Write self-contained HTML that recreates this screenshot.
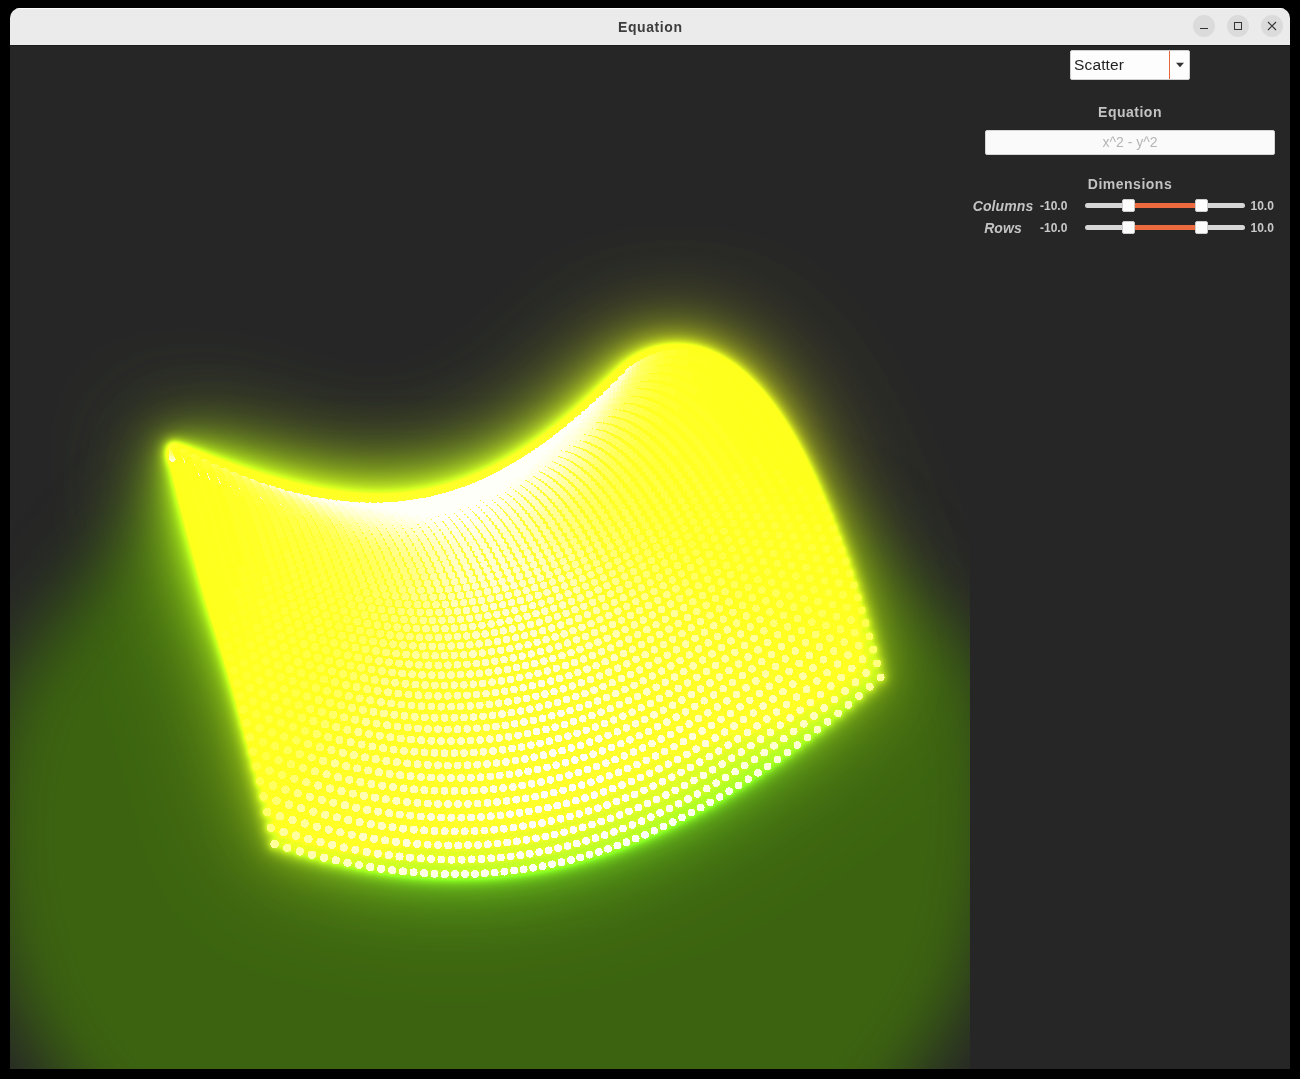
<!DOCTYPE html>
<html>
<head>
<meta charset="utf-8">
<title>Equation</title>
<style>
html,body{margin:0;padding:0;background:#000;}
body{width:1300px;height:1079px;position:relative;overflow:hidden;font-family:"Liberation Sans",sans-serif;}
#win{position:absolute;left:10px;top:8px;width:1280px;height:1061px;background:#262626;border-radius:10px 10px 0 0;overflow:hidden;}
#tb{position:absolute;left:0;top:0;width:1280px;height:37px;background:#ebebeb;box-shadow:inset 0 1px 0 #fbfbfb;border-bottom:1px solid #1b1b1b;box-sizing:content-box;}
#title{position:absolute;left:0;width:1280px;top:11px;text-align:center;font-weight:bold;font-size:14px;line-height:16px;color:#3d3d3d;letter-spacing:0.6px;text-indent:0.6px;}
.wb{position:absolute;top:7px;width:22px;height:22px;border-radius:11px;background:#dbdbdb;}
.wb svg{position:absolute;left:0;top:0;}
#view{position:absolute;left:0;top:37px;width:960px;height:1024px;overflow:hidden;background:#262626;}
#panel{position:absolute;left:960px;top:37px;width:320px;height:1024px;background:#262626;}
.lbl{position:absolute;color:#c3c3c3;font-weight:bold;font-size:14px;line-height:16px;white-space:nowrap;letter-spacing:0.5px;}
.it{font-style:italic;letter-spacing:0.1px;}
.num{position:absolute;color:#c9c9c9;font-weight:bold;font-size:12px;line-height:14px;white-space:nowrap;}
#combo{position:absolute;left:100px;top:5px;width:120px;height:30px;background:#fdfdfd;border:1px solid #cfcfcf;border-radius:2px;box-sizing:border-box;}
#combo .t{position:absolute;left:3px;top:5px;letter-spacing:0.15px;font-size:15.5px;line-height:17px;color:#222;}
#combo .sep{position:absolute;left:98px;top:0;width:1px;height:28px;background:#e4683a;}
#eq{position:absolute;left:15px;top:85px;width:290px;height:25px;background:#fafafa;border:1px solid #d4d4d4;border-radius:2px;box-sizing:border-box;text-align:center;color:#b5b5b5;font-size:14px;line-height:23px;}
.trk{position:absolute;left:115px;width:160px;height:5px;border-radius:2.5px;background:#d6d6d6;}
.fill{position:absolute;left:160px;width:70px;height:5px;background:#ec6b3e;}
.hd{position:absolute;width:13px;height:13px;background:#fdfdfd;border:1px solid #cdcdcd;border-radius:2px;box-sizing:border-box;}
</style>
</head>
<body>
<div id="win">
<div id="view">
<svg width="960" height="1024" viewBox="0 0 960 1024" style="position:absolute;left:0;top:0">
<defs>
<g id="d"><style>.a{fill:rgb(138,255,44)}.b{fill:rgb(138,255,46)}.c{fill:rgb(138,255,48)}.d{fill:rgb(138,255,50)}.e{fill:rgb(148,255,42)}.f{fill:rgb(148,255,44)}.g{fill:rgb(148,255,46)}.h{fill:rgb(148,255,48)}.i{fill:rgb(148,255,50)}.j{fill:rgb(158,255,40)}.k{fill:rgb(158,255,42)}.l{fill:rgb(158,255,44)}.m{fill:rgb(158,255,46)}.n{fill:rgb(158,255,48)}.o{fill:rgb(168,255,39)}.p{fill:rgb(168,255,40)}.q{fill:rgb(168,255,42)}.r{fill:rgb(168,255,44)}.s{fill:rgb(168,255,46)}.t{fill:rgb(168,255,48)}.u{fill:rgb(178,255,37)}.v{fill:rgb(178,255,39)}.w{fill:rgb(178,255,40)}.x{fill:rgb(178,255,42)}.y{fill:rgb(178,255,44)}.z{fill:rgb(178,255,46)}.aa{fill:rgb(189,255,6)}.ab{fill:rgb(189,255,8)}.ac{fill:rgb(189,255,10)}.ad{fill:rgb(189,255,12)}.ae{fill:rgb(189,255,14)}.af{fill:rgb(189,255,35)}.ag{fill:rgb(189,255,37)}.ah{fill:rgb(189,255,39)}.ai{fill:rgb(189,255,40)}.aj{fill:rgb(189,255,42)}.ak{fill:rgb(189,255,44)}.al{fill:rgb(199,255,6)}.am{fill:rgb(199,255,8)}.an{fill:rgb(199,255,10)}.ao{fill:rgb(199,255,12)}.ap{fill:rgb(199,255,14)}.aq{fill:rgb(199,255,16)}.ar{fill:rgb(199,255,18)}.as{fill:rgb(199,255,19)}.at{fill:rgb(199,255,33)}.au{fill:rgb(199,255,35)}.av{fill:rgb(199,255,37)}.aw{fill:rgb(199,255,39)}.ax{fill:rgb(199,255,40)}.ay{fill:rgb(199,255,42)}.az{fill:rgb(199,255,44)}.ba{fill:rgb(149,191,46)}.bb{fill:rgb(149,191,48)}.bc{fill:rgb(149,191,50)}.bd{fill:rgb(209,255,6)}.be{fill:rgb(209,255,8)}.bf{fill:rgb(209,255,10)}.bg{fill:rgb(209,255,12)}.bh{fill:rgb(209,255,14)}.bi{fill:rgb(209,255,16)}.bj{fill:rgb(209,255,18)}.bk{fill:rgb(209,255,19)}.bl{fill:rgb(209,255,21)}.bm{fill:rgb(209,255,23)}.bn{fill:rgb(209,255,25)}.bo{fill:rgb(209,255,27)}.bp{fill:rgb(209,255,31)}.bq{fill:rgb(209,255,33)}.br{fill:rgb(209,255,35)}.bs{fill:rgb(209,255,37)}.bt{fill:rgb(209,255,39)}.bu{fill:rgb(209,255,40)}.bv{fill:rgb(209,255,42)}.bw{fill:rgb(209,255,44)}.bx{fill:rgb(157,191,44)}.by{fill:rgb(209,255,46)}.bz{fill:rgb(157,191,46)}.ca{fill:rgb(209,255,48)}.cb{fill:rgb(157,191,48)}.cc{fill:rgb(209,255,50)}.cd{fill:rgb(157,191,50)}.ce{fill:rgb(219,255,8)}.cf{fill:rgb(219,255,10)}.cg{fill:rgb(219,255,12)}.ch{fill:rgb(219,255,14)}.ci{fill:rgb(219,255,16)}.cj{fill:rgb(219,255,18)}.ck{fill:rgb(219,255,19)}.cl{fill:rgb(219,255,21)}.cm{fill:rgb(219,255,23)}.cn{fill:rgb(219,255,25)}.co{fill:rgb(219,255,27)}.cp{fill:rgb(219,255,29)}.cq{fill:rgb(219,255,31)}.cr{fill:rgb(219,255,33)}.cs{fill:rgb(219,255,35)}.ct{fill:rgb(219,255,37)}.cu{fill:rgb(219,255,39)}.cv{fill:rgb(219,255,40)}.cw{fill:rgb(219,255,42)}.cx{fill:rgb(164,191,42)}.cy{fill:rgb(219,255,44)}.cz{fill:rgb(164,191,44)}.da{fill:rgb(219,255,46)}.db{fill:rgb(230,255,6)}.dc{fill:rgb(230,255,8)}.dd{fill:rgb(230,255,10)}.de{fill:rgb(230,255,12)}.df{fill:rgb(230,255,14)}.dg{fill:rgb(230,255,16)}.dh{fill:rgb(230,255,18)}.di{fill:rgb(230,255,19)}.dj{fill:rgb(230,255,21)}.dk{fill:rgb(240,255,6)}</style>
<circle class=cd cx=490.0 cy=429.5 r=3.10 /><circle class=cd cx=483.1 cy=433.2 r=3.10 /><circle class=cd cx=497.0 cy=425.6 r=3.10 /><circle class=cd cx=476.1 cy=436.7 r=3.10 /><circle class=cd cx=504.0 cy=421.4 r=3.10 /><circle class=cd cx=469.2 cy=440.1 r=3.10 /><circle class=cd cx=510.9 cy=417.1 r=3.10 /><circle class=cd cx=462.2 cy=443.2 r=3.10 /><circle class=cd cx=517.9 cy=412.6 r=3.10 /><circle class=cd cx=455.2 cy=446.1 r=3.10 /><circle class=cd cx=524.9 cy=407.9 r=3.10 /><circle class=cd cx=448.2 cy=448.9 r=3.10 /><circle class=cd cx=531.9 cy=402.9 r=3.10 /><circle class=cd cx=441.2 cy=451.4 r=3.10 /><circle class=cd cx=538.9 cy=397.8 r=3.10 /><circle class=cd cx=434.2 cy=453.8 r=3.11 /><circle class=cd cx=546.0 cy=392.4 r=3.11 /><circle class=cd cx=427.2 cy=456.0 r=3.11 /><circle class=cd cx=553.0 cy=386.8 r=3.11 /><circle class=cd cx=420.1 cy=458.0 r=3.11 /><circle class=cd cx=560.1 cy=381.0 r=3.11 /><circle class=cd cx=413.0 cy=459.8 r=3.11 /><circle class=cd cx=567.2 cy=375.0 r=3.11 /><circle class=cd cx=492.6 cy=427.7 r=3.11 /><circle class=cd cx=485.6 cy=431.5 r=3.11 /><circle class=cd cx=499.6 cy=423.8 r=3.11 /><circle class=cd cx=478.5 cy=435.0 r=3.11 /><circle class=cd cx=506.6 cy=419.6 r=3.11 /><circle class=cd cx=471.5 cy=438.4 r=3.12 /><circle class=cd cx=513.6 cy=415.3 r=3.12 /><circle class=cd cx=405.9 cy=461.4 r=3.12 /><circle class=cd cx=464.5 cy=441.6 r=3.12 /><circle class=cd cx=520.7 cy=410.7 r=3.12 /><circle class=cd cx=574.4 cy=368.8 r=3.12 /><circle class=cd cx=457.5 cy=444.5 r=3.12 /><circle class=cd cx=527.7 cy=405.9 r=3.12 /><circle class=cd cx=450.4 cy=447.3 r=3.12 /><circle class=cd cx=534.8 cy=401.0 r=3.12 /><circle class=cd cx=398.7 cy=462.8 r=3.12 /><circle class=cd cx=581.6 cy=362.3 r=3.12 /><circle class=cd cx=443.4 cy=449.9 r=3.12 /><circle class=cd cx=541.9 cy=395.8 r=3.12 /><circle class=cd cx=436.3 cy=452.3 r=3.12 /><circle class=cd cx=391.6 cy=464.0 r=3.12 /><circle class=cd cx=549.0 cy=390.4 r=3.12 /><circle class=cd cx=588.8 cy=355.6 r=3.12 /><circle class=cd cx=429.2 cy=454.4 r=3.12 /><circle class=cd cx=556.1 cy=384.7 r=3.13 /><circle class=cd cx=384.3 cy=465.0 r=3.13 /><circle class=cd cx=422.1 cy=456.4 r=3.13 /><circle class=cb cx=596.1 cy=348.7 r=3.13 /><circle class=cd cx=563.3 cy=378.9 r=3.13 /><circle class=cd cx=414.9 cy=458.3 r=3.13 /><circle class=cd cx=570.4 cy=372.8 r=3.13 /><circle class=cd cx=495.2 cy=426.2 r=3.13 /><circle class=cd cx=377.1 cy=465.8 r=3.13 /><circle class=cd cx=488.1 cy=430.0 r=3.13 /><circle class=cd cx=502.2 cy=422.2 r=3.13 /><circle class=cd cx=481.0 cy=433.5 r=3.13 /><circle class=cd cx=509.3 cy=418.0 r=3.13 /><circle class=cd cx=473.9 cy=436.9 r=3.13 /><circle class=bz cx=603.4 cy=341.5 r=3.13 /><circle class=cd cx=516.4 cy=413.6 r=3.13 /><circle class=cd cx=466.9 cy=440.1 r=3.13 /><circle class=cd cx=407.8 cy=459.9 r=3.13 /><circle class=cd cx=523.5 cy=409.0 r=3.13 /><circle class=cd cx=577.7 cy=366.5 r=3.13 /><circle class=cd cx=459.8 cy=443.1 r=3.13 /><circle class=cd cx=530.6 cy=404.2 r=3.13 /><circle class=cd cx=369.8 cy=466.5 r=3.14 /><circle class=cd cx=452.7 cy=445.9 r=3.14 /><circle class=cd cx=537.7 cy=399.2 r=3.14 /><circle class=cd cx=400.6 cy=461.3 r=3.14 /><circle class=bx cx=610.7 cy=334.1 r=3.14 /><circle class=cd cx=445.6 cy=448.5 r=3.14 /><circle class=cd cx=584.9 cy=360.0 r=3.14 /><circle class=cd cx=544.9 cy=393.9 r=3.14 /><circle class=cd cx=438.4 cy=450.9 r=3.14 /><circle class=cd cx=552.0 cy=388.5 r=3.14 /><circle class=cd cx=393.3 cy=462.5 r=3.14 /><circle class=cd cx=362.4 cy=466.9 r=3.14 /><circle class=cb cx=592.2 cy=353.3 r=3.14 /><circle class=cx cx=618.1 cy=326.5 r=3.14 /><circle class=cd cx=431.3 cy=453.1 r=3.14 /><circle class=cd cx=559.2 cy=382.8 r=3.14 /><circle class=cd cx=386.1 cy=463.5 r=3.14 /><circle class=cd cx=424.1 cy=455.1 r=3.14 /><circle class=cd cx=566.4 cy=376.9 r=3.14 /><circle class=cd cx=355.0 cy=467.2 r=3.14 /><circle class=bz cx=599.5 cy=346.3 r=3.15 /><circle class=cd cx=416.9 cy=456.9 r=3.15 /><circle class=cd cx=497.8 cy=424.8 r=3.15 /><circle class=cd cx=490.6 cy=428.6 r=3.15 /><circle class=cd cx=504.9 cy=420.8 r=3.15 /><circle class=cd cx=573.7 cy=370.8 r=3.15 /><circle class=cd cx=483.5 cy=432.2 r=3.15 /><circle class=cd cx=378.7 cy=464.4 r=3.15 /><circle class=cd cx=512.0 cy=416.5 r=3.15 /><circle class=cd cx=476.4 cy=435.6 r=3.15 /><circle class=cd cx=519.2 cy=412.1 r=3.15 /><circle class=bx cx=606.9 cy=339.0 r=3.15 /><circle class=cd cx=469.3 cy=438.8 r=3.15 /><circle class=cd cx=526.3 cy=407.5 r=3.15 /><circle class=cd cx=409.7 cy=458.5 r=3.15 /><circle class=cd cx=347.6 cy=467.2 r=3.15 /><circle class=cd cx=462.1 cy=441.8 r=3.15 /><circle class=cd cx=581.0 cy=364.5 r=3.15 /><circle class=cd cx=533.5 cy=402.6 r=3.15 /><circle class=cd cx=455.0 cy=444.7 r=3.15 /><circle class=cd cx=371.4 cy=465.0 r=3.15 /><circle class=cd cx=540.7 cy=397.6 r=3.15 /><circle class=cd cx=402.4 cy=460.0 r=3.15 /><circle class=cx cx=614.3 cy=331.6 r=3.15 /><circle class=cd cx=447.8 cy=447.3 r=3.15 /><circle class=cb cx=588.3 cy=357.9 r=3.15 /><circle class=cd cx=547.9 cy=392.3 r=3.15 /><circle class=cd cx=340.1 cy=467.1 r=3.16 /><circle class=cd cx=440.6 cy=449.7 r=3.16 /><circle class=cd cx=555.1 cy=386.8 r=3.16 /><circle class=cd cx=395.1 cy=461.2 r=3.16 /><circle class=cd cx=364.0 cy=465.5 r=3.16 /><circle class=bz cx=595.6 cy=351.1 r=3.16 /><circle class=cd cx=433.4 cy=451.9 r=3.16 /><circle class=cu cx=621.8 cy=323.8 r=3.16 /><circle class=cd cx=562.4 cy=381.1 r=3.16 /><circle class=cd cx=426.2 cy=453.9 r=3.16 /><circle class=cd cx=387.8 cy=462.2 r=3.16 /><circle class=cd cx=569.6 cy=375.1 r=3.16 /><circle class=cd cx=332.5 cy=466.7 r=3.16 /><circle class=bx cx=603.0 cy=344.0 r=3.16 /><circle class=cd cx=356.5 cy=465.7 r=3.16 /><circle class=cd cx=418.9 cy=455.8 r=3.16 /><circle class=cd cx=500.4 cy=423.6 r=3.16 /><circle class=cd cx=493.3 cy=427.4 r=3.16 /><circle class=cd cx=507.6 cy=419.5 r=3.16 /><circle class=cd cx=486.1 cy=431.1 r=3.16 /><circle class=cd cx=576.9 cy=369.0 r=3.16 /><circle class=cd cx=514.8 cy=415.3 r=3.16 /><circle class=cd cx=478.9 cy=434.5 r=3.17 /><circle class=cd cx=380.4 cy=463.1 r=3.17 /><circle class=cd cx=522.0 cy=410.8 r=3.17 /><circle class=cd cx=471.7 cy=437.7 r=3.17 /><circle class=cd cx=529.2 cy=406.1 r=3.17 /><circle class=cx cx=610.5 cy=336.7 r=3.17 /><circle class=cd cx=411.6 cy=457.4 r=3.17 /><circle class=cd cx=464.5 cy=440.8 r=3.17 /><circle class=cd cx=349.0 cy=465.8 r=3.17 /><circle class=cd cx=536.4 cy=401.3 r=3.17 /><circle class=cb cx=584.3 cy=362.6 r=3.17 /><circle class=cd cx=324.9 cy=466.2 r=3.17 /><circle class=cd cx=457.3 cy=443.6 r=3.17 /><circle class=cd cx=543.7 cy=396.1 r=3.17 /><circle class=cd cx=373.0 cy=463.7 r=3.17 /><circle class=cd cx=404.3 cy=458.8 r=3.17 /><circle class=cd cx=450.1 cy=446.2 r=3.17 /><circle class=cu cx=618.0 cy=329.2 r=3.17 /><circle class=cd cx=550.9 cy=390.8 r=3.17 /><circle class=bz cx=591.7 cy=355.9 r=3.17 /><circle class=cd cx=442.8 cy=448.7 r=3.17 /><circle class=cd cx=558.2 cy=385.3 r=3.17 /><circle class=cd cx=341.4 cy=465.6 r=3.17 /><circle class=cd cx=397.0 cy=460.1 r=3.17 /><circle class=cd cx=317.2 cy=465.4 r=3.17 /><circle class=cd cx=365.5 cy=464.2 r=3.17 /><circle class=cd cx=435.6 cy=450.9 r=3.18 /><circle class=bx cx=599.1 cy=349.1 r=3.18 /><circle class=cd cx=565.5 cy=379.5 r=3.18 /><circle class=cr cx=625.5 cy=321.4 r=3.18 /><circle class=cd cx=428.3 cy=453.0 r=3.18 /><circle class=cd cx=389.6 cy=461.1 r=3.18 /><circle class=cd cx=572.9 cy=373.5 r=3.18 /><circle class=cx cx=606.6 cy=341.9 r=3.18 /><circle class=cd cx=333.8 cy=465.3 r=3.18 /><circle class=cd cx=358.0 cy=464.4 r=3.18 /><circle class=cd cx=421.0 cy=454.8 r=3.18 /><circle class=cd cx=503.1 cy=422.6 r=3.18 /><circle class=cd cx=495.9 cy=426.4 r=3.18 /><circle class=cd cx=510.4 cy=418.5 r=3.18 /><circle class=cd cx=488.7 cy=430.1 r=3.18 /><circle class=cd cx=517.6 cy=414.2 r=3.18 /><circle class=cd cx=309.4 cy=464.5 r=3.18 /><circle class=cb cx=580.3 cy=367.3 r=3.18 /><circle class=cd cx=481.4 cy=433.6 r=3.18 /><circle class=cd cx=524.9 cy=409.7 r=3.18 /><circle class=cd cx=382.2 cy=462.0 r=3.18 /><circle class=cd cx=474.2 cy=436.8 r=3.18 /><circle class=cd cx=532.1 cy=405.0 r=3.18 /><circle class=cu cx=614.1 cy=334.6 r=3.18 /><circle class=cd cx=413.6 cy=456.5 r=3.18 /><circle class=cd cx=466.9 cy=439.9 r=3.18 /><circle class=cd cx=539.4 cy=400.1 r=3.18 /><circle class=bz cx=587.7 cy=360.8 r=3.18 /><circle class=cd cx=350.5 cy=464.5 r=3.19 /><circle class=cd cx=459.7 cy=442.7 r=3.19 /><circle class=cd cx=326.1 cy=464.7 r=3.19 /><circle class=cd cx=546.7 cy=394.9 r=3.19 /><circle class=cd cx=374.7 cy=462.6 r=3.19 /><circle class=cd cx=406.3 cy=457.9 r=3.19 /><circle class=cd cx=452.4 cy=445.4 r=3.19 /><circle class=cd cx=554.1 cy=389.5 r=3.19 /><circle class=bx cx=595.1 cy=354.2 r=3.19 /><circle class=cr cx=621.6 cy=327.0 r=3.19 /><circle class=cd cx=301.6 cy=463.3 r=3.19 /><circle class=cd cx=445.1 cy=447.9 r=3.19 /><circle class=cd cx=561.4 cy=384.0 r=3.19 /><circle class=cd cx=342.8 cy=464.3 r=3.19 /><circle class=cd cx=398.9 cy=459.1 r=3.19 /><circle class=cd cx=437.8 cy=450.1 r=3.19 /><circle class=cd cx=367.2 cy=463.1 r=3.19 /><circle class=cx cx=602.6 cy=347.2 r=3.19 /><circle class=cd cx=318.4 cy=463.9 r=3.19 /><circle class=cd cx=568.8 cy=378.1 r=3.19 /><circle class=co cx=629.2 cy=319.1 r=3.19 /><circle class=cd cx=430.4 cy=452.2 r=3.19 /><circle class=cd cx=391.4 cy=460.2 r=3.20 /><circle class=cb cx=576.2 cy=372.1 r=3.20 /><circle class=cd cx=293.7 cy=461.9 r=3.20 /><circle class=cu cx=610.1 cy=340.0 r=3.20 /><circle class=cd cx=335.2 cy=464.0 r=3.20 /><circle class=cd cx=359.6 cy=463.3 r=3.20 /><circle class=cd cx=505.9 cy=421.7 r=3.20 /><circle class=cd cx=498.6 cy=425.6 r=3.20 /><circle class=cd cx=423.1 cy=454.0 r=3.20 /><circle class=cd cx=513.2 cy=417.6 r=3.20 /><circle class=cd cx=491.3 cy=429.3 r=3.20 /><circle class=cd cx=520.5 cy=413.3 r=3.20 /><circle class=bz cx=583.6 cy=365.8 r=3.20 /><circle class=cd cx=484.0 cy=432.8 r=3.20 /><circle class=cd cx=527.8 cy=408.8 r=3.20 /><circle class=cd cx=310.5 cy=463.0 r=3.20 /><circle class=cd cx=476.7 cy=436.1 r=3.20 /><circle class=cd cx=383.9 cy=461.1 r=3.20 /><circle class=cd cx=535.1 cy=404.0 r=3.20 /><circle class=cd cx=469.4 cy=439.2 r=3.20 /><circle class=cd cx=415.7 cy=455.7 r=3.20 /><circle class=cr cx=617.7 cy=332.6 r=3.20 /><circle class=cd cx=542.5 cy=399.1 r=3.20 /><circle class=bx cx=591.1 cy=359.3 r=3.20 /><circle class=cd cx=462.1 cy=442.1 r=3.20 /><circle class=cd cx=549.8 cy=393.9 r=3.20 /><circle class=cd cx=352.0 cy=463.4 r=3.20 /><circle class=cd cx=327.4 cy=463.4 r=3.20 /><circle class=cd cx=285.7 cy=460.3 r=3.20 /><circle class=cd cx=454.7 cy=444.8 r=3.20 /><circle class=cd cx=408.2 cy=457.1 r=3.20 /><circle class=cd cx=376.4 cy=461.7 r=3.20 /><circle class=cd cx=557.2 cy=388.5 r=3.20 /><circle class=cx cx=598.6 cy=352.6 r=3.21 /><circle class=cp cx=625.3 cy=324.9 r=3.21 /><circle class=cd cx=447.4 cy=447.2 r=3.21 /><circle class=cd cx=302.6 cy=461.8 r=3.21 /><circle class=cb cx=564.6 cy=382.8 r=3.21 /><circle class=cd cx=400.8 cy=458.4 r=3.21 /><circle class=cd cx=440.0 cy=449.5 r=3.21 /><circle class=cd cx=344.3 cy=463.2 r=3.21 /><circle class=cu cx=606.1 cy=345.6 r=3.21 /><circle class=cd cx=368.8 cy=462.2 r=3.21 /><circle class=cb cx=572.0 cy=377.0 r=3.21 /><circle class=cd cx=319.6 cy=462.6 r=3.21 /><circle class=cm cx=633.0 cy=317.0 r=3.21 /><circle class=cd cx=432.6 cy=451.6 r=3.21 /><circle class=bz cx=579.5 cy=370.9 r=3.21 /><circle class=cd cx=277.6 cy=458.5 r=3.21 /><circle class=cd cx=393.3 cy=459.5 r=3.21 /><circle class=cr cx=613.7 cy=338.3 r=3.21 /><circle class=cd cx=508.6 cy=421.1 r=3.21 /><circle class=cd cx=501.3 cy=425.0 r=3.21 /><circle class=cd cx=516.0 cy=417.0 r=3.21 /><circle class=cd cx=425.2 cy=453.4 r=3.21 /><circle class=cd cx=493.9 cy=428.8 r=3.21 /><circle class=cd cx=294.7 cy=460.4 r=3.21 /><circle class=cd cx=523.4 cy=412.6 r=3.21 /><circle class=cd cx=361.2 cy=462.4 r=3.21 /><circle class=cd cx=336.5 cy=462.8 r=3.21 /><circle class=cd cx=486.6 cy=432.3 r=3.22 /><circle class=bx cx=587.0 cy=364.6 r=3.22 /><circle class=cd cx=530.7 cy=408.0 r=3.22 /><circle class=cd cx=479.2 cy=435.6 r=3.22 /><circle class=cd cx=538.1 cy=403.3 r=3.22 /><circle class=cd cx=385.7 cy=460.3 r=3.22 /><circle class=cd cx=471.9 cy=438.7 r=3.22 /><circle class=cd cx=311.7 cy=461.6 r=3.22 /><circle class=cd cx=417.7 cy=455.1 r=3.22 /><circle class=cd cx=545.5 cy=398.3 r=3.22 /><circle class=cp cx=621.4 cy=330.9 r=3.22 /><circle class=cx cx=594.5 cy=358.0 r=3.22 /><circle class=cd cx=464.5 cy=441.6 r=3.22 /><circle class=cd cx=552.9 cy=393.0 r=3.22 /><circle class=cd cx=353.5 cy=462.4 r=3.22 /><circle class=cd cx=269.4 cy=456.5 r=3.22 /><circle class=cd cx=457.1 cy=444.3 r=3.22 /><circle class=cd cx=410.3 cy=456.6 r=3.22 /><circle class=cb cx=560.4 cy=387.6 r=3.22 /><circle class=cd cx=328.7 cy=462.3 r=3.22 /><circle class=cd cx=378.2 cy=461.0 r=3.22 /><circle class=cu cx=602.1 cy=351.2 r=3.22 /><circle class=cd cx=286.6 cy=458.8 r=3.22 /><circle class=cd cx=449.7 cy=446.8 r=3.22 /><circle class=cm cx=629.1 cy=323.1 r=3.22 /><circle class=cb cx=567.9 cy=381.9 r=3.22 /><circle class=cd cx=303.7 cy=460.4 r=3.22 /><circle class=cd cx=402.7 cy=457.9 r=3.23 /><circle class=cd cx=442.3 cy=449.1 r=3.23 /><circle class=bz cx=575.3 cy=376.0 r=3.23 /><circle class=cd cx=345.8 cy=462.3 r=3.23 /><circle class=cs cx=609.7 cy=344.1 r=3.23 /><circle class=cd cx=370.5 cy=461.4 r=3.23 /><circle class=cd cx=434.8 cy=451.2 r=3.23 /><circle class=di cx=636.9 cy=315.1 r=3.23 /><circle class=cd cx=320.8 cy=461.5 r=3.23 /><circle class=bx cx=582.9 cy=369.9 r=3.23 /><circle class=cd cx=395.2 cy=458.9 r=3.23 /><circle class=cd cx=261.1 cy=454.3 r=3.23 /><circle class=cd cx=511.5 cy=420.7 r=3.23 /><circle class=cd cx=504.1 cy=424.7 r=3.23 /><circle class=cd cx=518.9 cy=416.5 r=3.23 /><circle class=cp cx=617.4 cy=336.8 r=3.23 /><circle class=cd cx=278.4 cy=457.0 r=3.23 /><circle class=cd cx=496.7 cy=428.4 r=3.23 /><circle class=cd cx=526.3 cy=412.1 r=3.23 /><circle class=cd cx=427.4 cy=453.1 r=3.23 /><circle class=cd cx=489.2 cy=432.0 r=3.23 /><circle class=cd cx=533.7 cy=407.5 r=3.23 /><circle class=cx cx=590.4 cy=363.5 r=3.23 /><circle class=cd cx=362.8 cy=461.7 r=3.23 /><circle class=cd cx=481.8 cy=435.3 r=3.23 /><circle class=cd cx=338.0 cy=461.9 r=3.23 /><circle class=cd cx=295.7 cy=459.0 r=3.23 /><circle class=cd cx=541.2 cy=402.7 r=3.23 /><circle class=cd cx=474.4 cy=438.4 r=3.23 /><circle class=cd cx=387.6 cy=459.8 r=3.23 /><circle class=cd cx=548.6 cy=397.7 r=3.23 /><circle class=cd cx=419.9 cy=454.7 r=3.23 /><circle class=cn cx=625.1 cy=329.3 r=3.24 /><circle class=cd cx=467.0 cy=441.3 r=3.24 /><circle class=cd cx=312.9 cy=460.5 r=3.24 /><circle class=cu cx=598.0 cy=356.9 r=3.24 /><circle class=cb cx=556.1 cy=392.4 r=3.24 /><circle class=cd cx=459.5 cy=444.1 r=3.24 /><circle class=cd cx=355.1 cy=461.7 r=3.24 /><circle class=cb cx=563.6 cy=386.9 r=3.24 /><circle class=cd cx=412.3 cy=456.2 r=3.24 /><circle class=cd cx=380.0 cy=460.4 r=3.24 /><circle class=cd cx=252.8 cy=451.8 r=3.24 /><circle class=cd cx=330.1 cy=461.3 r=3.24 /><circle class=cs cx=605.7 cy=350.0 r=3.24 /><circle class=cd cx=270.2 cy=454.9 r=3.24 /><circle class=cd cx=452.1 cy=446.6 r=3.24 /><circle class=bz cx=571.1 cy=381.2 r=3.24 /><circle class=di cx=632.9 cy=321.5 r=3.24 /><circle class=cd cx=287.6 cy=457.4 r=3.24 /><circle class=cd cx=444.6 cy=448.9 r=3.24 /><circle class=cd cx=404.8 cy=457.5 r=3.24 /><circle class=bx cx=578.7 cy=375.2 r=3.24 /><circle class=cd cx=304.9 cy=459.3 r=3.24 /><circle class=cp cx=613.4 cy=342.9 r=3.24 /><circle class=cd cx=347.3 cy=461.5 r=3.24 /><circle class=cd cx=372.3 cy=460.9 r=3.24 /><circle class=cd cx=437.1 cy=451.0 r=3.24 /><circle class=dh cx=640.7 cy=313.4 r=3.25 /><circle class=cx cx=586.3 cy=369.0 r=3.25 /><circle class=cd cx=322.2 cy=460.5 r=3.25 /><circle class=cd cx=397.1 cy=458.6 r=3.25 /><circle class=cd cx=514.3 cy=420.5 r=3.25 /><circle class=cd cx=506.9 cy=424.5 r=3.25 /><circle class=cd cx=521.8 cy=416.3 r=3.25 /><circle class=cd cx=499.4 cy=428.2 r=3.25 /><circle class=cd cx=529.3 cy=411.8 r=3.25 /><circle class=cn cx=621.1 cy=335.5 r=3.25 /><circle class=cd cx=429.6 cy=452.9 r=3.25 /><circle class=cd cx=491.9 cy=431.8 r=3.25 /><circle class=cd cx=536.7 cy=407.2 r=3.25 /><circle class=cd cx=261.9 cy=452.6 r=3.25 /><circle class=cd cx=244.3 cy=449.1 r=3.25 /><circle class=cu cx=593.9 cy=362.6 r=3.25 /><circle class=cd cx=484.5 cy=435.2 r=3.25 /><circle class=cd cx=279.3 cy=455.5 r=3.25 /><circle class=cd cx=544.2 cy=402.3 r=3.25 /><circle class=cd cx=364.5 cy=461.1 r=3.25 /><circle class=cd cx=339.4 cy=461.2 r=3.25 /><circle class=cd cx=477.0 cy=438.3 r=3.25 /><circle class=cb cx=551.8 cy=397.3 r=3.25 /><circle class=cd cx=296.8 cy=457.8 r=3.25 /><circle class=cd cx=389.5 cy=459.4 r=3.25 /><circle class=cd cx=422.0 cy=454.6 r=3.25 /><circle class=cd cx=469.5 cy=441.3 r=3.25 /><circle class=cs cx=601.6 cy=355.9 r=3.25 /><circle class=cl cx=628.9 cy=327.9 r=3.25 /><circle class=bz cx=559.3 cy=392.0 r=3.25 /><circle class=cd cx=314.1 cy=459.5 r=3.25 /><circle class=cd cx=462.0 cy=444.0 r=3.25 /><circle class=bz cx=566.9 cy=386.4 r=3.25 /><circle class=cd cx=414.4 cy=456.1 r=3.26 /><circle class=cd cx=356.7 cy=461.2 r=3.26 /><circle class=cd cx=381.8 cy=460.1 r=3.26 /><circle class=cd cx=454.5 cy=446.5 r=3.26 /><circle class=cq cx=609.3 cy=349.0 r=3.26 /><circle class=bx cx=574.5 cy=380.7 r=3.26 /><circle class=cd cx=331.5 cy=460.6 r=3.26 /><circle class=dh cx=636.7 cy=320.1 r=3.26 /><circle class=cd cx=253.4 cy=450.1 r=3.26 /><circle class=cd cx=271.0 cy=453.5 r=3.26 /><circle class=cd cx=447.0 cy=448.9 r=3.26 /><circle class=cd cx=235.7 cy=446.1 r=3.26 /><circle class=cd cx=406.8 cy=457.3 r=3.26 /><circle class=cd cx=288.6 cy=456.2 r=3.26 /><circle class=cx cx=582.1 cy=374.7 r=3.26 /><circle class=cn cx=617.0 cy=341.9 r=3.26 /><circle class=cd cx=306.1 cy=458.3 r=3.26 /><circle class=cd cx=374.1 cy=460.6 r=3.26 /><circle class=cd cx=348.9 cy=461.0 r=3.26 /><circle class=cd cx=439.4 cy=451.0 r=3.26 /><circle class=cu cx=589.7 cy=368.4 r=3.26 /><circle class=dg cx=644.6 cy=311.9 r=3.26 /><circle class=cd cx=517.2 cy=420.5 r=3.26 /><circle class=cd cx=509.7 cy=424.5 r=3.26 /><circle class=cd cx=524.7 cy=416.2 r=3.26 /><circle class=cd cx=399.1 cy=458.4 r=3.26 /><circle class=cd cx=502.2 cy=428.3 r=3.26 /><circle class=cd cx=532.3 cy=411.8 r=3.26 /><circle class=cd cx=323.5 cy=459.8 r=3.26 /><circle class=cd cx=494.7 cy=431.9 r=3.26 /><circle class=cd cx=431.8 cy=452.9 r=3.26 /><circle class=cb cx=539.8 cy=407.1 r=3.26 /><circle class=cl cx=624.8 cy=334.5 r=3.26 /><circle class=cd cx=487.1 cy=435.3 r=3.27 /><circle class=cs cx=597.4 cy=361.9 r=3.27 /><circle class=cb cx=547.4 cy=402.2 r=3.27 /><circle class=cd cx=479.6 cy=438.5 r=3.27 /><circle class=cd cx=366.3 cy=460.8 r=3.27 /><circle class=bz cx=554.9 cy=397.1 r=3.27 /><circle class=cd cx=262.6 cy=451.2 r=3.27 /><circle class=cd cx=244.9 cy=447.4 r=3.27 /><circle class=cd cx=280.3 cy=454.3 r=3.27 /><circle class=cd cx=340.9 cy=460.6 r=3.27 /><circle class=cd cx=424.2 cy=454.6 r=3.27 /><circle class=cd cx=391.4 cy=459.3 r=3.27 /><circle class=cd cx=472.1 cy=441.4 r=3.27 /><circle class=bz cx=562.5 cy=391.7 r=3.27 /><circle class=cd cx=227.0 cy=442.9 r=3.27 /><circle class=cq cx=605.1 cy=355.2 r=3.27 /><circle class=cd cx=297.9 cy=456.9 r=3.27 /><circle class=di cx=632.7 cy=326.8 r=3.27 /><circle class=cd cx=464.5 cy=444.2 r=3.27 /><circle class=bx cx=570.2 cy=386.2 r=3.27 /><circle class=cd cx=315.4 cy=458.8 r=3.27 /><circle class=cd cx=416.6 cy=456.1 r=3.27 /><circle class=cd cx=457.0 cy=446.7 r=3.27 /><circle class=cd cx=358.4 cy=460.8 r=3.27 /><circle class=co cx=612.9 cy=348.3 r=3.27 /><circle class=cd cx=383.7 cy=460.0 r=3.27 /><circle class=cx cx=577.8 cy=380.4 r=3.27 /><circle class=dg cx=640.6 cy=318.8 r=3.27 /><circle class=cd cx=333.0 cy=460.0 r=3.27 /><circle class=cd cx=449.4 cy=449.1 r=3.28 /><circle class=cd cx=408.9 cy=457.4 r=3.28 /><circle class=cu cx=585.5 cy=374.3 r=3.28 /><circle class=cd cx=271.9 cy=452.2 r=3.28 /><circle class=cd cx=254.1 cy=448.6 r=3.28 /><circle class=cm cx=620.7 cy=341.0 r=3.28 /><circle class=cd cx=289.6 cy=455.2 r=3.28 /><circle class=cd cx=236.2 cy=444.4 r=3.28 /><circle class=cd cx=441.8 cy=451.2 r=3.28 /><circle class=cd cx=375.9 cy=460.4 r=3.28 /><circle class=cs cx=593.2 cy=368.0 r=3.28 /><circle class=cd cx=350.5 cy=460.7 r=3.28 /><circle class=cd cx=307.3 cy=457.5 r=3.28 /><circle class=cd cx=520.1 cy=420.7 r=3.28 /><circle class=cd cx=512.6 cy=424.7 r=3.28 /><circle class=cd cx=527.7 cy=416.4 r=3.28 /><circle class=cd cx=218.2 cy=439.5 r=3.28 /><circle class=df cx=648.6 cy=310.6 r=3.28 /><circle class=cd cx=505.0 cy=428.6 r=3.28 /><circle class=cb cx=535.3 cy=411.9 r=3.28 /><circle class=cd cx=401.2 cy=458.5 r=3.28 /><circle class=cd cx=497.4 cy=432.2 r=3.28 /><circle class=cb cx=542.9 cy=407.2 r=3.28 /><circle class=cd cx=434.1 cy=453.1 r=3.28 /><circle class=di cx=628.6 cy=333.6 r=3.28 /><circle class=cd cx=489.9 cy=435.6 r=3.28 /><circle class=cd cx=324.9 cy=459.2 r=3.28 /><circle class=bz cx=550.5 cy=402.3 r=3.28 /><circle class=cq cx=601.0 cy=361.5 r=3.28 /><circle class=cd cx=482.3 cy=438.8 r=3.28 /><circle class=bz cx=558.2 cy=397.1 r=3.28 /><circle class=cd cx=368.0 cy=460.7 r=3.28 /><circle class=cd cx=426.5 cy=454.9 r=3.28 /><circle class=cd cx=474.7 cy=441.8 r=3.28 /><circle class=cd cx=393.4 cy=459.4 r=3.29 /><circle class=bx cx=565.8 cy=391.7 r=3.29 /><circle class=cd cx=342.5 cy=460.3 r=3.29 /><circle class=co cx=608.7 cy=354.7 r=3.29 /><circle class=cd cx=263.4 cy=449.9 r=3.29 /><circle class=cd cx=281.3 cy=453.3 r=3.29 /><circle class=dh cx=636.5 cy=325.8 r=3.29 /><circle class=cd cx=467.1 cy=444.6 r=3.29 /><circle class=cd cx=245.5 cy=445.9 r=3.29 /><circle class=cx cx=573.5 cy=386.1 r=3.29 /><circle class=cd cx=299.0 cy=456.1 r=3.29 /><circle class=cd cx=418.8 cy=456.4 r=3.29 /><circle class=cd cx=227.4 cy=441.2 r=3.29 /><circle class=cd cx=459.5 cy=447.1 r=3.29 /><circle class=cd cx=316.8 cy=458.2 r=3.29 /><circle class=cm cx=616.6 cy=347.7 r=3.29 /><circle class=cv cx=581.2 cy=380.3 r=3.29 /><circle class=cd cx=360.1 cy=460.7 r=3.29 /><circle class=cd cx=385.6 cy=460.1 r=3.29 /><circle class=cd cx=209.2 cy=435.8 r=3.29 /><circle class=cd cx=451.8 cy=449.5 r=3.29 /><circle class=df cx=644.5 cy=317.8 r=3.29 /><circle class=ct cx=588.9 cy=374.2 r=3.29 /><circle class=cd cx=334.5 cy=459.7 r=3.29 /><circle class=cd cx=411.0 cy=457.7 r=3.29 /><circle class=di cx=624.5 cy=340.4 r=3.29 /><circle class=cd cx=444.2 cy=451.7 r=3.29 /><circle class=cq cx=596.7 cy=367.9 r=3.30 /><circle class=cd cx=272.8 cy=451.2 r=3.30 /><circle class=cd cx=377.8 cy=460.5 r=3.30 /><circle class=cd cx=523.1 cy=421.1 r=3.30 /><circle class=cd cx=515.5 cy=425.2 r=3.30 /><circle class=cd cx=254.9 cy=447.3 r=3.30 /><circle class=cb cx=530.7 cy=416.8 r=3.30 /><circle class=cd cx=290.7 cy=454.4 r=3.30 /><circle class=cd cx=507.9 cy=429.1 r=3.30 /><circle class=cd cx=352.1 cy=460.5 r=3.30 /><circle class=cb cx=538.4 cy=412.3 r=3.30 /><circle class=cd cx=500.2 cy=432.7 r=3.30 /><circle class=de cx=652.5 cy=309.6 r=3.30 /><circle class=cd cx=403.3 cy=458.8 r=3.30 /><circle class=bz cx=546.0 cy=407.6 r=3.30 /><circle class=cd cx=236.8 cy=442.8 r=3.30 /><circle class=cd cx=308.5 cy=456.9 r=3.30 /><circle class=cd cx=436.5 cy=453.6 r=3.30 /><circle class=cd cx=492.6 cy=436.2 r=3.30 /><circle class=bz cx=553.7 cy=402.6 r=3.30 /><circle class=dh cx=632.4 cy=332.9 r=3.30 /><circle class=co cx=604.5 cy=361.3 r=3.30 /><circle class=cd cx=485.0 cy=439.4 r=3.30 /><circle class=cd cx=218.5 cy=437.7 r=3.30 /><circle class=cd cx=326.3 cy=458.9 r=3.30 /><circle class=bx cx=561.4 cy=397.4 r=3.30 /><circle class=cd cx=477.3 cy=442.4 r=3.30 /><circle class=cd cx=369.8 cy=460.8 r=3.30 /><circle class=cd cx=428.7 cy=455.3 r=3.30 /><circle class=cx cx=569.1 cy=392.0 r=3.30 /><circle class=cd cx=395.4 cy=459.7 r=3.30 /><circle class=cm cx=612.4 cy=354.5 r=3.30 /><circle class=cd cx=200.2 cy=431.9 r=3.30 /><circle class=cd cx=469.7 cy=445.2 r=3.30 /><circle class=cd cx=344.1 cy=460.2 r=3.30 /><circle class=dg cx=640.4 cy=325.1 r=3.30 /><circle class=cv cx=576.9 cy=386.3 r=3.30 /><circle class=cd cx=282.3 cy=452.5 r=3.31 /><circle class=cd cx=264.3 cy=448.8 r=3.31 /><circle class=cd cx=421.0 cy=456.9 r=3.31 /><circle class=cd cx=462.0 cy=447.8 r=3.31 /><circle class=cd cx=300.3 cy=455.5 r=3.31 /><circle class=cd cx=246.2 cy=444.5 r=3.31 /><circle class=ct cx=584.6 cy=380.4 r=3.31 /><circle class=di cx=620.3 cy=347.4 r=3.31 /><circle class=cd cx=387.6 cy=460.4 r=3.31 /><circle class=cd cx=361.9 cy=460.8 r=3.31 /><circle class=cd cx=318.1 cy=457.8 r=3.31 /><circle class=cd cx=454.3 cy=450.2 r=3.31 /><circle class=cd cx=227.9 cy=439.6 r=3.31 /><circle class=de cx=648.4 cy=317.0 r=3.31 /><circle class=cr cx=592.4 cy=374.3 r=3.31 /><circle class=cd cx=413.2 cy=458.2 r=3.31 /><circle class=cd cx=336.0 cy=459.6 r=3.31 /><circle class=dh cx=628.2 cy=340.1 r=3.31 /><circle class=cd cx=446.6 cy=452.3 r=3.31 /><circle class=cd cx=209.5 cy=434.0 r=3.31 /><circle class=bb cx=526.1 cy=421.8 r=3.31 /><circle class=cp cx=600.3 cy=367.9 r=3.31 /><circle class=bc cx=518.4 cy=425.9 r=3.31 /><circle class=bb cx=533.8 cy=417.4 r=3.31 /><circle class=bc cx=510.8 cy=429.8 r=3.31 /><circle class=bz cx=541.5 cy=412.9 r=3.31 /><circle class=cd cx=379.7 cy=460.8 r=3.31 /><circle class=bc cx=503.1 cy=433.5 r=3.31 /><circle class=bz cx=549.2 cy=408.1 r=3.31 /><circle class=cd cx=353.8 cy=460.6 r=3.31 /><circle class=cd cx=405.4 cy=459.3 r=3.31 /><circle class=cd cx=273.8 cy=450.3 r=3.31 /><circle class=bc cx=495.4 cy=436.9 r=3.31 /><circle class=cd cx=438.8 cy=454.3 r=3.31 /><circle class=dd cx=656.6 cy=308.7 r=3.31 /><circle class=cd cx=291.9 cy=453.8 r=3.31 /><circle class=cz cx=557.0 cy=403.1 r=3.31 /><circle class=cd cx=255.6 cy=446.2 r=3.32 /><circle class=cb cx=191.0 cy=427.7 r=3.32 /><circle class=cn cx=608.2 cy=361.3 r=3.32 /><circle class=dg cx=636.2 cy=332.5 r=3.32 /><circle class=cd cx=309.9 cy=456.6 r=3.32 /><circle class=bc cx=487.7 cy=440.2 r=3.32 /><circle class=cx cx=564.7 cy=397.9 r=3.32 /><circle class=cd cx=237.4 cy=441.5 r=3.32 /><circle class=bc cx=480.0 cy=443.2 r=3.32 /><circle class=cd cx=327.8 cy=458.7 r=3.32 /><circle class=cv cx=572.5 cy=392.4 r=3.32 /><circle class=cd cx=431.1 cy=456.0 r=3.32 /><circle class=cd cx=371.7 cy=461.1 r=3.32 /><circle class=cd cx=397.5 cy=460.2 r=3.32 /><circle class=cl cx=616.1 cy=354.4 r=3.32 /><circle class=cd cx=219.0 cy=436.1 r=3.32 /><circle class=bc cx=472.3 cy=446.0 r=3.32 /><circle class=ct cx=580.3 cy=386.7 r=3.32 /><circle class=df cx=644.3 cy=324.6 r=3.32 /><circle class=cd cx=345.7 cy=460.2 r=3.32 /><circle class=bc cx=464.6 cy=448.6 r=3.32 /><circle class=cd cx=423.3 cy=457.6 r=3.32 /><circle class=cr cx=588.1 cy=380.8 r=3.32 /><circle class=cb cx=200.4 cy=430.0 r=3.32 /><circle class=di cx=624.0 cy=347.3 r=3.32 /><circle class=cd cx=283.4 cy=451.8 r=3.32 /><circle class=cd cx=265.2 cy=448.0 r=3.32 /><circle class=cd cx=301.5 cy=455.1 r=3.32 /><circle class=cd cx=389.6 cy=460.9 r=3.32 /><circle class=bc cx=456.8 cy=451.0 r=3.32 /><circle class=cd cx=363.7 cy=461.1 r=3.32 /><circle class=cp cx=596.0 cy=374.6 r=3.33 /><circle class=cd cx=246.9 cy=443.4 r=3.33 /><circle class=cd cx=319.6 cy=457.7 r=3.33 /><circle class=de cx=652.4 cy=316.5 r=3.33 /><circle class=cd cx=415.4 cy=458.9 r=3.33 /><circle class=bc cx=449.1 cy=453.2 r=3.33 /><circle class=dg cx=632.1 cy=339.9 r=3.33 /><circle class=bz cx=181.6 cy=423.2 r=3.33 /><circle class=cd cx=228.4 cy=438.2 r=3.33 /><circle class=cd cx=337.6 cy=459.6 r=3.33 /><circle class=ba cx=529.2 cy=422.7 r=3.33 /><circle class=bb cx=521.4 cy=426.8 r=3.33 /><circle class=bz cx=536.9 cy=418.3 r=3.33 /><circle class=cn cx=603.9 cy=368.2 r=3.33 /><circle class=bc cx=513.7 cy=430.7 r=3.33 /><circle class=bx cx=544.7 cy=413.7 r=3.33 /><circle class=bc cx=506.0 cy=434.4 r=3.33 /><circle class=cz cx=552.4 cy=408.9 r=3.33 /><circle class=cd cx=381.6 cy=461.3 r=3.33 /><circle class=bc cx=498.2 cy=437.9 r=3.33 /><circle class=cx cx=560.2 cy=403.9 r=3.33 /><circle class=bc cx=441.3 cy=455.2 r=3.33 /><circle class=cd cx=407.5 cy=460.0 r=3.33 /><circle class=cb cx=209.9 cy=432.3 r=3.33 /><circle class=cd cx=355.6 cy=460.9 r=3.33 /><circle class=dd cx=660.6 cy=308.1 r=3.33 /><circle class=cl cx=611.8 cy=361.5 r=3.33 /><circle class=bc cx=490.5 cy=441.2 r=3.33 /><circle class=df cx=640.1 cy=332.2 r=3.33 /><circle class=cv cx=568.0 cy=398.6 r=3.33 /><circle class=cd cx=293.1 cy=453.4 r=3.33 /><circle class=cd cx=274.8 cy=449.7 r=3.33 /><circle class=bc cx=482.7 cy=444.2 r=3.33 /><circle class=cd cx=311.2 cy=456.4 r=3.33 /><circle class=cd cx=256.5 cy=445.3 r=3.33 /><circle class=ct cx=575.9 cy=393.1 r=3.33 /><circle class=bc cx=433.4 cy=456.9 r=3.33 /><circle class=bz cx=191.1 cy=425.7 r=3.34 /><circle class=cd cx=329.3 cy=458.8 r=3.34 /><circle class=di cx=619.8 cy=354.6 r=3.34 /><circle class=bc cx=475.0 cy=447.1 r=3.34 /><circle class=cd cx=373.6 cy=461.6 r=3.34 /><circle class=cd cx=399.6 cy=460.9 r=3.34 /><circle class=cd cx=238.0 cy=440.3 r=3.34 /><circle class=cr cx=583.7 cy=387.4 r=3.34 /><circle class=de cx=648.3 cy=324.3 r=3.34 /><circle class=bc cx=467.2 cy=449.7 r=3.34 /><circle class=cd cx=347.4 cy=460.5 r=3.34 /><circle class=bc cx=425.6 cy=458.5 r=3.34 /><circle class=cp cx=591.6 cy=381.4 r=3.34 /><circle class=cb cx=219.4 cy=434.6 r=3.34 /><circle class=dh cx=627.8 cy=347.4 r=3.34 /><circle class=bc cx=459.4 cy=452.1 r=3.34 /><circle class=bx cx=172.1 cy=418.5 r=3.34 /><circle class=cd cx=391.6 cy=461.6 r=3.34 /><circle class=co cx=599.5 cy=375.2 r=3.34 /><circle class=cd cx=284.5 cy=451.4 r=3.34 /><circle class=cd cx=365.5 cy=461.6 r=3.34 /><circle class=cd cx=302.8 cy=454.9 r=3.34 /><circle class=dd cx=656.4 cy=316.1 r=3.34 /><circle class=cd cx=266.1 cy=447.3 r=3.34 /><circle class=bc cx=417.7 cy=459.8 r=3.34 /><circle class=bz cx=200.6 cy=428.3 r=3.34 /><circle class=cd cx=321.0 cy=457.7 r=3.34 /><circle class=bc cx=451.6 cy=454.3 r=3.34 /><circle class=bz cx=532.2 cy=423.8 r=3.34 /><circle class=ba cx=524.4 cy=428.0 r=3.34 /><circle class=dg cx=635.9 cy=340.0 r=3.34 /><circle class=bx cx=540.0 cy=419.4 r=3.34 /><circle class=cd cx=247.6 cy=442.5 r=3.34 /><circle class=bb cx=516.7 cy=431.9 r=3.34 /><circle class=cm cx=607.5 cy=368.7 r=3.34 /><circle class=cz cx=547.8 cy=414.8 r=3.34 /><circle class=bb cx=508.9 cy=435.6 r=3.35 /><circle class=cd cx=339.2 cy=459.9 r=3.35 /><circle class=cw cx=555.7 cy=409.9 r=3.35 /><circle class=bc cx=501.1 cy=439.2 r=3.35 /><circle class=cd cx=383.6 cy=462.1 r=3.35 /><circle class=cv cx=563.5 cy=404.9 r=3.35 /><circle class=bc cx=443.7 cy=456.3 r=3.35 /><circle class=cb cx=229.0 cy=437.0 r=3.35 /><circle class=bc cx=409.8 cy=461.0 r=3.35 /><circle class=bc cx=493.3 cy=442.4 r=3.35 /><circle class=di cx=615.5 cy=362.0 r=3.35 /><circle class=bx cx=181.7 cy=421.2 r=3.35 /><circle class=ct cx=571.4 cy=399.6 r=3.35 /><circle class=dd cx=664.7 cy=307.7 r=3.35 /><circle class=cd cx=357.4 cy=461.5 r=3.35 /><circle class=de cx=644.0 cy=332.3 r=3.35 /><circle class=bc cx=485.5 cy=445.5 r=3.35 /><circle class=cs cx=579.3 cy=394.0 r=3.35 /><circle class=bc cx=435.8 cy=458.1 r=3.35 /><circle class=bz cx=210.2 cy=430.8 r=3.35 /><circle class=cd cx=294.3 cy=453.2 r=3.35 /><circle class=cd cx=275.9 cy=449.2 r=3.35 /><circle class=cd cx=312.6 cy=456.5 r=3.35 /><circle class=bc cx=477.7 cy=448.4 r=3.35 /><circle class=dh cx=623.5 cy=355.0 r=3.35 /><circle class=cq cx=587.2 cy=388.2 r=3.35 /><circle class=bc cx=401.8 cy=461.9 r=3.35 /><circle class=cd cx=375.5 cy=462.3 r=3.35 /><circle class=cb cx=257.3 cy=444.6 r=3.35 /><circle class=cd cx=330.9 cy=459.1 r=3.35 /><circle class=dd cx=652.2 cy=324.3 r=3.35 /><circle class=bc cx=469.8 cy=451.0 r=3.35 /><circle class=cx cx=162.5 cy=413.5 r=3.35 /><circle class=co cx=595.1 cy=382.2 r=3.36 /><circle class=bc cx=427.9 cy=459.7 r=3.36 /><circle class=cb cx=238.7 cy=439.4 r=3.36 /><circle class=cd cx=349.2 cy=461.1 r=3.36 /><circle class=bx cx=191.3 cy=424.0 r=3.36 /><circle class=dg cx=631.6 cy=347.8 r=3.36 /><circle class=bc cx=462.0 cy=453.5 r=3.36 /><circle class=cm cx=603.1 cy=376.0 r=3.36 /><circle class=bc cx=393.7 cy=462.6 r=3.36 /><circle class=bz cx=219.9 cy=433.4 r=3.36 /><circle class=cd cx=367.4 cy=462.4 r=3.36 /><circle class=bc cx=420.0 cy=461.0 r=3.36 /><circle class=dd cx=660.5 cy=316.0 r=3.36 /><circle class=bx cx=535.4 cy=425.2 r=3.36 /><circle class=bc cx=454.1 cy=455.7 r=3.36 /><circle class=bz cx=527.5 cy=429.4 r=3.36 /><circle class=cx cx=543.2 cy=420.7 r=3.36 /><circle class=cd cx=304.1 cy=455.0 r=3.36 /><circle class=bz cx=519.7 cy=433.3 r=3.36 /><circle class=cd cx=285.7 cy=451.2 r=3.36 /><circle class=cw cx=551.1 cy=416.1 r=3.36 /><circle class=df cx=639.8 cy=340.3 r=3.36 /><circle class=dj cx=611.1 cy=369.4 r=3.36 /><circle class=cd cx=322.5 cy=458.0 r=3.36 /><circle class=bb cx=511.8 cy=437.1 r=3.36 /><circle class=cx cx=172.1 cy=416.4 r=3.36 /><circle class=cv cx=559.0 cy=411.2 r=3.36 /><circle class=cb cx=267.1 cy=446.8 r=3.36 /><circle class=bb cx=504.0 cy=440.6 r=3.36 /><circle class=ct cx=566.9 cy=406.1 r=3.36 /><circle class=cd cx=340.9 cy=460.5 r=3.36 /><circle class=bx cx=200.9 cy=426.8 r=3.36 /><circle class=bc cx=446.2 cy=457.7 r=3.36 /><circle class=bc cx=385.7 cy=463.1 r=3.36 /><circle class=cb cx=248.4 cy=441.8 r=3.36 /><circle class=bc cx=496.1 cy=443.9 r=3.36 /><circle class=bc cx=412.0 cy=462.2 r=3.36 /><circle class=cs cx=574.8 cy=400.8 r=3.36 /><circle class=di cx=619.2 cy=362.7 r=3.36 /><circle class=dc cx=668.8 cy=307.5 r=3.37 /><circle class=de cx=648.0 cy=332.5 r=3.37 /><circle class=bc cx=488.3 cy=447.0 r=3.37 /><circle class=cd cx=359.2 cy=462.2 r=3.37 /><circle class=cq cx=582.7 cy=395.2 r=3.37 /><circle class=bz cx=229.6 cy=436.0 r=3.37 /><circle class=bc cx=438.3 cy=459.5 r=3.37 /><circle class=bc cx=480.4 cy=449.9 r=3.37 /><circle class=dg cx=627.3 cy=355.7 r=3.37 /><circle class=cp cx=590.7 cy=389.4 r=3.37 /><circle class=cx cx=181.7 cy=419.4 r=3.37 /><circle class=bc cx=404.0 cy=463.1 r=3.37 /><circle class=cd cx=295.6 cy=453.2 r=3.37 /><circle class=cd cx=314.1 cy=456.7 r=3.37 /><circle class=bc cx=377.5 cy=463.3 r=3.37 /><circle class=bc cx=472.5 cy=452.6 r=3.37 /><circle class=cb cx=277.0 cy=449.0 r=3.37 /><circle class=dd cx=656.3 cy=324.5 r=3.37 /><circle class=cd cx=332.5 cy=459.6 r=3.37 /><circle class=cn cx=598.7 cy=383.3 r=3.37 /><circle class=bx cx=210.6 cy=429.6 r=3.37 /><circle class=bc cx=430.3 cy=461.1 r=3.37 /><circle class=cb cx=258.3 cy=444.2 r=3.37 /><circle class=df cx=635.5 cy=348.4 r=3.37 /><circle class=bc cx=464.6 cy=455.1 r=3.37 /><circle class=cd cx=350.9 cy=461.8 r=3.37 /><circle class=cl cx=606.7 cy=377.0 r=3.37 /><circle class=bc cx=395.9 cy=463.8 r=3.37 /><circle class=bz cx=239.4 cy=438.6 r=3.38 /><circle class=cu cx=162.3 cy=411.4 r=3.38 /><circle class=cw cx=538.5 cy=426.8 r=3.38 /><circle class=bx cx=530.6 cy=431.0 r=3.38 /><circle class=bc cx=422.3 cy=462.4 r=3.38 /><circle class=cw cx=546.4 cy=422.3 r=3.38 /><circle class=bc cx=456.7 cy=457.3 r=3.38 /><circle class=cx cx=191.5 cy=422.4 r=3.38 /><circle class=bx cx=522.7 cy=435.0 r=3.38 /><circle class=bc cx=369.3 cy=463.4 r=3.38 /><circle class=dc cx=664.6 cy=316.2 r=3.38 /><circle class=cv cx=554.3 cy=417.6 r=3.38 /><circle class=bz cx=514.8 cy=438.8 r=3.38 /><circle class=di cx=614.8 cy=370.4 r=3.38 /><circle class=de cx=643.7 cy=340.8 r=3.38 /><circle class=ct cx=562.3 cy=412.7 r=3.38 /><circle class=bb cx=506.9 cy=442.3 r=3.38 /><circle class=cb cx=305.5 cy=455.2 r=3.38 /><circle class=cs cx=570.2 cy=407.6 r=3.38 /><circle class=bx cx=220.4 cy=432.4 r=3.38 /><circle class=cb cx=286.9 cy=451.2 r=3.38 /><circle class=cd cx=324.1 cy=458.5 r=3.38 /><circle class=bc cx=448.8 cy=459.3 r=3.38 /><circle class=bb cx=499.0 cy=445.7 r=3.38 /><circle class=cr cx=578.2 cy=402.2 r=3.38 /><circle class=cb cx=268.2 cy=446.6 r=3.38 /><circle class=bc cx=387.8 cy=464.3 r=3.38 /><circle class=cd cx=342.6 cy=461.2 r=3.38 /><circle class=bc cx=414.3 cy=463.6 r=3.38 /><circle class=dh cx=623.0 cy=363.6 r=3.38 /><circle class=bc cx=491.1 cy=448.8 r=3.38 /><circle class=cp cx=586.2 cy=396.6 r=3.38 /><circle class=dd cx=652.0 cy=333.0 r=3.38 /><circle class=dc cx=673.0 cy=307.6 r=3.38 /><circle class=cu cx=172.1 cy=414.6 r=3.38 /><circle class=bz cx=249.3 cy=441.2 r=3.38 /><circle class=bc cx=361.1 cy=463.2 r=3.38 /><circle class=bc cx=440.8 cy=461.1 r=3.38 /><circle class=cx cx=201.3 cy=425.5 r=3.38 /><circle class=bc cx=483.2 cy=451.7 r=3.38 /><circle class=cn cx=594.2 cy=390.7 r=3.38 /><circle class=dg cx=631.1 cy=356.6 r=3.38 /><circle class=bc cx=406.2 cy=464.5 r=3.39 /><circle class=bc cx=475.3 cy=454.4 r=3.39 /><circle class=bx cx=230.3 cy=435.2 r=3.39 /><circle class=bc cx=379.6 cy=464.5 r=3.39 /><circle class=cm cx=602.3 cy=384.6 r=3.39 /><circle class=dd cx=660.3 cy=324.9 r=3.39 /><circle class=bc cx=432.8 cy=462.7 r=3.39 /><circle class=cb cx=315.6 cy=457.2 r=3.39 /><circle class=cb cx=296.9 cy=453.5 r=3.39 /><circle class=cd cx=334.2 cy=460.4 r=3.39 /><circle class=df cx=639.4 cy=349.2 r=3.39 /><circle class=bz cx=278.1 cy=449.0 r=3.39 /><circle class=bc cx=467.3 cy=456.9 r=3.39 /><circle class=cu cx=181.9 cy=417.8 r=3.39 /><circle class=di cx=610.4 cy=378.3 r=3.39 /><circle class=bc cx=352.8 cy=462.8 r=3.39 /><circle class=cx cx=211.1 cy=428.5 r=3.39 /><circle class=bz cx=259.2 cy=443.9 r=3.39 /><circle class=cw cx=541.7 cy=428.6 r=3.39 /><circle class=bc cx=398.1 cy=465.2 r=3.39 /><circle class=cw cx=533.7 cy=432.9 r=3.39 /><circle class=cv cx=549.6 cy=424.1 r=3.39 /><circle class=bw cx=525.8 cy=436.9 r=3.39 /><circle class=bc cx=459.3 cy=459.1 r=3.39 /><circle class=cu cx=557.6 cy=419.4 r=3.39 /><circle class=bc cx=424.7 cy=464.1 r=3.39 /><circle class=bx cx=517.8 cy=440.7 r=3.39 /><circle class=cs cx=565.6 cy=414.5 r=3.39 /><circle class=dc cx=668.7 cy=316.6 r=3.39 /><circle class=dh cx=618.6 cy=371.7 r=3.39 /><circle class=bc cx=371.3 cy=464.6 r=3.39 /><circle class=de cx=647.6 cy=341.6 r=3.39 /><circle class=bz cx=509.9 cy=444.3 r=3.39 /><circle class=cr cx=573.6 cy=409.3 r=3.39 /><circle class=bx cx=240.2 cy=438.1 r=3.39 /><circle class=cb cx=501.9 cy=447.7 r=3.40 /><circle class=bc cx=451.3 cy=461.2 r=3.40 /><circle class=cp cx=581.7 cy=403.9 r=3.40 /><circle class=cr cx=162.2 cy=409.5 r=3.40 /><circle class=cb cx=307.0 cy=455.7 r=3.40 /><circle class=cu cx=191.7 cy=421.1 r=3.40 /><circle class=dg cx=626.7 cy=364.8 r=3.40 /><circle class=cb cx=325.7 cy=459.3 r=3.40 /><circle class=bc cx=416.6 cy=465.3 r=3.40 /><circle class=bb cx=494.0 cy=450.8 r=3.40 /><circle class=bc cx=389.9 cy=465.7 r=3.40 /><circle class=bz cx=288.2 cy=451.5 r=3.40 /><circle class=co cx=589.7 cy=398.3 r=3.40 /><circle class=bc cx=344.4 cy=462.2 r=3.40 /><circle class=dd cx=656.0 cy=333.8 r=3.40 /><circle class=cx cx=221.0 cy=431.6 r=3.40 /><circle class=dc cx=677.2 cy=307.9 r=3.40 /><circle class=bz cx=269.3 cy=446.6 r=3.40 /><circle class=bc cx=486.0 cy=453.8 r=3.40 /><circle class=bc cx=443.3 cy=463.0 r=3.40 /><circle class=cm cx=597.8 cy=392.4 r=3.40 /><circle class=bc cx=363.0 cy=464.4 r=3.40 /><circle class=df cx=635.0 cy=357.7 r=3.40 /><circle class=bc cx=478.0 cy=456.5 r=3.40 /><circle class=bx cx=250.2 cy=441.0 r=3.40 /><circle class=bc cx=408.5 cy=466.2 r=3.40 /><circle class=cl cx=605.9 cy=386.2 r=3.40 /><circle class=cr cx=172.1 cy=412.9 r=3.40 /><circle class=bc cx=381.7 cy=466.0 r=3.40 /><circle class=bc cx=435.2 cy=464.6 r=3.40 /><circle class=cu cx=201.6 cy=424.4 r=3.40 /><circle class=dc cx=664.4 cy=325.6 r=3.40 /><circle class=bc cx=470.0 cy=459.0 r=3.41 /><circle class=de cx=643.3 cy=350.3 r=3.41 /><circle class=cb cx=317.1 cy=458.0 r=3.41 /><circle class=di cx=614.1 cy=379.8 r=3.41 /><circle class=ba cx=298.3 cy=454.0 r=3.41 /><circle class=bb cx=335.9 cy=461.3 r=3.41 /><circle class=cx cx=231.0 cy=434.7 r=3.41 /><circle class=cv cx=544.9 cy=430.7 r=3.41 /><circle class=cw cx=536.9 cy=435.0 r=3.41 /><circle class=cu cx=552.9 cy=426.2 r=3.41 /><circle class=cw cx=528.9 cy=439.1 r=3.41 /><circle class=bz cx=279.3 cy=449.2 r=3.41 /><circle class=bc cx=354.6 cy=464.0 r=3.41 /><circle class=cs cx=560.9 cy=421.5 r=3.41 /><circle class=bc cx=400.3 cy=466.9 r=3.41 /><circle class=bc cx=462.0 cy=461.2 r=3.41 /><circle class=bw cx=520.9 cy=442.9 r=3.41 /><circle class=bc cx=427.1 cy=466.0 r=3.41 /><circle class=cr cx=569.0 cy=416.5 r=3.41 /><circle class=dh cx=622.3 cy=373.2 r=3.41 /><circle class=bw cx=512.9 cy=446.5 r=3.41 /><circle class=dc cx=672.8 cy=317.2 r=3.41 /><circle class=dd cx=651.6 cy=342.7 r=3.41 /><circle class=cq cx=577.1 cy=411.3 r=3.41 /><circle class=bx cx=260.3 cy=443.8 r=3.41 /><circle class=cr cx=182.0 cy=416.4 r=3.41 /><circle class=bc cx=373.4 cy=466.1 r=3.41 /><circle class=by cx=504.9 cy=449.9 r=3.41 /><circle class=cu cx=211.6 cy=427.7 r=3.41 /><circle class=co cx=585.1 cy=405.9 r=3.41 /><circle class=bc cx=454.0 cy=463.3 r=3.41 /><circle class=dg cx=630.6 cy=366.3 r=3.41 /><circle class=cb cx=496.9 cy=453.1 r=3.41 /><circle class=bc cx=419.0 cy=467.2 r=3.41 /><circle class=cn cx=593.3 cy=400.2 r=3.41 /><circle class=cx cx=241.0 cy=437.8 r=3.41 /><circle class=bc cx=392.1 cy=467.4 r=3.41 /><circle class=bb cx=327.4 cy=460.3 r=3.41 /><circle class=bz cx=308.5 cy=456.4 r=3.41 /><circle class=dd cx=660.0 cy=334.8 r=3.42 /><circle class=cb cx=488.9 cy=456.0 r=3.42 /><circle class=bb cx=346.2 cy=463.4 r=3.42 /><circle class=bc cx=445.9 cy=465.1 r=3.42 /><circle class=cl cx=601.4 cy=394.2 r=3.42 /><circle class=db cx=681.4 cy=308.5 r=3.42 /><circle class=bz cx=289.5 cy=451.9 r=3.42 /><circle class=df cx=638.9 cy=359.1 r=3.42 /><circle class=cr cx=192.0 cy=419.9 r=3.42 /><circle class=bb cx=365.0 cy=465.9 r=3.42 /><circle class=bc cx=480.8 cy=458.8 r=3.42 /><circle class=co cx=162.2 cy=407.7 r=3.42 /><circle class=bx cx=270.4 cy=446.8 r=3.42 /><circle class=cu cx=221.7 cy=431.0 r=3.42 /><circle class=di cx=609.6 cy=388.1 r=3.42 /><circle class=bc cx=410.8 cy=468.1 r=3.42 /><circle class=bc cx=437.8 cy=466.7 r=3.42 /><circle class=dc cx=668.5 cy=326.6 r=3.42 /><circle class=bc cx=383.8 cy=467.7 r=3.42 /><circle class=bc cx=472.8 cy=461.3 r=3.42 /><circle class=de cx=647.2 cy=351.7 r=3.42 /><circle class=cx cx=251.2 cy=440.9 r=3.42 /><circle class=dh cx=617.8 cy=381.6 r=3.42 /><circle class=ct cx=548.2 cy=433.1 r=3.42 /><circle class=cu cx=540.1 cy=437.4 r=3.42 /><circle class=cs cx=556.2 cy=428.6 r=3.42 /><circle class=cv cx=532.0 cy=441.5 r=3.42 /><circle class=cr cx=564.3 cy=423.8 r=3.42 /><circle class=bz cx=318.7 cy=459.0 r=3.42 /><circle class=ba cx=337.7 cy=462.6 r=3.42 /><circle class=cw cx=524.0 cy=445.4 r=3.42 /><circle class=bc cx=464.7 cy=463.6 r=3.42 /><circle class=cq cx=572.4 cy=418.8 r=3.42 /><circle class=cs cx=202.1 cy=423.5 r=3.42 /><circle class=bz cx=299.7 cy=454.7 r=3.42 /><circle class=cp cx=172.2 cy=411.5 r=3.42 /><circle class=bc cx=402.6 cy=468.9 r=3.42 /><circle class=bc cx=429.6 cy=468.2 r=3.42 /><circle class=dg cx=626.1 cy=374.9 r=3.43 /><circle class=bb cx=356.6 cy=465.5 r=3.43 /><circle class=bw cx=516.0 cy=449.0 r=3.43 /><circle class=cp cx=580.5 cy=413.5 r=3.43 /><circle class=cu cx=231.8 cy=434.3 r=3.43 /><circle class=dd cx=655.6 cy=344.0 r=3.43 /><circle class=bx cx=280.6 cy=449.7 r=3.43 /><circle class=dc cx=677.0 cy=318.1 r=3.43 /><circle class=bw cx=507.9 cy=452.4 r=3.43 /><circle class=cn cx=588.7 cy=408.1 r=3.43 /><circle class=bb cx=375.4 cy=467.8 r=3.43 /><circle class=bc cx=456.6 cy=465.7 r=3.43 /><circle class=by cx=499.8 cy=455.6 r=3.43 /><circle class=df cx=634.4 cy=368.0 r=3.43 /><circle class=cm cx=596.8 cy=402.3 r=3.43 /><circle class=cx cx=261.3 cy=444.0 r=3.43 /><circle class=bc cx=421.4 cy=469.3 r=3.43 /><circle class=bc cx=394.3 cy=469.4 r=3.43 /><circle class=ca cx=491.8 cy=458.6 r=3.43 /><circle class=cp cx=182.3 cy=415.2 r=3.43 /><circle class=dc cx=664.1 cy=336.0 r=3.43 /><circle class=cs cx=212.2 cy=427.0 r=3.43 /><circle class=di cx=605.0 cy=396.4 r=3.43 /><circle class=bc cx=448.5 cy=467.5 r=3.43 /><circle class=bz cx=329.1 cy=461.5 r=3.43 /><circle class=db cx=685.6 cy=309.3 r=3.43 /><circle class=de cx=642.8 cy=360.8 r=3.43 /><circle class=bz cx=310.0 cy=457.4 r=3.43 /><circle class=ba cx=348.1 cy=464.9 r=3.43 /><circle class=cu cx=241.9 cy=437.7 r=3.43 /><circle class=ca cx=483.7 cy=461.3 r=3.43 /><circle class=dh cx=613.3 cy=390.2 r=3.43 /><circle class=bx cx=290.8 cy=452.6 r=3.43 /><circle class=bb cx=367.0 cy=467.6 r=3.43 /><circle class=bc cx=413.2 cy=470.3 r=3.44 /><circle class=bc cx=440.3 cy=469.1 r=3.44 /><circle class=cc cx=475.6 cy=463.9 r=3.44 /><circle class=dc cx=672.6 cy=327.8 r=3.44 /><circle class=cx cx=271.6 cy=447.2 r=3.44 /><circle class=dg cx=621.6 cy=383.7 r=3.44 /><circle class=bb cx=385.9 cy=469.7 r=3.44 /><circle class=dd cx=651.2 cy=353.3 r=3.44 /><circle class=cs cx=551.4 cy=435.7 r=3.44 /><circle class=cp cx=192.4 cy=419.0 r=3.44 /><circle class=ct cx=543.3 cy=440.1 r=3.44 /><circle class=cr cx=559.6 cy=431.2 r=3.44 /><circle class=cu cx=535.2 cy=444.2 r=3.44 /><circle class=cs cx=222.3 cy=430.6 r=3.44 /><circle class=cq cx=567.7 cy=426.4 r=3.44 /><circle class=cm cx=162.2 cy=406.2 r=3.44 /><circle class=cv cx=527.1 cy=448.1 r=3.44 /><circle class=cp cx=575.8 cy=421.3 r=3.44 /><circle class=cc cx=467.5 cy=466.2 r=3.44 /><circle class=cw cx=519.0 cy=451.8 r=3.44 /><circle class=dg cx=629.9 cy=377.0 r=3.44 /><circle class=cu cx=252.2 cy=441.0 r=3.44 /><circle class=bc cx=432.1 cy=470.6 r=3.44 /><circle class=cn cx=584.0 cy=416.1 r=3.44 /><circle class=bc cx=404.9 cy=471.0 r=3.44 /><circle class=bz cx=339.5 cy=464.0 r=3.44 /><circle class=bx cx=320.4 cy=460.2 r=3.44 /><circle class=cy cx=510.9 cy=455.2 r=3.44 /><circle class=bz cx=358.5 cy=467.2 r=3.44 /><circle class=dd cx=659.7 cy=345.6 r=3.44 /><circle class=cm cx=592.2 cy=410.5 r=3.44 /><circle class=cz cx=301.2 cy=455.6 r=3.44 /><circle class=db cx=681.2 cy=319.3 r=3.44 /><circle class=cc cx=459.3 cy=468.3 r=3.44 /><circle class=bw cx=502.8 cy=458.4 r=3.44 /><circle class=bb cx=377.5 cy=469.7 r=3.44 /><circle class=df cx=638.3 cy=370.0 r=3.44 /><circle class=cl cx=600.4 cy=404.8 r=3.44 /><circle class=cp cx=202.6 cy=422.8 r=3.44 /><circle class=cx cx=281.9 cy=450.4 r=3.44 /><circle class=cm cx=172.3 cy=410.2 r=3.45 /><circle class=cs cx=232.6 cy=434.2 r=3.45 /><circle class=bc cx=423.9 cy=471.8 r=3.45 /><circle class=by cx=494.7 cy=461.4 r=3.45 /><circle class=di cx=608.7 cy=398.8 r=3.45 /><circle class=bb cx=396.6 cy=471.6 r=3.45 /><circle class=cc cx=451.1 cy=470.1 r=3.45 /><circle class=dc cx=668.2 cy=337.6 r=3.45 /><circle class=cv cx=262.5 cy=444.4 r=3.45 /><circle class=de cx=646.7 cy=362.7 r=3.45 /><circle class=ca cx=486.6 cy=464.2 r=3.45 /><circle class=db cx=689.9 cy=310.4 r=3.45 /><circle class=dh cx=617.0 cy=392.5 r=3.45 /><circle class=bx cx=330.8 cy=462.9 r=3.45 /><circle class=bz cx=350.0 cy=466.6 r=3.45 /><circle class=cz cx=311.6 cy=458.6 r=3.45 /><circle class=bc cx=415.6 cy=472.7 r=3.45 /><circle class=cq cx=212.8 cy=426.6 r=3.45 /><circle class=bz cx=369.1 cy=469.6 r=3.45 /><circle class=ca cx=478.4 cy=466.7 r=3.45 /><circle class=cc cx=442.9 cy=471.8 r=3.45 /><circle class=cn cx=182.5 cy=414.2 r=3.45 /><circle class=cs cx=242.9 cy=437.8 r=3.45 /><circle class=dg cx=625.3 cy=386.0 r=3.45 /><circle class=cx cx=292.3 cy=453.6 r=3.45 /><circle class=cr cx=554.8 cy=438.6 r=3.45 /><circle class=cs cx=546.6 cy=443.0 r=3.45 /><circle class=dc cx=676.8 cy=329.3 r=3.45 /><circle class=cq cx=562.9 cy=434.0 r=3.45 /><circle class=dd cx=655.2 cy=355.2 r=3.45 /><circle class=ct cx=538.4 cy=447.2 r=3.45 /><circle class=cp cx=571.1 cy=429.2 r=3.45 /><circle class=cb cx=388.2 cy=471.9 r=3.45 /><circle class=cu cx=530.3 cy=451.1 r=3.45 /><circle class=co cx=579.3 cy=424.1 r=3.45 /><circle class=cc cx=470.2 cy=469.0 r=3.46 /><circle class=cv cx=522.1 cy=454.8 r=3.46 /><circle class=cv cx=272.8 cy=447.9 r=3.46 /><circle class=cm cx=587.5 cy=418.8 r=3.46 /><circle class=df cx=633.7 cy=379.3 r=3.46 /><circle class=cc cx=434.7 cy=473.2 r=3.46 /><circle class=cw cx=514.0 cy=458.2 r=3.46 /><circle class=cb cx=407.3 cy=473.5 r=3.46 /><circle class=cl cx=595.8 cy=413.3 r=3.46 /><circle class=dd cx=663.7 cy=347.4 r=3.46 /><circle class=cq cx=223.1 cy=430.4 r=3.46 /><circle class=cn cx=192.8 cy=418.3 r=3.46 /><circle class=bx cx=341.3 cy=465.7 r=3.46 /><circle class=cc cx=462.0 cy=471.2 r=3.46 /><circle class=db cx=685.5 cy=320.7 r=3.46 /><circle class=cz cx=322.1 cy=461.6 r=3.46 /><circle class=cy cx=505.8 cy=461.4 r=3.46 /><circle class=bx cx=360.5 cy=469.2 r=3.46 /><circle class=di cx=604.1 cy=407.5 r=3.46 /><circle class=ct cx=253.2 cy=441.4 r=3.46 /><circle class=de cx=642.2 cy=372.2 r=3.46 /><circle class=di cx=162.2 cy=404.9 r=3.46 /><circle class=cx cx=302.7 cy=456.8 r=3.46 /><circle class=bz cx=379.7 cy=471.9 r=3.46 /><circle class=bw cx=497.7 cy=464.5 r=3.46 /><circle class=cc cx=426.4 cy=474.4 r=3.46 /><circle class=dh cx=612.4 cy=401.5 r=3.46 /><circle class=cc cx=453.8 cy=473.0 r=3.46 /><circle class=cv cx=283.2 cy=451.3 r=3.46 /><circle class=dc cx=672.3 cy=339.4 r=3.46 /><circle class=cb cx=398.9 cy=474.0 r=3.46 /><circle class=by cx=489.5 cy=467.3 r=3.46 /><circle class=dd cx=650.7 cy=364.9 r=3.46 /><circle class=cn cx=203.1 cy=422.3 r=3.46 /><circle class=dg cx=620.8 cy=395.2 r=3.46 /><circle class=cq cx=233.4 cy=434.3 r=3.47 /><circle class=dk cx=694.2 cy=311.8 r=3.47 /><circle class=di cx=172.5 cy=409.2 r=3.47 /><circle class=ca cx=481.3 cy=469.8 r=3.47 /><circle class=ct cx=263.6 cy=445.1 r=3.47 /><circle class=bx cx=351.9 cy=468.6 r=3.47 /><circle class=cx cx=332.6 cy=464.7 r=3.47 /><circle class=ca cx=418.0 cy=475.4 r=3.47 /><circle class=cc cx=445.6 cy=474.7 r=3.47 /><circle class=cq cx=558.1 cy=441.8 r=3.47 /><circle class=cr cx=549.9 cy=446.2 r=3.47 /><circle class=df cx=629.2 cy=388.6 r=3.47 /><circle class=cp cx=566.3 cy=437.2 r=3.47 /><circle class=bx cx=371.2 cy=471.8 r=3.47 /><circle class=cs cx=541.7 cy=450.4 r=3.47 /><circle class=cw cx=313.2 cy=460.1 r=3.47 /><circle class=co cx=574.6 cy=432.3 r=3.47 /><circle class=dd cx=659.2 cy=357.4 r=3.47 /><circle class=dc cx=681.0 cy=331.0 r=3.47 /><circle class=ct cx=533.5 cy=454.3 r=3.47 /><circle class=cm cx=582.8 cy=427.2 r=3.47 /><circle class=by cx=390.4 cy=474.3 r=3.47 /><circle class=ca cx=473.1 cy=472.2 r=3.47 /><circle class=cu cx=525.3 cy=458.0 r=3.47 /><circle class=cv cx=293.7 cy=454.8 r=3.47 /><circle class=cl cx=591.1 cy=421.9 r=3.47 /><circle class=co cx=213.5 cy=426.4 r=3.47 /><circle class=df cx=637.6 cy=381.8 r=3.47 /><circle class=cq cx=243.8 cy=438.2 r=3.47 /><circle class=cv cx=517.1 cy=461.5 r=3.47 /><circle class=cc cx=437.3 cy=476.2 r=3.47 /><circle class=ck cx=599.4 cy=416.3 r=3.47 /><circle class=cl cx=182.8 cy=413.5 r=3.47 /><circle class=ca cx=409.7 cy=476.2 r=3.47 /><circle class=dc cx=667.8 cy=349.5 r=3.47 /><circle class=cw cx=508.9 cy=464.8 r=3.47 /><circle class=ca cx=464.8 cy=474.3 r=3.47 /><circle class=ct cx=274.1 cy=448.8 r=3.47 /><circle class=dh cx=607.7 cy=410.5 r=3.47 /><circle class=db cx=689.7 cy=322.4 r=3.48 /><circle class=de cx=646.1 cy=374.7 r=3.48 /><circle class=cw cx=343.2 cy=467.7 r=3.48 /><circle class=bw cx=362.6 cy=471.4 r=3.48 /><circle class=cy cx=500.7 cy=467.8 r=3.48 /><circle class=cw cx=323.8 cy=463.3 r=3.48 /><circle class=dg cx=616.1 cy=404.4 r=3.48 /><circle class=bw cx=381.9 cy=474.4 r=3.48 /><circle class=ca cx=428.9 cy=477.4 r=3.48 /><circle class=co cx=223.9 cy=430.5 r=3.48 /><circle class=cc cx=456.5 cy=476.2 r=3.48 /><circle class=cv cx=304.3 cy=458.3 r=3.48 /><circle class=cl cx=193.2 cy=417.8 r=3.48 /><circle class=cr cx=254.3 cy=442.1 r=3.48 /><circle class=cy cx=492.4 cy=470.6 r=3.48 /><circle class=dc cx=676.5 cy=341.4 r=3.48 /><circle class=dd cx=654.6 cy=367.4 r=3.48 /><circle class=by cx=401.2 cy=476.7 r=3.48 /><circle class=dg cx=624.5 cy=398.1 r=3.48 /><circle class=dh cx=162.3 cy=403.8 r=3.48 /><circle class=dk cx=698.5 cy=313.4 r=3.48 /><circle class=ct cx=284.6 cy=452.5 r=3.48 /><circle class=by cx=484.2 cy=473.2 r=3.48 /><circle class=cp cx=561.5 cy=445.3 r=3.48 /><circle class=cq cx=553.2 cy=449.7 r=3.48 /><circle class=co cx=569.7 cy=440.6 r=3.48 /><circle class=ca cx=448.2 cy=477.9 r=3.48 /><circle class=df cx=633.0 cy=391.5 r=3.48 /><circle class=cr cx=545.0 cy=453.9 r=3.48 /><circle class=ca cx=420.5 cy=478.4 r=3.48 /><circle class=cn cx=578.0 cy=435.7 r=3.48 /><circle class=cs cx=536.7 cy=457.8 r=3.48 /><circle class=cw cx=353.9 cy=470.8 r=3.48 /><circle class=dd cx=663.2 cy=359.8 r=3.48 /><circle class=cm cx=586.3 cy=430.6 r=3.48 /><circle class=co cx=234.3 cy=434.6 r=3.48 /><circle class=cw cx=334.4 cy=466.6 r=3.48 /><circle class=bw cx=373.3 cy=474.3 r=3.48 /><circle class=db cx=685.2 cy=333.0 r=3.48 /><circle class=cm cx=203.7 cy=422.1 r=3.49 /><circle class=ct cx=528.5 cy=461.6 r=3.49 /><circle class=by cx=475.9 cy=475.6 r=3.49 /><circle class=ck cx=594.7 cy=425.2 r=3.49 /><circle class=cr cx=264.8 cy=446.0 r=3.49 /><circle class=cv cx=314.9 cy=461.8 r=3.49 /><circle class=bw cx=392.7 cy=477.1 r=3.49 /><circle class=de cx=641.5 cy=384.6 r=3.49 /><circle class=cu cx=520.2 cy=465.1 r=3.49 /><circle class=cj cx=603.0 cy=419.6 r=3.49 /><circle class=dh cx=172.8 cy=408.4 r=3.49 /><circle class=ca cx=439.9 cy=479.4 r=3.49 /><circle class=cv cx=512.0 cy=468.4 r=3.49 /><circle class=ct cx=295.2 cy=456.2 r=3.49 /><circle class=by cx=412.1 cy=479.2 r=3.49 /><circle class=dc cx=671.9 cy=351.9 r=3.49 /><circle class=ca cx=467.6 cy=477.7 r=3.49 /><circle class=dh cx=611.4 cy=413.7 r=3.49 /><circle class=de cx=650.0 cy=377.5 r=3.49 /><circle class=db cx=694.0 cy=324.3 r=3.49 /><circle class=cp cx=244.9 cy=438.8 r=3.49 /><circle class=cw cx=503.7 cy=471.4 r=3.49 /><circle class=cm cx=214.2 cy=426.5 r=3.49 /><circle class=dg cx=619.9 cy=407.6 r=3.49 /><circle class=cw cx=364.7 cy=473.9 r=3.49 /><circle class=cw cx=345.2 cy=469.9 r=3.49 /><circle class=cr cx=275.4 cy=449.9 r=3.49 /><circle class=ca cx=431.5 cy=480.6 r=3.49 /><circle class=di cx=183.2 cy=412.9 r=3.49 /><circle class=bw cx=384.2 cy=477.2 r=3.49 /><circle class=ca cx=459.3 cy=479.6 r=3.49 /><circle class=cy cx=495.4 cy=474.2 r=3.49 /><circle class=cv cx=325.6 cy=465.3 r=3.49 /><circle class=dc cx=680.6 cy=343.8 r=3.49 /><circle class=df cx=628.3 cy=401.3 r=3.49 /><circle class=dd cx=658.6 cy=370.2 r=3.49 /><circle class=bw cx=403.6 cy=479.7 r=3.50 /><circle class=ct cx=305.9 cy=460.0 r=3.50 /><circle class=cy cx=487.1 cy=476.9 r=3.50 /><circle class=co cx=564.9 cy=449.0 r=3.50 /><circle class=cp cx=556.6 cy=453.4 r=3.50 /><circle class=cn cx=573.2 cy=444.3 r=3.50 /><circle class=dk cx=702.9 cy=315.3 r=3.50 /><circle class=cm cx=224.7 cy=430.8 r=3.50 /><circle class=cq cx=548.3 cy=457.6 r=3.50 /><circle class=cp cx=255.5 cy=443.0 r=3.50 /><circle class=cm cx=581.5 cy=439.4 r=3.50 /><circle class=df cx=636.8 cy=394.6 r=3.50 /><circle class=ca cx=450.9 cy=481.3 r=3.50 /><circle class=cr cx=540.0 cy=461.6 r=3.50 /><circle class=by cx=423.1 cy=481.6 r=3.50 /><circle class=cl cx=589.9 cy=434.2 r=3.50 /><circle class=di cx=193.7 cy=417.5 r=3.50 /><circle class=dd cx=667.3 cy=362.5 r=3.50 /><circle class=cs cx=531.7 cy=465.4 r=3.50 /><circle class=cs cx=286.1 cy=453.9 r=3.50 /><circle class=ck cx=598.3 cy=428.8 r=3.50 /><circle class=da cx=478.8 cy=479.2 r=3.50 /><circle class=db cx=689.4 cy=335.3 r=3.50 /><circle class=cw cx=356.0 cy=473.3 r=3.50 /><circle class=cw cx=375.5 cy=477.0 r=3.50 /><circle class=ct cx=523.4 cy=468.9 r=3.50 /><circle class=de cx=645.4 cy=387.8 r=3.50 /><circle class=cv cx=336.3 cy=468.9 r=3.50 /><circle class=dh cx=606.7 cy=423.2 r=3.50 /><circle class=cy cx=395.1 cy=480.1 r=3.50 /><circle class=dg cx=162.5 cy=403.0 r=3.50 /><circle class=by cx=442.6 cy=482.8 r=3.50 /><circle class=cu cx=515.1 cy=472.2 r=3.50 /><circle class=ct cx=316.6 cy=463.7 r=3.50 /><circle class=cn cx=235.3 cy=435.2 r=3.50 /><circle class=dg cx=615.1 cy=417.3 r=3.50 /><circle class=by cx=470.5 cy=481.4 r=3.50 /><circle class=cp cx=266.1 cy=447.1 r=3.50 /><circle class=dc cx=676.0 cy=354.6 r=3.50 /><circle class=bw cx=414.6 cy=482.4 r=3.51 /><circle class=di cx=204.3 cy=422.1 r=3.51 /><circle class=dd cx=654.0 cy=380.6 r=3.51 /><circle class=cv cx=506.8 cy=475.3 r=3.51 /><circle class=dg cx=623.6 cy=411.1 r=3.51 /><circle class=dk cx=698.3 cy=326.6 r=3.51 /><circle class=cs cx=296.8 cy=457.9 r=3.51 /><circle class=dg cx=173.0 cy=407.8 r=3.51 /><circle class=by cx=434.1 cy=484.1 r=3.51 /><circle class=cw cx=498.4 cy=478.2 r=3.51 /><circle class=by cx=462.1 cy=483.4 r=3.51 /><circle class=cv cx=366.8 cy=476.6 r=3.51 /><circle class=df cx=632.1 cy=404.7 r=3.51 /><circle class=cv cx=347.2 cy=472.4 r=3.51 /><circle class=cw cx=386.5 cy=480.2 r=3.51 /><circle class=dd cx=662.7 cy=373.2 r=3.51 /><circle class=dc cx=684.8 cy=346.4 r=3.51 /><circle class=cn cx=246.0 cy=439.6 r=3.51 /><circle class=ck cx=214.9 cy=426.7 r=3.51 /><circle class=cq cx=276.8 cy=451.4 r=3.51 /><circle class=cu cx=327.4 cy=467.5 r=3.51 /><circle class=cn cx=568.3 cy=453.0 r=3.51 /><circle class=cy cx=406.0 cy=483.0 r=3.51 /><circle class=co cx=559.9 cy=457.4 r=3.51 /><circle class=cm cx=576.7 cy=448.2 r=3.51 /><circle class=cy cx=490.1 cy=480.8 r=3.51 /><circle class=cp cx=551.6 cy=461.7 r=3.51 /><circle class=cl cx=585.1 cy=443.3 r=3.51 /><circle class=de cx=640.7 cy=398.1 r=3.51 /><circle class=cq cx=543.3 cy=465.7 r=3.51 /><circle class=ck cx=593.5 cy=438.1 r=3.51 /><circle class=by cx=453.7 cy=485.1 r=3.51 /><circle class=dk cx=707.3 cy=317.5 r=3.51 /><circle class=dh cx=183.6 cy=412.6 r=3.51 /><circle class=cs cx=307.6 cy=461.9 r=3.51 /><circle class=cr cx=534.9 cy=469.5 r=3.51 /><circle class=cy cx=425.6 cy=485.1 r=3.51 /><circle class=cj cx=601.9 cy=432.7 r=3.51 /><circle class=dc cx=671.4 cy=365.5 r=3.51 /><circle class=cy cx=481.7 cy=483.2 r=3.52 /><circle class=cs cx=526.6 cy=473.0 r=3.52 /><circle class=db cx=693.7 cy=337.9 r=3.52 /><circle class=de cx=649.3 cy=391.2 r=3.52 /><circle class=dg cx=610.4 cy=427.0 r=3.52 /><circle class=co cx=256.7 cy=444.1 r=3.52 /><circle class=cl cx=225.6 cy=431.4 r=3.52 /><circle class=cv cx=377.8 cy=480.0 r=3.52 /><circle class=cu cx=358.1 cy=476.0 r=3.52 /><circle class=ct cx=518.2 cy=476.4 r=3.52 /><circle class=cq cx=287.6 cy=455.6 r=3.52 /><circle class=da cx=445.3 cy=486.6 r=3.52 /><circle class=cw cx=397.4 cy=483.3 r=3.52 /><circle class=dg cx=618.9 cy=421.1 r=3.52 /><circle class=cu cx=338.3 cy=471.4 r=3.52 /><circle class=cy cx=473.4 cy=485.4 r=3.52 /><circle class=dh cx=194.3 cy=417.5 r=3.52 /><circle class=dc cx=680.2 cy=357.5 r=3.52 /><circle class=cu cx=509.9 cy=479.5 r=3.52 /><circle class=dd cx=658.0 cy=384.0 r=3.52 /><circle class=cy cx=417.1 cy=485.9 r=3.52 /><circle class=df cx=627.4 cy=414.9 r=3.52 /><circle class=cs cx=318.4 cy=466.0 r=3.52 /><circle class=dk cx=702.7 cy=329.1 r=3.52 /><circle class=cv cx=501.5 cy=482.3 r=3.52 /><circle class=co cx=267.4 cy=448.5 r=3.52 /><circle class=cl cx=236.3 cy=436.1 r=3.52 /><circle class=da cx=464.9 cy=487.3 r=3.52 /><circle class=cy cx=436.8 cy=487.8 r=3.52 /><circle class=df cx=636.0 cy=408.5 r=3.52 /><circle class=df cx=162.7 cy=402.3 r=3.52 /><circle class=dd cx=666.7 cy=376.5 r=3.52 /><circle class=cr cx=298.4 cy=459.9 r=3.52 /><circle class=dh cx=205.0 cy=422.4 r=3.53 /><circle class=db cx=689.1 cy=349.3 r=3.53 /><circle class=cu cx=369.0 cy=479.7 r=3.53 /><circle class=cm cx=571.8 cy=457.2 r=3.53 /><circle class=cn cx=563.4 cy=461.7 r=3.53 /><circle class=cv cx=388.8 cy=483.4 r=3.53 /><circle class=cl cx=580.2 cy=452.5 r=3.53 /><circle class=co cx=555.0 cy=466.0 r=3.53 /><circle class=cw cx=493.1 cy=485.0 r=3.53 /><circle class=ck cx=588.6 cy=447.5 r=3.53 /><circle class=ct cx=349.2 cy=475.2 r=3.53 /><circle class=cp cx=546.6 cy=470.0 r=3.53 /><circle class=cw cx=408.5 cy=486.5 r=3.53 /><circle class=de cx=644.6 cy=401.8 r=3.53 /><circle class=cj cx=597.1 cy=442.3 r=3.53 /><circle class=cy cx=456.5 cy=489.1 r=3.53 /><circle class=cq cx=538.2 cy=473.8 r=3.53 /><circle class=cs cx=329.3 cy=470.0 r=3.53 /><circle class=ci cx=605.6 cy=436.8 r=3.53 /><circle class=dk cx=711.7 cy=320.0 r=3.53 /><circle class=df cx=173.4 cy=407.4 r=3.53 /><circle class=cm cx=247.1 cy=440.7 r=3.53 /><circle class=cp cx=278.3 cy=453.0 r=3.53 /><circle class=dc cx=675.5 cy=368.8 r=3.53 /><circle class=cy cx=428.3 cy=488.9 r=3.53 /><circle class=cy cx=484.7 cy=487.4 r=3.53 /><circle class=cr cx=529.8 cy=477.4 r=3.53 /><circle class=dg cx=614.1 cy=431.1 r=3.53 /><circle class=de cx=653.3 cy=394.8 r=3.53 /><circle class=ck cx=215.7 cy=427.3 r=3.53 /><circle class=db cx=698.0 cy=340.7 r=3.53 /><circle class=cr cx=309.3 cy=464.1 r=3.53 /><circle class=ct cx=521.4 cy=480.8 r=3.53 /><circle class=df cx=622.6 cy=425.2 r=3.53 /><circle class=cy cx=448.0 cy=490.6 r=3.53 /><circle class=cu cx=380.1 cy=483.3 r=3.53 /><circle class=cy cx=476.3 cy=489.6 r=3.53 /><circle class=ct cx=360.2 cy=479.1 r=3.53 /><circle class=cv cx=399.9 cy=486.9 r=3.53 /><circle class=cu cx=513.0 cy=483.9 r=3.53 /><circle class=dg cx=184.1 cy=412.5 r=3.53 /><circle class=dc cx=684.4 cy=360.8 r=3.53 /><circle class=dd cx=662.0 cy=387.6 r=3.54 /><circle class=df cx=631.2 cy=419.0 r=3.54 /><circle class=cm cx=257.9 cy=445.5 r=3.54 /><circle class=cs cx=340.3 cy=474.1 r=3.54 /><circle class=cw cx=419.7 cy=489.7 r=3.54 /><circle class=cp cx=289.1 cy=457.5 r=3.54 /><circle class=ck cx=226.5 cy=432.2 r=3.54 /><circle class=cv cx=504.6 cy=486.8 r=3.54 /><circle class=dk cx=707.0 cy=331.9 r=3.54 /><circle class=cy cx=467.8 cy=491.6 r=3.54 /><circle class=df cx=639.9 cy=412.5 r=3.54 /><circle class=cr cx=320.2 cy=468.5 r=3.54 /><circle class=cy cx=439.5 cy=491.9 r=3.54 /><circle class=cl cx=575.2 cy=461.8 r=3.54 /><circle class=dd cx=670.8 cy=380.1 r=3.54 /><circle class=cm cx=566.8 cy=466.3 r=3.54 /><circle class=cl cx=583.7 cy=457.0 r=3.54 /><circle class=dg cx=194.9 cy=417.7 r=3.54 /><circle class=co cx=558.3 cy=470.6 r=3.54 /><circle class=ck cx=592.2 cy=452.0 r=3.54 /><circle class=db cx=693.3 cy=352.5 r=3.54 /><circle class=cv cx=496.2 cy=489.5 r=3.54 /><circle class=cp cx=549.9 cy=474.7 r=3.54 /><circle class=cj cx=600.7 cy=446.8 r=3.54 /><circle class=de cx=648.5 cy=405.8 r=3.54 /><circle class=cu cx=391.2 cy=487.0 r=3.54 /><circle class=cn cx=268.8 cy=450.2 r=3.54 /><circle class=ct cx=371.3 cy=483.0 r=3.54 /><circle class=cq cx=541.5 cy=478.5 r=3.54 /><circle class=ck cx=237.4 cy=437.1 r=3.54 /><circle class=cv cx=411.0 cy=490.3 r=3.54 /><circle class=cp cx=300.1 cy=462.1 r=3.54 /><circle class=ci cx=609.2 cy=441.3 r=3.54 /><circle class=cy cx=459.3 cy=493.4 r=3.54 /><circle class=cs cx=351.3 cy=478.2 r=3.54 /><circle class=cr cx=533.0 cy=482.1 r=3.54 /><circle class=cw cx=487.7 cy=491.9 r=3.54 /><circle class=dc cx=679.7 cy=372.4 r=3.54 /><circle class=dg cx=617.8 cy=435.6 r=3.54 /><circle class=dk cx=716.1 cy=322.8 r=3.54 /><circle class=cw cx=430.9 cy=492.9 r=3.54 /><circle class=de cx=162.9 cy=401.9 r=3.55 /><circle class=de cx=657.3 cy=398.8 r=3.55 /><circle class=dg cx=205.7 cy=422.9 r=3.55 /><circle class=cr cx=331.2 cy=472.8 r=3.55 /><circle class=cs cx=524.6 cy=485.5 r=3.55 /><circle class=db cx=702.3 cy=343.9 r=3.55 /><circle class=df cx=626.4 cy=429.6 r=3.55 /><circle class=cn cx=279.8 cy=455.0 r=3.55 /><circle class=cy cx=450.8 cy=494.9 r=3.55 /><circle class=cw cx=479.2 cy=494.2 r=3.55 /><circle class=cl cx=248.3 cy=442.1 r=3.55 /><circle class=ct cx=516.2 cy=488.6 r=3.55 /><circle class=cq cx=311.1 cy=466.6 r=3.55 /><circle class=df cx=635.1 cy=423.4 r=3.55 /><circle class=dd cx=666.1 cy=391.6 r=3.55 /><circle class=ct cx=382.4 cy=486.9 r=3.55 /><circle class=dc cx=688.6 cy=364.3 r=3.55 /><circle class=cu cx=402.4 cy=490.7 r=3.55 /><circle class=de cx=173.8 cy=407.3 r=3.55 /><circle class=cs cx=362.4 cy=482.4 r=3.55 /><circle class=cj cx=216.6 cy=428.0 r=3.55 /><circle class=cv cx=422.3 cy=493.8 r=3.55 /><circle class=cu cx=507.7 cy=491.6 r=3.55 /><circle class=de cx=643.7 cy=416.9 r=3.55 /><circle class=cr cx=342.3 cy=477.2 r=3.55 /><circle class=cw cx=470.7 cy=496.2 r=3.55 /><circle class=dk cx=711.4 cy=335.0 r=3.55 /><circle class=cl cx=578.7 cy=466.6 r=3.55 /><circle class=cm cx=570.2 cy=471.2 r=3.55 /><circle class=ck cx=587.3 cy=461.9 r=3.55 /><circle class=cw cx=442.2 cy=496.2 r=3.55 /><circle class=cn cx=561.8 cy=475.5 r=3.55 /><circle class=dd cx=674.9 cy=384.0 r=3.55 /><circle class=co cx=290.7 cy=459.8 r=3.55 /><circle class=cj cx=595.8 cy=456.8 r=3.55 /><circle class=cl cx=259.2 cy=447.1 r=3.55 /><circle class=cv cx=499.2 cy=494.2 r=3.55 /><circle class=co cx=553.3 cy=479.6 r=3.55 /><circle class=cj cx=604.4 cy=451.6 r=3.56 /><circle class=df cx=184.6 cy=412.7 r=3.56 /><circle class=db cx=697.6 cy=356.0 r=3.56 /><circle class=de cx=652.5 cy=410.1 r=3.56 /><circle class=cq cx=322.1 cy=471.2 r=3.56 /><circle class=cp cx=544.8 cy=483.5 r=3.56 /><circle class=cj cx=227.5 cy=433.3 r=3.56 /><circle class=ci cx=612.9 cy=446.0 r=3.56 /><circle class=ct cx=393.6 cy=490.8 r=3.56 /><circle class=cw cx=462.2 cy=497.9 r=3.56 /><circle class=cr cx=536.3 cy=487.1 r=3.56 /><circle class=cs cx=373.6 cy=486.5 r=3.56 /><circle class=cu cx=413.6 cy=494.4 r=3.56 /><circle class=df cx=621.6 cy=440.3 r=3.56 /><circle class=cw cx=490.7 cy=496.7 r=3.56 /><circle class=dc cx=683.8 cy=376.2 r=3.56 /><circle class=de cx=661.3 cy=403.1 r=3.56 /><circle class=cr cx=353.4 cy=481.5 r=3.56 /><circle class=cv cx=433.6 cy=497.3 r=3.56 /><circle class=cs cx=527.8 cy=490.5 r=3.56 /><circle class=dk cx=720.5 cy=325.8 r=3.56 /><circle class=cm cx=270.2 cy=452.1 r=3.56 /><circle class=co cx=301.8 cy=464.6 r=3.56 /><circle class=df cx=195.6 cy=418.1 r=3.56 /><circle class=df cx=630.2 cy=434.3 r=3.56 /><circle class=db cx=706.6 cy=347.3 r=3.56 /><circle class=ck cx=238.5 cy=438.5 r=3.56 /><circle class=ct cx=519.4 cy=493.6 r=3.56 /><circle class=cw cx=482.2 cy=499.0 r=3.56 /><circle class=cq cx=333.2 cy=475.8 r=3.56 /><circle class=cw cx=453.6 cy=499.5 r=3.56 /><circle class=df cx=638.9 cy=428.0 r=3.56 /><circle class=dd cx=670.1 cy=395.8 r=3.56 /><circle class=dc cx=692.8 cy=368.1 r=3.56 /><circle class=ct cx=404.9 cy=494.8 r=3.57 /><circle class=cu cx=510.9 cy=496.6 r=3.57 /><circle class=cs cx=384.8 cy=490.7 r=3.57 /><circle class=ci cx=206.5 cy=423.6 r=3.57 /><circle class=cm cx=281.3 cy=457.2 r=3.57 /><circle class=cu cx=424.9 cy=498.1 r=3.57 /><circle class=de cx=647.6 cy=421.5 r=3.57 /><circle class=dd cx=163.2 cy=401.8 r=3.57 /><circle class=cp cx=312.9 cy=469.4 r=3.57 /><circle class=cr cx=364.6 cy=485.9 r=3.57 /><circle class=cl cx=582.3 cy=471.8 r=3.57 /><circle class=cm cx=573.7 cy=476.4 r=3.57 /><circle class=ck cx=590.8 cy=467.0 r=3.57 /><circle class=cw cx=473.7 cy=501.0 r=3.57 /><circle class=cn cx=565.2 cy=480.7 r=3.57 /><circle class=ck cx=249.5 cy=443.7 r=3.57 /><circle class=cj cx=599.4 cy=461.9 r=3.57 /><circle class=dk cx=715.8 cy=338.4 r=3.57 /><circle class=co cx=556.7 cy=484.8 r=3.57 /><circle class=dd cx=679.0 cy=388.2 r=3.57 /><circle class=cv cx=445.0 cy=500.8 r=3.57 /><circle class=cv cx=502.3 cy=499.3 r=3.57 /><circle class=ci cx=608.0 cy=456.6 r=3.57 /><circle class=cq cx=344.4 cy=480.5 r=3.57 /><circle class=cp cx=548.2 cy=488.7 r=3.57 /><circle class=de cx=656.4 cy=414.7 r=3.57 /><circle class=ci cx=616.7 cy=451.1 r=3.57 /><circle class=db cx=701.8 cy=359.8 r=3.57 /><circle class=ci cx=217.5 cy=429.1 r=3.57 /><circle class=de cx=174.2 cy=407.4 r=3.57 /><circle class=cq cx=539.6 cy=492.3 r=3.57 /><circle class=cw cx=465.1 cy=502.8 r=3.57 /><circle class=df cx=625.3 cy=445.3 r=3.57 /><circle class=cn cx=292.4 cy=462.2 r=3.57 /><circle class=cv cx=493.8 cy=501.8 r=3.57 /><circle class=cs cx=396.1 cy=494.9 r=3.57 /><circle class=ck cx=260.6 cy=449.0 r=3.57 /><circle class=cp cx=324.1 cy=474.3 r=3.57 /><circle class=ct cx=416.2 cy=498.8 r=3.57 /><circle class=dc cx=688.0 cy=380.4 r=3.57 /><circle class=de cx=665.3 cy=407.6 r=3.57 /><circle class=cs cx=531.1 cy=495.8 r=3.57 /><circle class=cr cx=375.9 cy=490.4 r=3.57 /><circle class=df cx=634.0 cy=439.3 r=3.57 /><circle class=cv cx=436.3 cy=501.9 r=3.57 /><circle class=dk cx=725.0 cy=329.2 r=3.58 /><circle class=ci cx=228.6 cy=434.6 r=3.58 /><circle class=cq cx=355.6 cy=485.1 r=3.58 /><circle class=ct cx=522.6 cy=499.0 r=3.58 /><circle class=de cx=185.2 cy=413.1 r=3.58 /><circle class=dk cx=711.0 cy=351.1 r=3.58 /><circle class=cw cx=485.2 cy=504.1 r=3.58 /><circle class=df cx=642.8 cy=433.0 r=3.58 /><circle class=cw cx=456.5 cy=504.3 r=3.58 /><circle class=dd cx=674.2 cy=400.3 r=3.58 /><circle class=cn cx=303.6 cy=467.3 r=3.58 /><circle class=cl cx=271.7 cy=454.3 r=3.58 /><circle class=dc cx=697.0 cy=372.3 r=3.58 /><circle class=cu cx=514.0 cy=501.9 r=3.58 /><circle class=cp cx=335.3 cy=479.1 r=3.58 /><circle class=de cx=651.6 cy=426.4 r=3.58 /><circle class=cl cx=585.8 cy=477.2 r=3.58 /><circle class=cm cx=577.2 cy=481.8 r=3.58 /><circle class=ck cx=594.4 cy=472.4 r=3.58 /><circle class=cs cx=407.4 cy=499.2 r=3.58 /><circle class=cn cx=568.7 cy=486.2 r=3.58 /><circle class=cg cx=196.3 cy=418.9 r=3.58 /><circle class=cj cx=603.1 cy=467.3 r=3.58 /><circle class=cr cx=387.2 cy=494.8 r=3.58 /><circle class=cw cx=476.7 cy=506.1 r=3.58 /><circle class=bj cx=239.7 cy=440.1 r=3.58 /><circle class=cu cx=427.6 cy=502.8 r=3.58 /><circle class=co cx=560.1 cy=490.3 r=3.58 /><circle class=ci cx=611.7 cy=462.0 r=3.58 /><circle class=cu cx=505.5 cy=504.7 r=3.58 /><circle class=dd cx=683.1 cy=392.7 r=3.58 /><circle class=cq cx=366.9 cy=489.8 r=3.58 /><circle class=cv cx=447.8 cy=505.7 r=3.58 /><circle class=cp cx=551.5 cy=494.2 r=3.58 /><circle class=dk cx=720.2 cy=342.1 r=3.58 /><circle class=de cx=660.4 cy=419.6 r=3.58 /><circle class=ci cx=620.4 cy=456.4 r=3.58 /><circle class=cn cx=314.8 cy=472.4 r=3.58 /><circle class=cl cx=282.9 cy=459.6 r=3.58 /><circle class=db cx=706.1 cy=363.8 r=3.58 /><circle class=cq cx=543.0 cy=497.9 r=3.58 /><circle class=df cx=629.1 cy=450.6 r=3.59 /><circle class=ch cx=207.4 cy=424.6 r=3.59 /><circle class=cp cx=346.5 cy=484.1 r=3.59 /><circle class=cw cx=468.0 cy=507.9 r=3.59 /><circle class=cv cx=496.9 cy=507.2 r=3.59 /><circle class=bj cx=250.8 cy=445.6 r=3.59 /><circle class=cs cx=534.4 cy=501.3 r=3.59 /><circle class=dd cx=669.3 cy=412.5 r=3.59 /><circle class=dc cx=692.2 cy=384.9 r=3.59 /><circle class=df cx=637.9 cy=444.5 r=3.59 /><circle class=dd cx=163.6 cy=401.8 r=3.59 /><circle class=ct cx=418.9 cy=503.4 r=3.59 /><circle class=cr cx=398.6 cy=499.3 r=3.59 /><circle class=cu cx=439.1 cy=506.8 r=3.59 /><circle class=ct cx=525.8 cy=504.5 r=3.59 /><circle class=cq cx=378.3 cy=494.5 r=3.59 /><circle class=cm cx=294.1 cy=465.0 r=3.59 /><circle class=co cx=326.0 cy=477.6 r=3.59 /><circle class=dk cx=729.5 cy=332.8 r=3.59 /><circle class=df cx=646.7 cy=438.2 r=3.59 /><circle class=cw cx=488.3 cy=509.5 r=3.59 /><circle class=ch cx=218.5 cy=430.4 r=3.59 /><circle class=dk cx=715.3 cy=355.1 r=3.59 /><circle class=cv cx=459.4 cy=509.5 r=3.59 /><circle class=bk cx=262.0 cy=451.2 r=3.59 /><circle class=dd cx=678.2 cy=405.2 r=3.59 /><circle class=cp cx=357.9 cy=489.0 r=3.59 /><circle class=dd cx=174.7 cy=407.8 r=3.59 /><circle class=cu cx=517.2 cy=507.5 r=3.59 /><circle class=cl cx=589.4 cy=482.9 r=3.59 /><circle class=dc cx=701.2 cy=376.7 r=3.59 /><circle class=cm cx=580.8 cy=487.6 r=3.59 /><circle class=ck cx=598.0 cy=478.1 r=3.59 /><circle class=de cx=655.5 cy=431.6 r=3.59 /><circle class=cn cx=572.1 cy=492.0 r=3.59 /><circle class=cj cx=606.7 cy=473.0 r=3.59 /><circle class=co cx=563.5 cy=496.1 r=3.59 /><circle class=cw cx=479.7 cy=511.5 r=3.59 /><circle class=cj cx=615.4 cy=467.6 r=3.59 /><circle class=bi cx=229.7 cy=436.2 r=3.60 /><circle class=cm cx=305.4 cy=470.4 r=3.60 /><circle class=cr cx=410.0 cy=503.8 r=3.60 /><circle class=ct cx=430.4 cy=507.7 r=3.60 /><circle class=cv cx=508.6 cy=510.3 r=3.60 /><circle class=cp cx=554.9 cy=500.0 r=3.60 /><circle class=co cx=337.4 cy=482.7 r=3.60 /><circle class=dd cx=687.3 cy=397.5 r=3.60 /><circle class=ci cx=624.1 cy=462.0 r=3.60 /><circle class=cq cx=389.7 cy=499.2 r=3.60 /><circle class=dd cx=185.9 cy=413.8 r=3.60 /><circle class=bk cx=273.3 cy=456.8 r=3.60 /><circle class=de cx=664.4 cy=424.8 r=3.60 /><circle class=cv cx=450.7 cy=510.9 r=3.60 /><circle class=dk cx=724.6 cy=346.1 r=3.60 /><circle class=cr cx=546.3 cy=503.7 r=3.60 /><circle class=df cx=632.9 cy=456.2 r=3.60 /><circle class=cp cx=369.3 cy=493.9 r=3.60 /><circle class=db cx=710.4 cy=368.2 r=3.60 /><circle class=cv cx=500.0 cy=512.8 r=3.60 /><circle class=cw cx=471.0 cy=513.4 r=3.60 /><circle class=cs cx=537.7 cy=507.2 r=3.60 /><circle class=bi cx=240.9 cy=442.0 r=3.60 /><circle class=df cx=641.7 cy=450.1 r=3.60 /><circle class=dd cx=673.3 cy=417.7 r=3.60 /><circle class=cm cx=316.7 cy=475.8 r=3.60 /><circle class=cg cx=197.1 cy=419.8 r=3.60 /><circle class=dc cx=696.3 cy=389.6 r=3.60 /><circle class=ck cx=284.6 cy=462.4 r=3.60 /><circle class=co cx=348.7 cy=487.9 r=3.60 /><circle class=ct cx=529.1 cy=510.4 r=3.60 /><circle class=cs cx=421.6 cy=508.4 r=3.60 /><circle class=df cx=650.5 cy=443.8 r=3.60 /><circle class=cq cx=401.2 cy=504.0 r=3.60 /><circle class=cu cx=441.9 cy=512.0 r=3.60 /><circle class=cw cx=491.4 cy=515.1 r=3.60 /><circle class=dk cx=733.9 cy=336.8 r=3.60 /><circle class=bj cx=252.2 cy=447.8 r=3.60 /><circle class=dd cx=682.3 cy=410.3 r=3.60 /><circle class=cp cx=380.7 cy=498.9 r=3.60 /><circle class=cv cx=462.3 cy=515.0 r=3.60 /><circle class=dk cx=719.7 cy=359.5 r=3.61 /><circle class=cu cx=520.5 cy=513.4 r=3.61 /><circle class=cg cx=208.3 cy=425.9 r=3.61 /><circle class=cl cx=593.0 cy=489.0 r=3.61 /><circle class=cm cx=584.3 cy=493.6 r=3.61 /><circle class=ck cx=601.7 cy=484.1 r=3.61 /><circle class=cn cx=575.6 cy=498.0 r=3.61 /><circle class=de cx=659.4 cy=437.2 r=3.61 /><circle class=ck cx=610.4 cy=479.0 r=3.61 /><circle class=cm cx=328.1 cy=481.2 r=3.61 /><circle class=dc cx=705.5 cy=381.4 r=3.61 /><circle class=cl cx=295.9 cy=468.0 r=3.61 /><circle class=co cx=567.0 cy=502.2 r=3.61 /><circle class=cj cx=619.1 cy=473.6 r=3.61 /><circle class=co cx=360.2 cy=493.1 r=3.61 /><circle class=cw cx=482.7 cy=517.2 r=3.61 /><circle class=cq cx=558.3 cy=506.2 r=3.61 /><circle class=cv cx=511.8 cy=516.2 r=3.61 /><circle class=dd cx=164.0 cy=402.2 r=3.61 /><circle class=ci cx=627.9 cy=468.0 r=3.61 /><circle class=dd cx=691.4 cy=402.6 r=3.61 /><circle class=bj cx=263.5 cy=453.7 r=3.61 /><circle class=de cx=668.4 cy=430.3 r=3.61 /><circle class=ct cx=433.1 cy=512.9 r=3.61 /><circle class=bh cx=219.6 cy=431.9 r=3.61 /><circle class=cr cx=412.7 cy=508.8 r=3.61 /><circle class=cr cx=549.7 cy=509.9 r=3.61 /><circle class=df cx=636.7 cy=462.1 r=3.61 /><circle class=cu cx=453.6 cy=516.3 r=3.61 /><circle class=cp cx=392.2 cy=503.9 r=3.61 /><circle class=dk cx=729.0 cy=350.4 r=3.61 /><circle class=cn cx=339.5 cy=486.6 r=3.61 /><circle class=cl cx=307.3 cy=473.7 r=3.61 /><circle class=cs cx=541.1 cy=513.4 r=3.61 /><circle class=cv cx=503.2 cy=518.8 r=3.61 /><circle class=db cx=714.7 cy=372.9 r=3.61 /><circle class=dd cx=175.3 cy=408.5 r=3.61 /><circle class=df cx=645.6 cy=456.0 r=3.61 /><circle class=cw cx=474.0 cy=519.1 r=3.61 /><circle class=de cx=677.4 cy=423.1 r=3.61 /><circle class=co cx=371.6 cy=498.4 r=3.61 /><circle class=bh cx=230.9 cy=438.0 r=3.61 /><circle class=bj cx=274.9 cy=459.5 r=3.61 /><circle class=dc cx=700.5 cy=394.7 r=3.61 /><circle class=ct cx=532.4 cy=516.6 r=3.61 /><circle class=df cx=654.5 cy=449.6 r=3.62 /><circle class=cw cx=494.5 cy=521.1 r=3.62 /><circle class=cs cx=424.3 cy=513.6 r=3.62 /><circle class=cf cx=186.6 cy=414.8 r=3.62 /><circle class=cu cx=444.8 cy=517.5 r=3.62 /><circle class=cl cx=318.7 cy=479.4 r=3.62 /><circle class=cl cx=596.6 cy=495.3 r=3.62 /><circle class=cn cx=351.0 cy=492.1 r=3.62 /><circle class=cq cx=403.8 cy=509.0 r=3.62 /><circle class=cn cx=587.9 cy=500.0 r=3.62 /><circle class=dd cx=686.4 cy=415.7 r=3.62 /><circle class=cu cx=523.7 cy=519.7 r=3.62 /><circle class=cl cx=605.3 cy=490.4 r=3.62 /><circle class=co cx=579.2 cy=504.4 r=3.62 /><circle class=cv cx=465.3 cy=520.7 r=3.62 /><circle class=ck cx=614.1 cy=485.2 r=3.62 /><circle class=bi cx=242.2 cy=444.1 r=3.62 /><circle class=de cx=663.4 cy=443.0 r=3.62 /><circle class=dk cx=738.4 cy=341.1 r=3.62 /><circle class=dk cx=724.0 cy=364.1 r=3.62 /><circle class=ck cx=286.3 cy=465.4 r=3.62 /><circle class=cp cx=570.5 cy=508.6 r=3.62 /><circle class=cj cx=622.9 cy=479.8 r=3.62 /><circle class=co cx=383.2 cy=503.6 r=3.62 /><circle class=dc cx=709.8 cy=386.5 r=3.62 /><circle class=cq cx=561.8 cy=512.6 r=3.62 /><circle class=cf cx=197.9 cy=421.1 r=3.62 /><circle class=ci cx=631.7 cy=474.2 r=3.62 /><circle class=cw cx=485.8 cy=523.2 r=3.62 /><circle class=cv cx=515.1 cy=522.5 r=3.62 /><circle class=de cx=672.4 cy=436.1 r=3.62 /><circle class=cr cx=553.1 cy=516.3 r=3.62 /><circle class=dd cx=695.6 cy=408.0 r=3.62 /><circle class=cm cx=330.2 cy=485.1 r=3.62 /><circle class=df cx=640.5 cy=468.3 r=3.62 /><circle class=bi cx=253.6 cy=450.2 r=3.62 /><circle class=cn cx=362.5 cy=497.6 r=3.62 /><circle class=ct cx=435.9 cy=518.4 r=3.62 /><circle class=ck cx=297.7 cy=471.4 r=3.62 /><circle class=cr cx=415.4 cy=514.0 r=3.62 /><circle class=cv cx=456.5 cy=522.1 r=3.62 /><circle class=cs cx=544.4 cy=519.8 r=3.62 /><circle class=bg cx=209.3 cy=427.4 r=3.63 /><circle class=cv cx=506.4 cy=525.0 r=3.63 /><circle class=df cx=649.4 cy=462.2 r=3.63 /><circle class=dk cx=733.4 cy=355.1 r=3.63 /><circle class=cp cx=394.8 cy=508.9 r=3.63 /><circle class=db cx=719.1 cy=377.9 r=3.63 /><circle class=cw cx=477.0 cy=525.1 r=3.63 /><circle class=de cx=681.4 cy=428.9 r=3.63 /><circle class=ct cx=535.7 cy=523.1 r=3.63 /><circle class=bi cx=265.0 cy=456.4 r=3.63 /><circle class=dc cx=704.8 cy=400.1 r=3.63 /><circle class=cm cx=341.7 cy=490.8 r=3.63 /><circle class=df cx=658.4 cy=455.8 r=3.63 /><circle class=bg cx=220.7 cy=433.8 r=3.63 /><circle class=ck cx=309.2 cy=477.3 r=3.63 /><circle class=cn cx=374.1 cy=503.1 r=3.63 /><circle class=cw cx=497.6 cy=527.4 r=3.63 /><circle class=cm cx=600.2 cy=501.9 r=3.63 /><circle class=dc cx=164.5 cy=402.8 r=3.63 /><circle class=cn cx=591.4 cy=506.6 r=3.63 /><circle class=cl cx=609.0 cy=497.0 r=3.63 /><circle class=cu cx=527.0 cy=526.2 r=3.63 /><circle class=co cx=582.7 cy=511.1 r=3.63 /><circle class=ck cx=617.8 cy=491.8 r=3.63 /><circle class=cu cx=447.7 cy=523.3 r=3.63 /><circle class=dd cx=690.6 cy=421.5 r=3.63 /><circle class=cs cx=427.1 cy=519.1 r=3.63 /><circle class=de cx=667.4 cy=449.1 r=3.63 /><circle class=cp cx=574.0 cy=515.3 r=3.63 /><circle class=cj cx=626.6 cy=486.4 r=3.63 /><circle class=cv cx=468.3 cy=526.7 r=3.63 /><circle class=bj cx=276.5 cy=462.6 r=3.63 /><circle class=cp cx=406.4 cy=514.2 r=3.63 /><circle class=dk cx=728.4 cy=369.1 r=3.63 /><circle class=cq cx=565.2 cy=519.3 r=3.63 /><circle class=dk cx=742.9 cy=345.6 r=3.63 /><circle class=bh cx=232.1 cy=440.2 r=3.63 /><circle class=ci cx=635.5 cy=480.7 r=3.63 /><circle class=ce cx=175.9 cy=409.4 r=3.63 /><circle class=dc cx=714.0 cy=391.8 r=3.63 /><circle class=cm cx=353.2 cy=496.6 r=3.63 /><circle class=cv cx=518.3 cy=529.0 r=3.63 /><circle class=ck cx=320.7 cy=483.3 r=3.63 /><circle class=cw cx=488.9 cy=529.5 r=3.63 /><circle class=cr cx=556.5 cy=523.0 r=3.63 /><circle class=de cx=676.4 cy=442.2 r=3.63 /><circle class=co cx=385.7 cy=508.7 r=3.64 /><circle class=df cx=644.4 cy=474.8 r=3.64 /><circle class=dd cx=699.7 cy=413.8 r=3.64 /><circle class=cj cx=288.0 cy=468.8 r=3.64 /><circle class=cs cx=547.8 cy=526.6 r=3.64 /><circle class=cf cx=187.3 cy=416.0 r=3.64 /><circle class=bh cx=243.6 cy=446.6 r=3.64 /><circle class=ct cx=438.8 cy=524.2 r=3.64 /><circle class=df cx=653.3 cy=468.7 r=3.64 /><circle class=cv cx=509.6 cy=531.6 r=3.64 /><circle class=cv cx=459.5 cy=528.2 r=3.64 /><circle class=cq cx=418.1 cy=519.6 r=3.64 /><circle class=cm cx=364.9 cy=502.3 r=3.64 /><circle class=de cx=685.5 cy=435.0 r=3.64 /><circle class=cl cx=332.3 cy=489.3 r=3.64 /><circle class=cw cx=480.1 cy=531.4 r=3.64 /><circle class=ct cx=539.1 cy=529.9 r=3.64 /><circle class=dk cx=737.9 cy=360.0 r=3.64 /><circle class=db cx=723.4 cy=383.3 r=3.64 /><circle class=df cx=662.3 cy=462.2 r=3.64 /><circle class=co cx=397.4 cy=514.2 r=3.64 /><circle class=dc cx=709.0 cy=405.8 r=3.64 /><circle class=bf cx=198.8 cy=422.6 r=3.64 /><circle class=cj cx=299.6 cy=475.0 r=3.64 /><circle class=cm cx=603.8 cy=508.8 r=3.64 /><circle class=bi cx=255.1 cy=453.0 r=3.64 /><circle class=cn cx=595.0 cy=513.6 r=3.64 /><circle class=cl cx=612.7 cy=503.9 r=3.64 /><circle class=cw cx=500.8 cy=534.0 r=3.64 /><circle class=co cx=586.3 cy=518.0 r=3.64 /><circle class=ck cx=621.5 cy=498.7 r=3.64 /><circle class=cu cx=530.3 cy=533.0 r=3.64 /><circle class=cp cx=577.5 cy=522.3 r=3.64 /><circle class=dd cx=694.7 cy=427.5 r=3.64 /><circle class=df cx=671.3 cy=455.6 r=3.64 /><circle class=cj cx=630.4 cy=493.2 r=3.64 /><circle class=cl cx=343.9 cy=495.3 r=3.64 /><circle class=cu cx=450.6 cy=529.4 r=3.64 /><circle class=cm cx=376.5 cy=508.1 r=3.64 /><circle class=cq cx=568.7 cy=526.3 r=3.64 /><circle class=bf cx=210.3 cy=429.2 r=3.64 /><circle class=cs cx=429.9 cy=524.9 r=3.64 /><circle class=cv cx=471.3 cy=533.1 r=3.64 /><circle class=cj cx=639.3 cy=487.6 r=3.65 /><circle class=bi cx=266.6 cy=459.4 r=3.65 /><circle class=cj cx=311.2 cy=481.2 r=3.65 /><circle class=cv cx=521.6 cy=535.8 r=3.65 /><circle class=dk cx=732.8 cy=374.4 r=3.65 /><circle class=cs cx=560.0 cy=530.1 r=3.65 /><circle class=dc cx=718.3 cy=397.5 r=3.65 /><circle class=cp cx=409.1 cy=519.8 r=3.65 /><circle class=cw cx=492.0 cy=536.1 r=3.65 /><circle class=dk cx=747.4 cy=350.5 r=3.65 /><circle class=ci cx=648.2 cy=481.6 r=3.65 /><circle class=de cx=680.4 cy=448.6 r=3.65 /><circle class=dd cx=703.9 cy=419.8 r=3.65 /><circle class=ao cx=221.8 cy=435.9 r=3.65 /><circle class=ct cx=551.2 cy=533.6 r=3.65 /><circle class=cl cx=355.6 cy=501.3 r=3.65 /><circle class=df cx=657.2 cy=475.4 r=3.65 /><circle class=cn cx=388.2 cy=514.0 r=3.65 /><circle class=bi cx=278.2 cy=465.9 r=3.65 /><circle class=cv cx=512.8 cy=538.4 r=3.65 /><circle class=ck cx=322.8 cy=487.5 r=3.65 /><circle class=ce cx=165.0 cy=403.6 r=3.65 /><circle class=cv cx=462.4 cy=534.5 r=3.65 /><circle class=ct cx=441.7 cy=530.3 r=3.65 /><circle class=de cx=689.6 cy=441.4 r=3.65 /><circle class=ct cx=542.4 cy=537.0 r=3.65 /><circle class=cw cx=483.2 cy=538.0 r=3.65 /><circle class=ao cx=233.4 cy=442.6 r=3.65 /><circle class=df cx=666.2 cy=469.0 r=3.65 /><circle class=cq cx=420.9 cy=525.4 r=3.65 /><circle class=db cx=727.7 cy=388.9 r=3.65 /><circle class=cn cx=607.5 cy=516.1 r=3.65 /><circle class=co cx=598.7 cy=520.8 r=3.65 /><circle class=dk cx=742.3 cy=365.2 r=3.65 /><circle class=cm cx=616.3 cy=511.1 r=3.65 /><circle class=dc cx=713.2 cy=411.8 r=3.65 /><circle class=cp cx=589.8 cy=525.3 r=3.65 /><circle class=cl cx=625.2 cy=505.9 r=3.65 /><circle class=ci cx=289.8 cy=472.4 r=3.65 /><circle class=ce cx=176.6 cy=410.5 r=3.65 /><circle class=cl cx=367.3 cy=507.4 r=3.65 /><circle class=cw cx=504.0 cy=540.8 r=3.65 /><circle class=cu cx=533.7 cy=540.1 r=3.65 /><circle class=cq cx=581.0 cy=529.6 r=3.65 /><circle class=ck cx=634.1 cy=500.4 r=3.66 /><circle class=ck cx=334.5 cy=493.7 r=3.66 /><circle class=co cx=400.0 cy=519.8 r=3.66 /><circle class=df cx=675.3 cy=462.3 r=3.66 /><circle class=dd cx=698.8 cy=433.9 r=3.66 /><circle class=ap cx=245.0 cy=449.3 r=3.66 /><circle class=cr cx=572.2 cy=533.6 r=3.66 /><circle class=cj cx=643.1 cy=494.7 r=3.66 /><circle class=cu cx=453.5 cy=535.8 r=3.66 /><circle class=be cx=188.1 cy=417.4 r=3.66 /><circle class=cv cx=474.4 cy=539.7 r=3.66 /><circle class=cs cx=563.4 cy=537.4 r=3.66 /><circle class=cv cx=524.9 cy=542.9 r=3.66 /><circle class=cj cx=301.5 cy=478.9 r=3.66 /><circle class=cs cx=432.7 cy=531.1 r=3.66 /><circle class=ci cx=652.1 cy=488.8 r=3.66 /><circle class=de cx=684.5 cy=455.3 r=3.66 /><circle class=cw cx=495.2 cy=543.0 r=3.66 /><circle class=cm cx=379.0 cy=513.5 r=3.66 /><circle class=dk cx=737.2 cy=380.0 r=3.66 /><circle class=dc cx=722.6 cy=403.4 r=3.66 /><circle class=bh cx=256.6 cy=456.0 r=3.66 /><circle class=ck cx=346.2 cy=500.0 r=3.66 /><circle class=ct cx=554.6 cy=541.0 r=3.66 /><circle class=dk cx=752.0 cy=355.8 r=3.66 /><circle class=dd cx=708.1 cy=426.1 r=3.66 /><circle class=cp cx=411.8 cy=525.7 r=3.66 /><circle class=bf cx=199.7 cy=424.4 r=3.66 /><circle class=df cx=661.1 cy=482.5 r=3.66 /><circle class=cv cx=516.1 cy=545.6 r=3.66 /><circle class=cj cx=313.2 cy=485.4 r=3.66 /><circle class=cu cx=545.8 cy=544.3 r=3.66 /><circle class=de cx=693.7 cy=448.1 r=3.66 /><circle class=bh cx=268.3 cy=462.7 r=3.66 /><circle class=cv cx=465.5 cy=541.2 r=3.66 /><circle class=df cx=670.2 cy=476.1 r=3.66 /><circle class=cn cx=611.1 cy=523.6 r=3.66 /><circle class=an cx=211.4 cy=431.3 r=3.66 /><circle class=cn cx=390.8 cy=519.6 r=3.66 /><circle class=co cx=602.3 cy=528.3 r=3.66 /><circle class=ct cx=444.6 cy=536.7 r=3.66 /><circle class=cm cx=620.0 cy=518.6 r=3.66 /><circle class=cw cx=486.3 cy=544.9 r=3.66 /><circle class=cl cx=358.0 cy=506.4 r=3.66 /><circle class=cp cx=593.4 cy=532.9 r=3.66 /><circle class=cl cx=629.0 cy=513.4 r=3.67 /><circle class=db cx=732.1 cy=394.8 r=3.67 /><circle class=cq cx=584.6 cy=537.2 r=3.67 /><circle class=dc cx=717.4 cy=418.1 r=3.67 /><circle class=cu cx=537.0 cy=547.5 r=3.67 /><circle class=cr cx=423.7 cy=531.6 r=3.67 /><circle class=ck cx=637.9 cy=507.9 r=3.67 /><circle class=bv cx=507.2 cy=548.0 r=3.67 /><circle class=dk cx=746.8 cy=370.8 r=3.67 /><circle class=cj cx=324.9 cy=491.9 r=3.67 /><circle class=df cx=679.3 cy=469.4 r=3.67 /><circle class=cr cx=575.7 cy=541.2 r=3.67 /><circle class=bi cx=280.0 cy=469.5 r=3.67 /><circle class=an cx=223.0 cy=438.3 r=3.67 /><circle class=dd cx=702.9 cy=440.6 r=3.67 /><circle class=cj cx=646.9 cy=502.1 r=3.67 /><circle class=cl cx=369.8 cy=512.7 r=3.67 /><circle class=cs cx=566.9 cy=545.0 r=3.67 /><circle class=co cx=402.7 cy=525.7 r=3.67 /><circle class=bu cx=528.2 cy=550.3 r=3.67 /><circle class=ci cx=655.9 cy=496.2 r=3.67 /><circle class=cv cx=477.5 cy=546.7 r=3.67 /><circle class=cu cx=456.5 cy=542.4 r=3.67 /><circle class=de cx=688.5 cy=462.4 r=3.67 /><circle class=cj cx=336.7 cy=498.5 r=3.67 /><circle class=ao cx=234.7 cy=445.3 r=3.67 /><circle class=bv cx=498.4 cy=550.2 r=3.67 /><circle class=ci cx=291.7 cy=476.3 r=3.67 /><circle class=ct cx=558.1 cy=548.6 r=3.67 /><circle class=ce cx=165.6 cy=404.8 r=3.67 /><circle class=cs cx=435.6 cy=537.5 r=3.67 /><circle class=dc cx=726.9 cy=409.7 r=3.67 /><circle class=dg cx=665.0 cy=489.9 r=3.67 /><circle class=db cx=741.6 cy=385.9 r=3.67 /><circle class=dd cx=712.3 cy=432.8 r=3.67 /><circle class=bv cx=519.4 cy=553.0 r=3.67 /><circle class=cm cx=381.6 cy=519.1 r=3.67 /><circle class=dk cx=756.5 cy=361.3 r=3.67 /><circle class=bt cx=549.2 cy=552.0 r=3.67 /><circle class=ao cx=246.4 cy=452.3 r=3.67 /><circle class=cp cx=414.6 cy=531.8 r=3.67 /><circle class=be cx=177.3 cy=412.0 r=3.67 /><circle class=de cx=697.7 cy=455.1 r=3.67 /><circle class=co cx=614.8 cy=531.4 r=3.67 /><circle class=df cx=674.1 cy=483.5 r=3.68 /><circle class=ci cx=303.5 cy=483.1 r=3.68 /><circle class=cp cx=605.9 cy=536.2 r=3.68 /><circle class=cn cx=623.7 cy=526.4 r=3.68 /><circle class=ck cx=348.5 cy=505.1 r=3.68 /><circle class=cq cx=597.0 cy=540.7 r=3.68 /><circle class=cm cx=632.7 cy=521.1 r=3.68 /><circle class=cv cx=468.5 cy=548.2 r=3.68 /><circle class=bv cx=489.5 cy=552.2 r=3.68 /><circle class=cr cx=588.1 cy=545.0 r=3.68 /><circle class=cl cx=641.7 cy=515.6 r=3.68 /><circle class=ct cx=447.5 cy=543.4 r=3.68 /><circle class=bt cx=540.4 cy=555.2 r=3.68 /><circle class=be cx=189.0 cy=419.2 r=3.68 /><circle class=ap cx=258.2 cy=459.3 r=3.68 /><circle class=bv cx=510.5 cy=555.5 r=3.68 /><circle class=db cx=736.4 cy=401.1 r=3.68 /><circle class=cs cx=579.3 cy=549.1 r=3.68 /><circle class=dc cx=721.7 cy=424.7 r=3.68 /><circle class=df cx=683.3 cy=476.7 r=3.68 /><circle class=cn cx=393.5 cy=525.5 r=3.68 /><circle class=ck cx=650.7 cy=509.9 r=3.68 /><circle class=ci cx=315.3 cy=489.9 r=3.68 /><circle class=dk cx=751.2 cy=376.7 r=3.68 /><circle class=de cx=707.0 cy=447.6 r=3.68 /><circle class=ck cx=360.4 cy=511.7 r=3.68 /><circle class=cr cx=426.5 cy=538.0 r=3.68 /><circle class=cs cx=570.4 cy=553.0 r=3.68 /><circle class=cj cx=659.8 cy=503.9 r=3.68 /><circle class=am cx=200.7 cy=426.4 r=3.68 /><circle class=bu cx=531.5 cy=558.1 r=3.68 /><circle class=bh cx=270.0 cy=466.3 r=3.68 /><circle class=de cx=692.5 cy=469.7 r=3.68 /><circle class=cv cx=480.6 cy=553.9 r=3.68 /><circle class=bs cx=561.5 cy=556.6 r=3.68 /><circle class=ci cx=327.1 cy=496.7 r=3.68 /><circle class=cu cx=459.6 cy=549.4 r=3.68 /><circle class=bv cx=501.6 cy=557.7 r=3.68 /><circle class=ci cx=668.9 cy=497.7 r=3.68 /><circle class=co cx=405.4 cy=531.9 r=3.68 /><circle class=an cx=212.5 cy=433.7 r=3.68 /><circle class=cl cx=372.3 cy=518.3 r=3.68 /><circle class=dc cx=731.2 cy=416.3 r=3.68 /><circle class=dd cx=716.4 cy=439.8 r=3.68 /><circle class=bh cx=281.8 cy=473.4 r=3.68 /><circle class=cs cx=438.5 cy=544.2 r=3.68 /><circle class=db cx=746.0 cy=392.2 r=3.68 /><circle class=bv cx=522.7 cy=560.8 r=3.68 /><circle class=bt cx=552.7 cy=560.0 r=3.69 /><circle class=co cx=618.5 cy=539.5 r=3.69 /><circle class=cp cx=609.5 cy=544.3 r=3.69 /><circle class=cn cx=627.5 cy=534.5 r=3.69 /><circle class=df cx=678.1 cy=491.2 r=3.69 /><circle class=cq cx=600.6 cy=548.9 r=3.69 /><circle class=de cx=701.8 cy=462.4 r=3.69 /><circle class=cm cx=636.5 cy=529.2 r=3.69 /><circle class=cj cx=339.0 cy=503.6 r=3.69 /><circle class=an cx=224.3 cy=441.0 r=3.69 /><circle class=dk cx=761.0 cy=367.2 r=3.69 /><circle class=cr cx=591.7 cy=553.2 r=3.69 /><circle class=cl cx=645.5 cy=523.7 r=3.69 /><circle class=cq cx=417.4 cy=538.3 r=3.69 /><circle class=ci cx=293.6 cy=480.5 r=3.69 /><circle class=cm cx=384.2 cy=525.0 r=3.69 /><circle class=bu cx=543.8 cy=563.1 r=3.69 /><circle class=bv cx=492.7 cy=559.7 r=3.69 /><circle class=cv cx=471.6 cy=555.4 r=3.69 /><circle class=br cx=582.8 cy=557.3 r=3.69 /><circle class=ck cx=654.6 cy=518.0 r=3.69 /><circle class=df cx=687.3 cy=484.4 r=3.69 /><circle class=bv cx=513.8 cy=563.2 r=3.69 /><circle class=an cx=236.1 cy=448.3 r=3.69 /><circle class=dd cx=725.9 cy=431.7 r=3.69 /><circle class=ct cx=450.5 cy=550.5 r=3.69 /><circle class=db cx=740.7 cy=407.7 r=3.69 /><circle class=bs cx=573.9 cy=561.2 r=3.69 /><circle class=cj cx=350.9 cy=510.5 r=3.69 /><circle class=de cx=711.2 cy=454.9 r=3.69 /><circle class=cj cx=663.7 cy=511.9 r=3.69 /><circle class=ci cx=305.5 cy=487.6 r=3.69 /><circle class=bu cx=534.9 cy=566.1 r=3.69 /><circle class=dk cx=755.7 cy=382.9 r=3.69 /><circle class=cn cx=396.2 cy=531.7 r=3.69 /><circle class=bd cx=166.3 cy=406.2 r=3.69 /><circle class=ao cx=248.0 cy=455.6 r=3.69 /><circle class=cr cx=429.4 cy=544.8 r=3.69 /><circle class=bs cx=565.0 cy=564.8 r=3.69 /><circle class=df cx=696.6 cy=477.4 r=3.69 /><circle class=ci cx=672.8 cy=505.7 r=3.69 /><circle class=bv cx=483.7 cy=561.4 r=3.69 /><circle class=bv cx=504.9 cy=565.5 r=3.69 /><circle class=ck cx=362.9 cy=517.4 r=3.69 /><circle class=ci cx=317.4 cy=494.7 r=3.70 /><circle class=be cx=178.1 cy=413.7 r=3.70 /><circle class=cu cx=462.6 cy=556.7 r=3.70 /><circle class=cp cx=622.2 cy=548.0 r=3.70 /><circle class=bt cx=556.1 cy=568.3 r=3.70 /><circle class=cq cx=613.2 cy=552.8 r=3.70 /><circle class=ao cx=259.8 cy=462.9 r=3.70 /><circle class=co cx=631.2 cy=542.9 r=3.70 /><circle class=dc cx=735.4 cy=423.3 r=3.70 /><circle class=dd cx=720.6 cy=447.0 r=3.70 /><circle class=bv cx=526.0 cy=568.8 r=3.70 /><circle class=cr cx=604.2 cy=557.4 r=3.70 /><circle class=df cx=682.0 cy=499.2 r=3.70 /><circle class=cn cx=640.2 cy=537.6 r=3.70 /><circle class=co cx=408.2 cy=538.4 r=3.70 /><circle class=db cx=750.4 cy=398.7 r=3.70 /><circle class=de cx=705.9 cy=470.1 r=3.70 /><circle class=bq cx=595.3 cy=561.7 r=3.70 /><circle class=cs cx=441.5 cy=551.3 r=3.70 /><circle class=cm cx=649.3 cy=532.1 r=3.70 /><circle class=am cx=189.9 cy=421.3 r=3.70 /><circle class=cl cx=374.8 cy=524.3 r=3.70 /><circle class=ci cx=329.4 cy=501.8 r=3.70 /><circle class=br cx=586.4 cy=565.8 r=3.70 /><circle class=bh cx=271.7 cy=470.2 r=3.70 /><circle class=bu cx=547.2 cy=571.4 r=3.70 /><circle class=cl cx=658.4 cy=526.3 r=3.70 /><circle class=bv cx=495.9 cy=567.5 r=3.70 /><circle class=dk cx=765.5 cy=373.3 r=3.70 /><circle class=df cx=691.3 cy=492.4 r=3.70 /><circle class=am cx=201.8 cy=428.8 r=3.70 /><circle class=bu cx=474.7 cy=563.0 r=3.70 /><circle class=bv cx=517.1 cy=571.3 r=3.70 /><circle class=bs cx=577.4 cy=569.7 r=3.70 /><circle class=cq cx=420.2 cy=545.1 r=3.70 /><circle class=ck cx=667.5 cy=520.3 r=3.70 /><circle class=dd cx=730.1 cy=438.9 r=3.70 /><circle class=bh cx=283.7 cy=477.6 r=3.70 /><circle class=de cx=715.3 cy=462.5 r=3.70 /><circle class=cj cx=341.3 cy=509.0 r=3.70 /><circle class=cm cx=386.9 cy=531.2 r=3.70 /><circle class=dc cx=745.1 cy=414.6 r=3.70 /><circle class=ct cx=453.6 cy=557.8 r=3.70 /><circle class=bu cx=538.3 cy=574.4 r=3.70 /><circle class=an cx=213.7 cy=436.4 r=3.70 /><circle class=bs cx=568.5 cy=573.4 r=3.70 /><circle class=df cx=700.6 cy=485.3 r=3.70 /><circle class=cj cx=676.7 cy=514.0 r=3.70 /><circle class=dk cx=760.2 cy=389.4 r=3.70 /><circle class=ch cx=295.6 cy=485.0 r=3.70 /><circle class=cq cx=625.9 cy=556.7 r=3.71 /><circle class=bv cx=508.1 cy=573.6 r=3.71 /><circle class=cq cx=616.8 cy=561.5 r=3.71 /><circle class=cj cx=353.4 cy=516.1 r=3.71 /><circle class=cr cx=432.3 cy=551.8 r=3.71 /><circle class=ac cx=225.6 cy=444.0 r=3.71 /><circle class=cp cx=634.9 cy=551.6 r=3.71 /><circle class=bv cx=486.9 cy=569.3 r=3.71 /><circle class=bt cx=559.6 cy=576.8 r=3.71 /><circle class=bq cx=607.9 cy=566.1 r=3.71 /><circle class=cn cx=398.9 cy=538.2 r=3.71 /><circle class=co cx=644.0 cy=546.3 r=3.71 /><circle class=bv cx=529.4 cy=577.2 r=3.71 /><circle class=ci cx=686.0 cy=507.5 r=3.71 /><circle class=dd cx=724.8 cy=454.6 r=3.71 /><circle class=br cx=598.9 cy=570.5 r=3.71 /><circle class=cu cx=465.7 cy=564.3 r=3.71 /><circle class=dc cx=739.7 cy=430.5 r=3.71 /><circle class=cn cx=653.1 cy=540.8 r=3.71 /><circle class=de cx=710.0 cy=478.0 r=3.71 /><circle class=ch cx=307.6 cy=492.4 r=3.71 /><circle class=an cx=237.6 cy=451.6 r=3.71 /><circle class=br cx=589.9 cy=574.6 r=3.71 /><circle class=ck cx=365.4 cy=523.3 r=3.71 /><circle class=ax cx=550.6 cy=580.0 r=3.71 /><circle class=cm cx=662.2 cy=535.0 r=3.71 /><circle class=db cx=754.8 cy=405.6 r=3.71 /><circle class=ct cx=444.4 cy=558.6 r=3.71 /><circle class=df cx=695.3 cy=500.7 r=3.71 /><circle class=cp cx=411.0 cy=545.2 r=3.71 /><circle class=bs cx=581.0 cy=578.6 r=3.71 /><circle class=ao cx=249.6 cy=459.2 r=3.71 /><circle class=bv cx=499.1 cy=575.6 r=3.71 /><circle class=ci cx=319.6 cy=499.8 r=3.71 /><circle class=cl cx=671.4 cy=528.9 r=3.71 /><circle class=bv cx=520.4 cy=579.7 r=3.71 /><circle class=bu cx=477.9 cy=570.8 r=3.71 /><circle class=dk cx=770.0 cy=379.8 r=3.71 /><circle class=cl cx=377.5 cy=530.5 r=3.71 /><circle class=dd cx=734.3 cy=446.5 r=3.71 /><circle class=de cx=719.4 cy=470.4 r=3.71 /><circle class=ay cx=541.7 cy=583.0 r=3.71 /><circle class=aw cx=572.0 cy=582.2 r=3.71 /><circle class=bd cx=167.0 cy=407.9 r=3.71 /><circle class=ao cx=261.5 cy=466.8 r=3.71 /><circle class=ck cx=680.6 cy=522.6 r=3.71 /><circle class=dc cx=749.4 cy=421.8 r=3.71 /><circle class=df cx=704.6 cy=493.6 r=3.71 /><circle class=ci cx=331.7 cy=507.2 r=3.71 /><circle class=cq cx=423.1 cy=552.2 r=3.71 /><circle class=cu cx=456.6 cy=565.4 r=3.71 /><circle class=cq cx=629.6 cy=565.7 r=3.71 /><circle class=bq cx=620.5 cy=570.6 r=3.71 /><circle class=cq cx=638.6 cy=560.6 r=3.71 /><circle class=bq cx=611.5 cy=575.2 r=3.72 /><circle class=al cx=178.9 cy=415.7 r=3.72 /><circle class=aw cx=563.0 cy=585.7 r=3.72 /><circle class=cp cx=647.7 cy=555.3 r=3.72 /><circle class=cm cx=389.5 cy=537.8 r=3.72 /><circle class=bg cx=273.6 cy=474.5 r=3.72 /><circle class=bv cx=511.4 cy=582.0 r=3.72 /><circle class=dk cx=764.6 cy=396.3 r=3.72 /><circle class=br cx=602.5 cy=579.6 r=3.72 /><circle class=cj cx=689.9 cy=516.1 r=3.72 /><circle class=bv cx=490.1 cy=577.4 r=3.72 /><circle class=co cx=656.9 cy=549.8 r=3.72 /><circle class=ay cx=532.7 cy=585.8 r=3.72 /><circle class=ci cx=343.7 cy=514.7 r=3.72 /><circle class=am cx=190.9 cy=423.6 r=3.72 /><circle class=de cx=728.9 cy=462.6 r=3.72 /><circle class=av cx=593.5 cy=583.8 r=3.72 /><circle class=cs cx=435.3 cy=559.2 r=3.72 /><circle class=df cx=714.0 cy=486.3 r=3.72 /><circle class=cn cx=666.0 cy=543.9 r=3.72 /><circle class=dc cx=744.0 cy=438.1 r=3.72 /><circle class=bh cx=285.6 cy=482.1 r=3.72 /><circle class=bt cx=468.8 cy=572.2 r=3.72 /><circle class=ax cx=554.1 cy=588.9 r=3.72 /><circle class=co cx=401.7 cy=545.0 r=3.72 /><circle class=ab cx=202.9 cy=431.5 r=3.72 /><circle class=av cx=584.5 cy=587.7 r=3.72 /><circle class=ci cx=699.2 cy=509.3 r=3.72 /><circle class=cj cx=355.8 cy=522.1 r=3.72 /><circle class=cl cx=675.2 cy=537.9 r=3.72 /><circle class=db cx=759.2 cy=412.8 r=3.72 /><circle class=ch cx=297.7 cy=489.8 r=3.72 /><circle class=ay cx=523.7 cy=588.3 r=3.72 /><circle class=bv cx=502.4 cy=584.0 r=3.72 /><circle class=ct cx=447.5 cy=566.2 r=3.72 /><circle class=ab cx=215.0 cy=439.3 r=3.72 /><circle class=aw cx=575.5 cy=591.4 r=3.72 /><circle class=ay cx=545.1 cy=591.9 r=3.72 /><circle class=de cx=723.5 cy=478.7 r=3.72 /><circle class=ck cx=684.5 cy=531.6 r=3.72 /><circle class=cp cx=413.8 cy=552.3 r=3.72 /><circle class=bu cx=481.1 cy=579.0 r=3.72 /><circle class=dd cx=738.5 cy=454.4 r=3.72 /><circle class=ck cx=368.0 cy=529.6 r=3.72 /><circle class=bq cx=633.2 cy=575.1 r=3.72 /><circle class=df cx=708.6 cy=502.2 r=3.72 /><circle class=bq cx=624.2 cy=579.9 r=3.72 /><circle class=cq cx=642.3 cy=570.0 r=3.72 /><circle class=ch cx=309.8 cy=497.5 r=3.72 /><circle class=ac cx=227.0 cy=447.2 r=3.72 /><circle class=dk cx=774.5 cy=386.7 r=3.72 /><circle class=br cx=615.1 cy=584.6 r=3.72 /><circle class=cq cx=651.5 cy=564.6 r=3.72 /><circle class=dc cx=753.7 cy=429.4 r=3.73 /><circle class=ax cx=566.5 cy=594.9 r=3.73 /><circle class=au cx=606.1 cy=589.0 r=3.73 /><circle class=cp cx=660.6 cy=559.0 r=3.73 /><circle class=bt cx=459.7 cy=573.3 r=3.73 /><circle class=cj cx=693.8 cy=525.0 r=3.73 /><circle class=cl cx=380.1 cy=537.1 r=3.73 /><circle class=an cx=239.1 cy=455.2 r=3.73 /><circle class=ay cx=514.7 cy=590.7 r=3.73 /><circle class=cq cx=426.0 cy=559.6 r=3.73 /><circle class=ch cx=321.9 cy=505.2 r=3.73 /><circle class=ay cx=536.1 cy=594.7 r=3.73 /><circle class=av cx=597.1 cy=593.2 r=3.73 /><circle class=cn cx=669.8 cy=553.2 r=3.73 /><circle class=bv cx=493.4 cy=585.9 r=3.73 /><circle class=de cx=733.1 cy=470.8 r=3.73 /><circle class=df cx=718.1 cy=494.9 r=3.73 /><circle class=dk cx=769.0 cy=403.5 r=3.73 /><circle class=ax cx=557.5 cy=598.1 r=3.73 /><circle class=an cx=251.2 cy=463.1 r=3.73 /><circle class=aw cx=588.0 cy=597.1 r=3.73 /><circle class=ci cx=334.0 cy=512.9 r=3.73 /><circle class=dd cx=748.2 cy=446.0 r=3.73 /><circle class=ci cx=703.2 cy=518.2 r=3.73 /><circle class=cn cx=392.3 cy=544.6 r=3.73 /><circle class=cm cx=679.1 cy=547.1 r=3.73 /><circle class=bu cx=472.0 cy=580.4 r=3.73 /><circle class=cs cx=438.3 cy=566.9 r=3.73 /><circle class=ao cx=263.3 cy=471.0 r=3.73 /><circle class=aw cx=579.0 cy=600.8 r=3.73 /><circle class=az cx=527.1 cy=597.3 r=3.73 /><circle class=ci cx=346.2 cy=520.7 r=3.73 /><circle class=ay cx=505.7 cy=592.7 r=3.73 /><circle class=db cx=763.5 cy=420.3 r=3.73 /><circle class=cl cx=688.4 cy=540.8 r=3.73 /><circle class=ay cx=548.5 cy=601.2 r=3.73 /><circle class=bq cx=636.9 cy=584.7 r=3.73 /><circle class=at cx=627.8 cy=589.6 r=3.73 /><circle class=bq cx=646.1 cy=579.6 r=3.73 /><circle class=co cx=404.5 cy=552.1 r=3.73 /><circle class=de cx=727.6 cy=487.2 r=3.73 /><circle class=au cx=618.7 cy=594.2 r=3.73 /><circle class=bg cx=275.4 cy=479.0 r=3.73 /><circle class=df cx=712.6 cy=511.1 r=3.73 /><circle class=cq cx=655.2 cy=574.2 r=3.73 /><circle class=dd cx=742.7 cy=462.6 r=3.73 /><circle class=ct cx=450.5 cy=574.2 r=3.73 /><circle class=al cx=167.7 cy=409.9 r=3.73 /><circle class=bu cx=484.3 cy=587.5 r=3.73 /><circle class=av cx=609.7 cy=598.7 r=3.73 /><circle class=ai cx=570.0 cy=604.3 r=3.73 /><circle class=cq cx=664.4 cy=568.6 r=3.73 /><circle class=cj cx=358.4 cy=528.4 r=3.73 /><circle class=ck cx=697.7 cy=534.2 r=3.74 /><circle class=bh cx=287.6 cy=486.9 r=3.74 /><circle class=av cx=600.6 cy=602.9 r=3.74 /><circle class=al cx=179.9 cy=418.0 r=3.74 /><circle class=cp cx=416.7 cy=559.7 r=3.74 /><circle class=dc cx=758.0 cy=437.2 r=3.74 /><circle class=dk cx=779.0 cy=393.8 r=3.74 /><circle class=cp cx=673.7 cy=562.8 r=3.74 /><circle class=ay cx=539.5 cy=604.0 r=3.74 /><circle class=az cx=518.1 cy=599.6 r=3.74 /><circle class=ck cx=370.6 cy=536.2 r=3.74 /><circle class=bt cx=462.8 cy=581.5 r=3.74 /><circle class=ab cx=192.0 cy=426.2 r=3.74 /><circle class=aj cx=561.0 cy=607.6 r=3.74 /><circle class=ch cx=299.8 cy=494.9 r=3.74 /><circle class=ah cx=591.6 cy=606.8 r=3.74 /><circle class=df cx=722.1 cy=503.8 r=3.74 /><circle class=ay cx=496.6 cy=594.6 r=3.74 /><circle class=de cx=737.2 cy=479.4 r=3.74 /><circle class=cn cx=682.9 cy=556.7 r=3.74 /><circle class=cj cx=707.2 cy=527.4 r=3.74 /><circle class=cr cx=429.0 cy=567.2 r=3.74 /><circle class=ab cx=204.1 cy=434.4 r=3.74 /><circle class=db cx=773.5 cy=411.0 r=3.74 /><circle class=ch cx=312.0 cy=502.9 r=3.74 /><circle class=dd cx=752.5 cy=454.2 r=3.74 /><circle class=cl cx=382.8 cy=544.0 r=3.74 /><circle class=ai cx=582.5 cy=610.6 r=3.74 /><circle class=at cx=640.6 cy=594.6 r=3.74 /><circle class=au cx=631.5 cy=599.5 r=3.74 /><circle class=cm cx=692.3 cy=550.4 r=3.74 /><circle class=bq cx=649.8 cy=589.5 r=3.74 /><circle class=bu cx=475.1 cy=588.9 r=3.74 /><circle class=az cx=530.5 cy=606.6 r=3.74 /><circle class=ab cx=216.3 cy=442.6 r=3.74 /><circle class=aj cx=552.0 cy=610.7 r=3.74 /><circle class=au cx=622.4 cy=604.2 r=3.74 /><circle class=bp cx=659.0 cy=584.1 r=3.74 /><circle class=cs cx=441.3 cy=574.8 r=3.74 /><circle class=ch cx=324.2 cy=510.9 r=3.74 /><circle class=az cx=509.0 cy=601.8 r=3.74 /><circle class=ag cx=613.3 cy=608.6 r=3.74 /><circle class=df cx=731.7 cy=496.1 r=3.74 /><circle class=ci cx=716.6 cy=520.3 r=3.74 /><circle class=cn cx=395.1 cy=551.8 r=3.74 /><circle class=cq cx=668.2 cy=578.5 r=3.74 /><circle class=ac cx=228.5 cy=450.8 r=3.74 /><circle class=ai cx=573.5 cy=614.1 r=3.74 /><circle class=dc cx=767.9 cy=428.2 r=3.74 /><circle class=de cx=746.9 cy=471.2 r=3.74 /><circle class=cl cx=701.7 cy=543.8 r=3.74 /><circle class=ah cx=604.2 cy=612.8 r=3.74 /><circle class=ci cx=336.4 cy=518.9 r=3.74 /><circle class=cq cx=677.5 cy=572.7 r=3.74 /><circle class=ay cx=487.5 cy=596.3 r=3.74 /><circle class=an cx=240.7 cy=459.1 r=3.74 /><circle class=bs cx=453.6 cy=582.4 r=3.75 /><circle class=co cx=407.3 cy=559.6 r=3.75 /><circle class=ak cx=542.9 cy=613.5 r=3.75 /><circle class=ah cx=595.1 cy=616.8 r=3.75 /><circle class=ak cx=521.4 cy=608.9 r=3.75 /><circle class=aj cx=564.5 cy=617.4 r=3.75 /><circle class=an cx=252.9 cy=467.3 r=3.75 /><circle class=dc cx=762.3 cy=445.4 r=3.75 /><circle class=co cx=686.8 cy=566.6 r=3.75 /><circle class=cj cx=348.7 cy=527.0 r=3.75 /><circle class=df cx=726.2 cy=513.0 r=3.75 /><circle class=ck cx=711.1 cy=536.9 r=3.75 /><circle class=dk cx=783.5 cy=401.3 r=3.75 /><circle class=de cx=741.4 cy=488.2 r=3.75 /><circle class=cq cx=419.7 cy=567.4 r=3.75 /><circle class=ay cx=499.9 cy=603.7 r=3.75 /><circle class=ao cx=265.1 cy=475.5 r=3.75 /><circle class=ai cx=586.1 cy=620.6 r=3.75 /><circle class=bt cx=466.0 cy=590.0 r=3.75 /><circle class=au cx=644.3 cy=604.8 r=3.75 /><circle class=au cx=635.1 cy=609.7 r=3.75 /><circle class=at cx=653.5 cy=599.7 r=3.75 /><circle class=ck cx=360.9 cy=535.0 r=3.75 /><circle class=cn cx=696.1 cy=560.2 r=3.75 /><circle class=ag cx=626.0 cy=614.4 r=3.75 /><circle class=bq cx=662.7 cy=594.3 r=3.75 /><circle class=dd cx=756.7 cy=462.7 r=3.75 /><circle class=bg cx=277.4 cy=483.8 r=3.75 /><circle class=ak cx=555.4 cy=620.5 r=3.75 /><circle class=ak cx=533.9 cy=616.1 r=3.75 /><circle class=ag cx=616.9 cy=618.9 r=3.75 /><circle class=db cx=777.9 cy=418.8 r=3.75 /><circle class=bp cx=672.0 cy=588.7 r=3.75 /><circle class=cr cx=432.0 cy=575.2 r=3.75 /><circle class=cl cx=373.2 cy=543.1 r=3.75 /><circle class=cj cx=720.6 cy=529.8 r=3.75 /><circle class=aj cx=577.0 cy=624.1 r=3.75 /><circle class=ax cx=478.3 cy=597.7 r=3.75 /><circle class=df cx=735.8 cy=505.3 r=3.75 /><circle class=az cx=512.3 cy=611.1 r=3.75 /><circle class=ah cx=607.8 cy=623.1 r=3.75 /><circle class=bg cx=289.6 cy=492.1 r=3.75 /><circle class=cm cx=705.6 cy=553.6 r=3.75 /><circle class=cq cx=681.3 cy=582.8 r=3.75 /><circle class=cm cx=385.5 cy=551.1 r=3.75 /><circle class=de cx=751.1 cy=480.0 r=3.75 /><circle class=cs cx=444.3 cy=583.1 r=3.75 /><circle class=ch cx=301.9 cy=500.4 r=3.75 /><circle class=dc cx=772.2 cy=436.4 r=3.75 /><circle class=w cx=598.7 cy=627.1 r=3.75 /><circle class=ak cx=546.3 cy=623.3 r=3.75 /><circle class=al cx=168.6 cy=412.1 r=3.75 /><circle class=cq cx=690.6 cy=576.7 r=3.75 /><circle class=x cx=567.9 cy=627.5 r=3.75 /><circle class=ay cx=490.7 cy=605.3 r=3.75 /><circle class=ak cx=524.8 cy=618.5 r=3.76 /><circle class=ch cx=314.2 cy=508.6 r=3.76 /><circle class=cn cx=397.9 cy=559.2 r=3.76 /><circle class=dg cx=730.2 cy=522.5 r=3.76 /><circle class=cl cx=715.0 cy=546.8 r=3.76 /><circle class=aa cx=180.9 cy=420.6 r=3.76 /><circle class=af cx=648.0 cy=615.3 r=3.76 /><circle class=ag cx=638.8 cy=620.3 r=3.76 /><circle class=au cx=657.2 cy=610.2 r=3.76 /><circle class=w cx=589.6 cy=630.9 r=3.76 /><circle class=bs cx=456.7 cy=591.0 r=3.76 /><circle class=ag cx=629.6 cy=625.0 r=3.76 /><circle class=dc cx=766.6 cy=453.9 r=3.76 /><circle class=at cx=666.4 cy=604.8 r=3.76 /><circle class=de cx=745.5 cy=497.4 r=3.76 /><circle class=co cx=700.0 cy=570.4 r=3.76 /><circle class=aa cx=193.1 cy=429.2 r=3.76 /><circle class=ch cx=326.5 cy=516.9 r=3.76 /><circle class=v cx=620.5 cy=629.4 r=3.76 /><circle class=cp cx=410.2 cy=567.3 r=3.76 /><circle class=ay cx=503.2 cy=613.0 r=3.76 /><circle class=bq cx=675.7 cy=599.1 r=3.76 /><circle class=y cx=558.9 cy=630.6 r=3.76 /><circle class=ab cx=205.4 cy=437.7 r=3.76 /><circle class=dk cx=788.0 cy=409.2 r=3.76 /><circle class=bt cx=469.1 cy=598.9 r=3.76 /><circle class=ci cx=338.9 cy=525.3 r=3.76 /><circle class=ak cx=537.3 cy=626.0 r=3.76 /><circle class=x cx=580.5 cy=634.5 r=3.76 /><circle class=w cx=611.4 cy=633.7 r=3.76 /><circle class=cj cx=724.6 cy=539.7 r=3.76 /><circle class=dd cx=760.9 cy=471.6 r=3.76 /><circle class=bq cx=685.0 cy=593.3 r=3.76 /><circle class=ab cx=217.7 cy=446.2 r=3.76 /><circle class=cn cx=709.4 cy=563.8 r=3.76 /><circle class=cq cx=422.6 cy=575.4 r=3.76 /><circle class=df cx=739.9 cy=514.8 r=3.76 /><circle class=cj cx=351.2 cy=533.6 r=3.76 /><circle class=ak cx=515.6 cy=620.7 r=3.76 /><circle class=ab cx=230.0 cy=454.7 r=3.76 /><circle class=db cx=782.3 cy=427.0 r=3.76 /><circle class=w cx=602.3 cy=637.7 r=3.76 /><circle class=ax cx=481.6 cy=606.8 r=3.76 /><circle class=bp cx=694.4 cy=587.2 r=3.76 /><circle class=cs cx=435.0 cy=583.6 r=3.76 /><circle class=y cx=571.4 cy=637.8 r=3.76 /><circle class=an cx=242.3 cy=463.3 r=3.76 /><circle class=ck cx=363.6 cy=541.9 r=3.76 /><circle class=y cx=549.8 cy=633.5 r=3.76 /><circle class=de cx=755.3 cy=489.2 r=3.76 /><circle class=ag cx=651.6 cy=626.1 r=3.76 /><circle class=u cx=642.4 cy=631.1 r=3.76 /><circle class=af cx=660.9 cy=621.0 r=3.76 /><circle class=cm cx=719.0 cy=556.9 r=3.76 /><circle class=v cx=633.2 cy=635.8 r=3.76 /><circle class=x cx=593.1 cy=641.5 r=3.76 /><circle class=dc cx=776.6 cy=444.9 r=3.76 /><circle class=an cx=254.7 cy=471.8 r=3.76 /><circle class=au cx=670.1 cy=615.5 r=3.76 /><circle class=ci cx=734.2 cy=532.3 r=3.76 /><circle class=ak cx=528.1 cy=628.4 r=3.76 /><circle class=ay cx=494.0 cy=614.7 r=3.76 /><circle class=cl cx=375.9 cy=550.3 r=3.76 /><circle class=cq cx=703.8 cy=580.8 r=3.76 /><circle class=bs cx=447.4 cy=591.7 r=3.76 /><circle class=w cx=624.1 cy=640.3 r=3.76 /><circle class=at cx=679.4 cy=609.9 r=3.76 /><circle class=ao cx=267.0 cy=480.4 r=3.77 /><circle class=df cx=749.6 cy=506.9 r=3.77 /><circle class=w cx=614.9 cy=644.5 r=3.77 /><circle class=cm cx=388.3 cy=558.6 r=3.77 /><circle class=y cx=562.3 cy=641.0 r=3.77 /><circle class=dd cx=770.9 cy=462.8 r=3.77 /><circle class=bg cx=279.4 cy=488.9 r=3.77 /><circle class=y cx=584.0 cy=645.1 r=3.77 /><circle class=at cx=688.8 cy=604.0 r=3.77 /><circle class=bs cx=459.9 cy=599.8 r=3.77 /><circle class=ak cx=506.5 cy=622.7 r=3.77 /><circle class=z cx=540.7 cy=636.1 r=3.77 /><circle class=ck cx=728.5 cy=549.8 r=3.77 /><circle class=co cx=713.3 cy=574.2 r=3.77 /><circle class=bg cx=291.7 cy=497.5 r=3.77 /><circle class=co cx=400.7 cy=567.0 r=3.77 /><circle class=q cx=605.8 cy=648.6 r=3.77 /><circle class=df cx=743.9 cy=524.6 r=3.77 /><circle class=bq cx=698.2 cy=597.9 r=3.77 /><circle class=de cx=765.1 cy=480.7 r=3.77 /><circle class=aw cx=472.3 cy=608.0 r=3.77 /><circle class=dk cx=792.4 cy=417.3 r=3.77 /><circle class=ch cx=304.1 cy=506.1 r=3.77 /><circle class=v cx=655.3 cy=637.2 r=3.77 /><circle class=v cx=646.1 cy=642.2 r=3.77 /><circle class=ag cx=664.5 cy=632.0 r=3.77 /><circle class=ak cx=519.0 cy=630.6 r=3.77 /><circle class=cp cx=413.2 cy=575.4 r=3.77 /><circle class=r cx=574.9 cy=648.5 r=3.77 /><circle class=w cx=636.9 cy=646.9 r=3.77 /><circle class=ag cx=673.8 cy=626.6 r=3.77 /><circle class=z cx=553.2 cy=643.9 r=3.77 /><circle class=ch cx=316.5 cy=514.7 r=3.77 /><circle class=q cx=596.7 cy=652.4 r=3.77 /><circle class=cn cx=722.9 cy=567.3 r=3.77 /><circle class=p cx=627.7 cy=651.4 r=3.77 /><circle class=db cx=786.7 cy=435.5 r=3.77 /><circle class=ax cx=484.8 cy=616.2 r=3.77 /><circle class=bp cx=707.7 cy=591.5 r=3.77 /><circle class=de cx=759.4 cy=498.7 r=3.77 /><circle class=af cx=683.2 cy=621.0 r=3.77 /><circle class=cr cx=425.6 cy=583.8 r=3.77 /><circle class=cj cx=738.2 cy=542.4 r=3.77 /><circle class=ch cx=328.9 cy=523.3 r=3.77 /><circle class=z cx=531.5 cy=638.6 r=3.77 /><circle class=q cx=618.5 cy=655.7 r=3.77 /><circle class=at cx=692.6 cy=615.1 r=3.77 /><circle class=ci cx=341.3 cy=531.9 r=3.77 /><circle class=br cx=438.1 cy=592.2 r=3.77 /><circle class=dc cx=780.9 cy=453.7 r=3.77 /><circle class=r cx=587.5 cy=656.0 r=3.77 /><circle class=aj cx=497.3 cy=624.4 r=3.77 /><circle class=s cx=565.8 cy=651.6 r=3.77 /><circle class=df cx=753.7 cy=516.7 r=3.77 /><circle class=cq cx=717.2 cy=584.9 r=3.77 /><circle class=al cx=169.5 cy=414.7 r=3.77 /><circle class=cj cx=353.8 cy=540.5 r=3.77 /><circle class=q cx=609.4 cy=659.7 r=3.77 /><circle class=cl cx=732.5 cy=560.2 r=3.77 /><circle class=bs cx=450.5 cy=600.6 r=3.78 /><circle class=z cx=544.1 cy=646.6 r=3.78 /><circle class=at cx=702.0 cy=608.9 r=3.78 /><circle class=v cx=658.9 cy=648.6 r=3.78 /><circle class=aa cx=181.9 cy=423.6 r=3.78 /><circle class=p cx=649.7 cy=653.5 r=3.78 /><circle class=dd cx=775.1 cy=471.9 r=3.78 /><circle class=v cx=668.2 cy=643.4 r=3.78 /><circle class=ak cx=509.8 cy=632.6 r=3.78 /><circle class=ck cx=366.2 cy=549.1 r=3.78 /><circle class=p cx=640.5 cy=658.3 r=3.78 /><circle class=aa cx=194.3 cy=432.4 r=3.78 /><circle class=u cx=677.5 cy=637.9 r=3.78 /><circle class=ci cx=747.9 cy=534.7 r=3.78 /><circle class=s cx=578.4 cy=659.4 r=3.78 /><circle class=aw cx=463.0 cy=609.0 r=3.78 /><circle class=r cx=600.2 cy=663.6 r=3.78 /><circle class=q cx=631.3 cy=662.8 r=3.78 /><circle class=ab cx=206.7 cy=441.2 r=3.78 /><circle class=cl cx=378.7 cy=557.8 r=3.78 /><circle class=ag cx=686.9 cy=632.3 r=3.78 /><circle class=de cx=769.3 cy=490.2 r=3.78 /><circle class=co cx=726.7 cy=578.1 r=3.78 /><circle class=bq cx=711.5 cy=602.6 r=3.78 /><circle class=s cx=556.7 cy=654.6 r=3.78 /><circle class=z cx=522.4 cy=640.8 r=3.78 /><circle class=ab cx=219.2 cy=450.1 r=3.78 /><circle class=cn cx=391.2 cy=566.4 r=3.78 /><circle class=k cx=622.1 cy=667.1 r=3.78 /><circle class=ax cx=475.5 cy=617.4 r=3.78 /><circle class=ab cx=231.6 cy=458.9 r=3.78 /><circle class=ck cx=742.2 cy=552.8 r=3.78 /><circle class=af cx=696.3 cy=626.4 r=3.78 /><circle class=db cx=796.8 cy=425.8 r=3.78 /><circle class=df cx=763.5 cy=508.5 r=3.78 /><circle class=an cx=244.0 cy=467.8 r=3.78 /><circle class=co cx=403.6 cy=575.1 r=3.78 /><circle class=l cx=591.1 cy=667.2 r=3.78 /><circle class=z cx=534.9 cy=649.0 r=3.78 /><circle class=aj cx=488.1 cy=625.9 r=3.78 /><circle class=s cx=569.3 cy=662.6 r=3.78 /><circle class=l cx=612.9 cy=671.2 r=3.78 /><circle class=an cx=256.5 cy=476.7 r=3.78 /><circle class=bp cx=721.0 cy=595.9 r=3.78 /><circle class=p cx=662.6 cy=660.2 r=3.78 /><circle class=dc cx=791.0 cy=444.3 r=3.78 /><circle class=p cx=653.3 cy=665.2 r=3.78 /><circle class=o cx=671.9 cy=655.0 r=3.78 /><circle class=cq cx=416.1 cy=583.7 r=3.78 /><circle class=au cx=705.7 cy=620.3 r=3.78 /><circle class=ao cx=269.0 cy=485.5 r=3.78 /><circle class=k cx=644.0 cy=669.9 r=3.78 /><circle class=cn cx=736.4 cy=570.9 r=3.78 /><circle class=df cx=757.7 cy=526.8 r=3.78 /><circle class=v cx=681.2 cy=649.5 r=3.78 /><circle class=ak cx=500.6 cy=634.4 r=3.78 /><circle class=bg cx=281.4 cy=494.4 r=3.78 /><circle class=s cx=547.5 cy=657.3 r=3.78 /><circle class=cr cx=428.6 cy=592.4 r=3.78 /><circle class=dc cx=785.2 cy=462.8 r=3.78 /><circle class=k cx=634.8 cy=674.5 r=3.78 /><circle class=l cx=603.7 cy=675.0 r=3.78 /><circle class=u cx=690.6 cy=643.9 r=3.78 /><circle class=m cx=581.9 cy=670.6 r=3.78 /><circle class=bg cx=293.9 cy=503.3 r=3.78 /><circle class=at cx=715.2 cy=613.9 r=3.78 /><circle class=br cx=441.2 cy=601.1 r=3.78 /><circle class=cj cx=751.9 cy=545.2 r=3.78 /><circle class=y cx=513.2 cy=642.8 r=3.78 /><circle class=l cx=625.6 cy=678.8 r=3.78 /><circle class=ch cx=306.4 cy=512.2 r=3.78 /><circle class=dd cx=779.3 cy=481.4 r=3.78 /><circle class=cq cx=730.6 cy=589.1 r=3.78 /><circle class=ag cx=700.0 cy=638.0 r=3.79 /><circle class=s cx=560.1 cy=665.6 r=3.79 /><circle class=ch cx=318.9 cy=521.1 r=3.79 /><circle class=bs cx=453.7 cy=609.8 r=3.79 /><circle class=z cx=525.8 cy=651.3 r=3.79 /><circle class=de cx=773.5 cy=500.0 r=3.79 /><circle class=m cx=594.6 cy=678.7 r=3.79 /><circle class=k cx=666.2 cy=672.1 r=3.79 /><circle class=ch cx=331.4 cy=530.0 r=3.79 /><circle class=cl cx=746.1 cy=563.5 r=3.79 /><circle class=k cx=656.9 cy=677.1 r=3.79 /><circle class=l cx=616.4 cy=682.9 r=3.79 /><circle class=p cx=675.5 cy=666.9 r=3.79 /><circle class=aw cx=466.2 cy=618.5 r=3.79 /><circle class=l cx=647.6 cy=681.8 r=3.79 /><circle class=bq cx=724.8 cy=607.3 r=3.79 /><circle class=af cx=709.5 cy=631.9 r=3.79 /><circle class=ci cx=343.9 cy=538.9 r=3.79 /><circle class=m cx=572.8 cy=673.8 r=3.79 /><circle class=p cx=684.8 cy=661.4 r=3.79 /><circle class=df cx=767.6 cy=518.6 r=3.79 /><circle class=s cx=538.4 cy=659.8 r=3.79 /><circle class=cj cx=356.4 cy=547.8 r=3.79 /><circle class=f cx=638.4 cy=686.4 r=3.79 /><circle class=ai cx=478.8 cy=627.2 r=3.79 /><circle class=co cx=740.3 cy=581.9 r=3.79 /><circle class=o cx=694.2 cy=655.8 r=3.79 /><circle class=g cx=607.3 cy=686.8 r=3.79 /><circle class=ck cx=368.9 cy=556.7 r=3.79 /><circle class=db cx=801.3 cy=434.6 r=3.79 /><circle class=ci cx=761.8 cy=537.2 r=3.79 /><circle class=aj cx=491.4 cy=635.9 r=3.79 /><circle class=m cx=585.4 cy=682.1 r=3.79 /><circle class=f cx=629.2 cy=690.7 r=3.79 /><circle class=au cx=719.0 cy=625.5 r=3.79 /><circle class=t cx=551.0 cy=668.3 r=3.79 /><circle class=cm cx=381.5 cy=565.6 r=3.79 /><circle class=v cx=703.7 cy=649.9 r=3.79 /><circle class=dc cx=795.4 cy=453.5 r=3.79 /><circle class=bp cx=734.4 cy=600.4 r=3.79 /><circle class=cn cx=394.0 cy=574.5 r=3.79 /><circle class=y cx=503.9 cy=644.6 r=3.79 /><circle class=k cx=669.8 cy=684.3 r=3.79 /><circle class=f cx=660.5 cy=689.3 r=3.79 /><circle class=ck cx=755.9 cy=555.9 r=3.79 /><circle class=k cx=679.1 cy=679.0 r=3.79 /><circle class=n cx=563.6 cy=676.8 r=3.79 /><circle class=g cx=620.0 cy=694.8 r=3.79 /><circle class=dd cx=789.5 cy=472.3 r=3.79 /><circle class=cp cx=406.6 cy=583.5 r=3.79 /><circle class=f cx=651.2 cy=694.0 r=3.79 /><circle class=g cx=598.1 cy=690.4 r=3.79 /><circle class=j cx=688.5 cy=673.6 r=3.79 /><circle class=z cx=516.5 cy=653.3 r=3.79 /><circle class=u cx=713.2 cy=643.7 r=3.79 /><circle class=cq cx=419.1 cy=592.4 r=3.79 /><circle class=at cx=728.6 cy=618.9 r=3.79 /><circle class=f cx=641.9 cy=698.6 r=3.79 /><circle class=de cx=783.5 cy=491.2 r=3.79 /><circle class=cn cx=750.0 cy=574.6 r=3.79 /><circle class=p cx=697.9 cy=667.9 r=3.79 /><circle class=n cx=576.2 cy=685.3 r=3.79 /><circle class=bq cx=431.7 cy=601.4 r=3.79 /><circle class=s cx=529.2 cy=662.1 r=3.79 /><circle class=de cx=777.6 cy=510.1 r=3.79 /><circle class=g cx=610.8 cy=698.7 r=3.79 /><circle class=br cx=444.3 cy=610.3 r=3.79 /><circle class=b cx=632.7 cy=702.9 r=3.79 /><circle class=aa cx=170.5 cy=417.6 r=3.79 /><circle class=cq cx=744.1 cy=593.3 r=3.79 /><circle class=af cx=722.7 cy=637.4 r=3.80 /><circle class=o cx=707.3 cy=662.0 r=3.80 /><circle class=aa cx=183.0 cy=426.8 r=3.80 /><circle class=t cx=541.8 cy=670.8 r=3.80 /><circle class=h cx=588.9 cy=693.9 r=3.80 /><circle class=f cx=673.3 cy=696.7 r=3.80 /><circle class=av cx=456.9 cy=619.3 r=3.80 /><circle class=df cx=771.7 cy=529.0 r=3.80 /><circle class=aa cx=195.6 cy=435.9 r=3.80 /><circle class=f cx=664.0 cy=701.7 r=3.80 /><circle class=f cx=682.7 cy=691.5 r=3.80 /><circle class=aa cx=208.1 cy=445.1 r=3.80 /><circle class=a cx=654.7 cy=706.5 r=3.80 /><circle class=aw cx=469.5 cy=628.2 r=3.80 /><circle class=ab cx=220.7 cy=454.3 r=3.80 /><circle class=bq cx=738.2 cy=612.0 r=3.80 /><circle class=k cx=692.1 cy=686.0 r=3.80 /><circle class=n cx=554.4 cy=679.6 r=3.80 /><circle class=b cx=623.5 cy=707.1 r=3.80 /><circle class=cj cx=765.8 cy=548.0 r=3.80 /><circle class=ab cx=233.2 cy=463.5 r=3.80 /><circle class=h cx=601.6 cy=702.4 r=3.80 /><circle class=v cx=716.9 cy=655.9 r=3.80 /><circle class=ai cx=482.1 cy=637.2 r=3.80 /><circle class=an cx=245.8 cy=472.6 r=3.80 /><circle class=b cx=645.5 cy=711.1 r=3.80 /><circle class=k cx=701.5 cy=680.3 r=3.80 /><circle class=an cx=258.4 cy=481.8 r=3.80 /><circle class=h cx=567.1 cy=688.4 r=3.80 /><circle class=cl cx=759.8 cy=566.9 r=3.80 /><circle class=x cx=494.7 cy=646.2 r=3.80 /><circle class=au cx=732.3 cy=630.7 r=3.80 /><circle class=ao cx=271.0 cy=491.0 r=3.80 /><circle class=bg cx=283.5 cy=500.2 r=3.80 /><circle class=db cx=805.6 cy=443.7 r=3.80 /><circle class=b cx=636.2 cy=715.4 r=3.80 /><circle class=b cx=614.3 cy=711.0 r=3.80 /><circle class=y cx=507.3 cy=655.2 r=3.80 /><circle class=bg cx=296.1 cy=509.4 r=3.80 /><circle class=co cx=753.9 cy=585.9 r=3.80 /><circle class=h cx=579.7 cy=697.1 r=3.80 /><circle class=a cx=676.9 cy=709.4 r=3.80 /><circle class=p cx=711.0 cy=674.4 r=3.80 /><circle class=b cx=667.6 cy=714.4 r=3.80 /><circle class=dc cx=799.7 cy=462.9 r=3.80 /><circle class=ch cx=308.7 cy=518.6 r=3.80 /><circle class=a cx=686.2 cy=704.2 r=3.80 /><circle class=u cx=726.4 cy=649.5 r=3.80 /><circle class=ch cx=321.3 cy=527.7 r=3.80 /><circle class=s cx=519.9 cy=664.2 r=3.80 /><circle class=b cx=658.3 cy=719.2 r=3.80 /><circle class=dd cx=793.7 cy=482.1 r=3.80 /><circle class=f cx=695.7 cy=698.7 r=3.80 /><circle class=ch cx=333.9 cy=536.9 r=3.80 /><circle class=bp cx=748.0 cy=604.9 r=3.80 /><circle class=c cx=592.4 cy=705.9 r=3.80 /><circle class=ci cx=346.5 cy=546.1 r=3.80 /><circle class=t cx=532.6 cy=673.2 r=3.80 /><circle class=b cx=627.0 cy=719.6 r=3.80 /><circle class=de cx=787.7 cy=501.3 r=3.80 /><circle class=b cx=649.0 cy=723.8 r=3.80 /><circle class=cj cx=359.1 cy=555.3 r=3.80 /><circle class=p cx=720.5 cy=668.3 r=3.80 /><circle class=f cx=705.1 cy=693.0 r=3.80 /><circle class=at cx=742.0 cy=623.9 r=3.80 /><circle class=cl cx=371.7 cy=564.6 r=3.80 /><circle class=n cx=545.2 cy=682.2 r=3.80 /><circle class=df cx=781.7 cy=520.5 r=3.80 /><circle class=c cx=605.1 cy=714.7 r=3.80 /><circle class=cm cx=384.3 cy=573.8 r=3.80 /><circle class=df cx=775.7 cy=539.7 r=3.80 /><circle class=co cx=396.9 cy=583.0 r=3.80 /><circle class=b cx=680.4 cy=722.3 r=3.80 /><circle class=h cx=557.9 cy=691.2 r=3.80 /><circle class=b cx=639.7 cy=728.2 r=3.80 /><circle class=b cx=671.1 cy=727.4 r=3.80 /><circle class=ag cx=736.1 cy=642.9 r=3.80 /><circle class=b cx=689.8 cy=717.1 r=3.80 /><circle class=cp cx=409.5 cy=592.2 r=3.80 /><circle class=k cx=714.6 cy=687.1 r=3.80 /><circle class=c cx=617.8 cy=723.5 r=3.80 /><circle class=ck cx=769.8 cy=559.0 r=3.80 /><circle class=b cx=661.8 cy=732.2 r=3.80 /><circle class=cr cx=422.2 cy=601.4 r=3.80 /><circle class=h cx=570.5 cy=700.2 r=3.80 /><circle class=a cx=699.2 cy=711.6 r=3.80 /><circle class=br cx=434.8 cy=610.6 r=3.80 /><circle class=cm cx=763.8 cy=578.2 r=3.80 /><circle class=v cx=730.1 cy=661.9 r=3.80 /><circle class=av cx=447.4 cy=619.8 r=3.80 /><circle class=c cx=583.2 cy=709.2 r=3.80 /><circle class=c cx=652.5 cy=736.8 r=3.80 /><circle class=c cx=630.5 cy=732.3 r=3.80 /><circle class=aw cx=460.1 cy=629.1 r=3.81 /><circle class=cq cx=757.8 cy=597.5 r=3.81 /><circle class=f cx=708.7 cy=706.0 r=3.81 /><circle class=ai cx=472.7 cy=638.3 r=3.81 /><circle class=j cx=724.1 cy=681.0 r=3.81 /><circle class=c cx=595.9 cy=718.2 r=3.81 /><circle class=b cx=683.9 cy=735.5 r=3.81 /><circle class=bq cx=751.8 cy=616.7 r=3.81 /><circle class=aj cx=485.4 cy=647.5 r=3.81 /><circle class=b cx=674.6 cy=740.6 r=3.81 /><circle class=b cx=693.3 cy=730.3 r=3.81 /><circle class=c cx=643.2 cy=741.1 r=3.81 /><circle class=y cx=498.0 cy=656.8 r=3.81 /><circle class=c cx=608.6 cy=727.2 r=3.81 /><circle class=c cx=665.2 cy=745.4 r=3.81 /><circle class=af cx=745.8 cy=636.0 r=3.81 /><circle class=s cx=510.7 cy=666.0 r=3.81 /><circle class=f cx=718.2 cy=700.1 r=3.81 /><circle class=b cx=702.7 cy=724.8 r=3.81 /><circle class=s cx=523.3 cy=675.3 r=3.81 /><circle class=c cx=621.3 cy=736.3 r=3.81 /><circle class=u cx=739.8 cy=655.3 r=3.81 /><circle class=c cx=655.9 cy=750.0 r=3.81 /><circle class=n cx=536.0 cy=684.5 r=3.81 /><circle class=dc cx=810.0 cy=453.2 r=3.81 /><circle class=a cx=712.2 cy=719.1 r=3.81 /><circle class=h cx=548.6 cy=693.7 r=3.81 /><circle class=dc cx=804.0 cy=472.7 r=3.81 /><circle class=p cx=733.7 cy=674.6 r=3.81 /><circle class=c cx=687.4 cy=749.0 r=3.81 /><circle class=c cx=634.0 cy=745.3 r=3.81 /><circle class=c cx=678.0 cy=754.0 r=3.81 /><circle class=dd cx=797.9 cy=492.2 r=3.81 /><circle class=b cx=696.8 cy=743.7 r=3.81 /><circle class=i cx=561.3 cy=703.0 r=3.81 /><circle class=de cx=791.9 cy=511.7 r=3.81 /><circle class=e cx=727.7 cy=693.9 r=3.81 /><circle class=d cx=574.0 cy=712.3 r=3.81 /><circle class=c cx=668.7 cy=758.8 r=3.81 /><circle class=df cx=785.8 cy=531.2 r=3.81 /><circle class=c cx=646.7 cy=754.4 r=3.81 /><circle class=b cx=706.2 cy=738.2 r=3.81 /><circle class=ci cx=779.8 cy=550.8 r=3.81 /><circle class=c cx=586.7 cy=721.5 r=3.81 /><circle class=cl cx=773.7 cy=570.3 r=3.81 /><circle class=a cx=721.7 cy=713.2 r=3.81 /><circle class=c cx=599.3 cy=730.8 r=3.81 /><circle class=co cx=767.7 cy=589.8 r=3.81 /><circle class=c cx=659.4 cy=763.4 r=3.81 /><circle class=c cx=690.8 cy=762.6 r=3.81 /><circle class=c cx=612.0 cy=740.0 r=3.81 /><circle class=bp cx=761.6 cy=609.4 r=3.81 /><circle class=c cx=681.5 cy=767.7 r=3.81 /><circle class=b cx=715.7 cy=732.6 r=3.81 /><circle class=c cx=700.2 cy=757.4 r=3.81 /><circle class=at cx=755.5 cy=628.9 r=3.81 /><circle class=c cx=624.7 cy=749.3 r=3.81 /><circle class=ag cx=749.5 cy=648.4 r=3.81 /><circle class=d cx=672.1 cy=772.5 r=3.81 /><circle class=c cx=637.4 cy=758.6 r=3.81 /><circle class=o cx=743.4 cy=668.0 r=3.81 /><circle class=c cx=709.7 cy=751.9 r=3.81 /><circle class=k cx=737.4 cy=687.5 r=3.81 /><circle class=d cx=650.1 cy=767.8 r=3.81 /><circle class=f cx=731.3 cy=707.1 r=3.81 /><circle class=d cx=662.8 cy=777.1 r=3.81 /><circle class=b cx=725.2 cy=726.7 r=3.81 /><circle class=c cx=719.2 cy=746.2 r=3.81 /><circle class=d cx=653.5 cy=781.5 r=3.81 /><circle class=d cx=640.9 cy=772.1 r=3.81 /><circle class=d cx=628.2 cy=762.6 r=3.81 /><circle class=d cx=615.5 cy=753.1 r=3.81 /><circle class=d cx=602.8 cy=743.6 r=3.81 /><circle class=d cx=590.1 cy=734.1 r=3.81 /><circle class=d cx=577.4 cy=724.6 r=3.81 /><circle class=d cx=564.8 cy=715.1 r=3.81 /><circle class=i cx=552.1 cy=705.6 r=3.81 /><circle class=h cx=539.4 cy=696.1 r=3.81 /><circle class=n cx=526.7 cy=686.6 r=3.81 /><circle class=s cx=514.0 cy=677.1 r=3.81 /><circle class=r cx=501.3 cy=667.7 r=3.81 /><circle class=x cx=488.7 cy=658.2 r=3.81 /><circle class=ai cx=476.0 cy=648.7 r=3.81 /><circle class=ah cx=463.3 cy=639.2 r=3.81 /><circle class=av cx=450.6 cy=629.7 r=3.81 /><circle class=br cx=437.9 cy=620.2 r=3.81 /><circle class=bq cx=425.2 cy=610.7 r=3.81 /><circle class=cq cx=412.6 cy=601.2 r=3.81 /><circle class=co cx=399.9 cy=591.7 r=3.81 /><circle class=cn cx=387.2 cy=582.2 r=3.81 /><circle class=cl cx=374.5 cy=572.7 r=3.81 /><circle class=ck cx=361.8 cy=563.2 r=3.81 /><circle class=cj cx=349.1 cy=553.7 r=3.81 /><circle class=ch cx=336.4 cy=544.2 r=3.81 /><circle class=ch cx=323.8 cy=534.8 r=3.81 /><circle class=b cx=728.7 cy=740.3 r=3.81 /><circle class=ch cx=311.1 cy=525.3 r=3.81 /><circle class=bg cx=298.4 cy=515.8 r=3.81 /><circle class=bg cx=285.7 cy=506.3 r=3.81 /><circle class=an cx=273.0 cy=496.8 r=3.81 /><circle class=an cx=260.3 cy=487.3 r=3.81 /><circle class=an cx=247.6 cy=477.8 r=3.81 /><circle class=ab cx=235.0 cy=468.3 r=3.81 /><circle class=ab cx=222.3 cy=458.8 r=3.81 /><circle class=a cx=734.8 cy=720.5 r=3.81 /><circle class=aa cx=209.6 cy=449.3 r=3.81 /><circle class=aa cx=196.9 cy=439.8 r=3.81 /><circle class=aa cx=184.2 cy=430.3 r=3.81 /><circle class=aa cx=171.5 cy=420.8 r=3.81 /><circle class=f cx=740.9 cy=700.7 r=3.81 /><circle class=p cx=747.0 cy=680.9 r=3.81 /><circle class=v cx=753.2 cy=661.1 r=3.82 /><circle class=af cx=759.3 cy=641.3 r=3.82 /><circle class=bq cx=765.4 cy=621.5 r=3.82 /><circle class=cq cx=771.5 cy=601.7 r=3.82 /><circle class=cm cx=777.6 cy=581.9 r=3.82 /><circle class=cj cx=783.7 cy=562.1 r=3.82 /><circle class=d cx=644.3 cy=785.8 r=3.82 /><circle class=df cx=789.9 cy=542.3 r=3.82 /><circle class=df cx=796.0 cy=522.5 r=3.82 /><circle class=de cx=802.1 cy=502.6 r=3.82 /><circle class=d cx=631.6 cy=776.1 r=3.82 /><circle class=dd cx=808.2 cy=482.8 r=3.82 /><circle class=dc cx=814.3 cy=463.0 r=3.82 /><circle class=b cx=738.3 cy=734.2 r=3.82 /><circle class=d cx=618.9 cy=766.3 r=3.82 /><circle class=a cx=744.5 cy=714.2 r=3.82 /><circle class=d cx=606.3 cy=756.6 r=3.82 /><circle class=k cx=750.6 cy=694.1 r=3.82 /><circle class=d cx=593.6 cy=746.9 r=3.82 /><circle class=d cx=580.9 cy=737.2 r=3.82 /><circle class=d cx=635.0 cy=789.8 r=3.82 /><circle class=o cx=756.8 cy=674.1 r=3.82 /><circle class=d cx=568.2 cy=727.5 r=3.82 /><circle class=ag cx=763.0 cy=654.0 r=3.82 /><circle class=b cx=748.0 cy=727.9 r=3.82 /><circle class=d cx=555.5 cy=717.8 r=3.82 /><circle class=d cx=622.4 cy=779.9 r=3.82 /><circle class=at cx=769.1 cy=634.0 r=3.82 /><circle class=i cx=542.8 cy=708.0 r=3.82 /><circle class=h cx=530.1 cy=698.3 r=3.82 /><circle class=f cx=754.2 cy=707.6 r=3.82 /><circle class=bp cx=775.3 cy=613.9 r=3.82 /><circle class=d cx=609.7 cy=769.9 r=3.82 /><circle class=m cx=517.4 cy=688.6 r=3.82 /><circle class=co cx=781.5 cy=593.8 r=3.82 /><circle class=s cx=504.7 cy=678.8 r=3.82 /><circle class=d cx=597.0 cy=760.0 r=3.82 /><circle class=d cx=625.8 cy=793.6 r=3.82 /><circle class=j cx=760.4 cy=687.3 r=3.82 /><circle class=cl cx=787.7 cy=573.7 r=3.82 /><circle class=y cx=492.0 cy=669.1 r=3.82 /><circle class=ci cx=793.9 cy=553.6 r=3.82 /><circle class=d cx=584.3 cy=750.1 r=3.82 /><circle class=w cx=479.3 cy=659.3 r=3.82 /><circle class=a cx=757.7 cy=721.3 r=3.82 /><circle class=v cx=766.6 cy=667.0 r=3.82 /><circle class=ah cx=466.5 cy=649.6 r=3.82 /><circle class=df cx=800.1 cy=533.5 r=3.82 /><circle class=d cx=613.1 cy=783.5 r=3.82 /><circle class=d cx=571.7 cy=740.1 r=3.82 /><circle class=av cx=453.8 cy=639.8 r=3.82 /><circle class=de cx=806.3 cy=513.4 r=3.82 /><circle class=af cx=772.9 cy=646.7 r=3.82 /><circle class=au cx=441.1 cy=630.1 r=3.82 /><circle class=e cx=764.0 cy=700.8 r=3.82 /><circle class=dd cx=812.5 cy=493.2 r=3.82 /><circle class=d cx=559.0 cy=730.2 r=3.82 /><circle class=bq cx=428.3 cy=620.3 r=3.82 /><circle class=d cx=600.5 cy=773.3 r=3.82 /><circle class=bq cx=779.1 cy=626.4 r=3.82 /><circle class=dc cx=818.7 cy=473.1 r=3.82 /><circle class=cq cx=415.6 cy=610.5 r=3.82 /><circle class=d cx=616.5 cy=797.2 r=3.83 /><circle class=d cx=546.2 cy=720.2 r=3.83 /><circle class=cp cx=402.9 cy=600.8 r=3.83 /><circle class=p cx=770.3 cy=680.2 r=3.83 /><circle class=d cx=587.8 cy=763.2 r=3.83 /><circle class=cn cx=390.1 cy=591.0 r=3.83 /><circle class=cq cx=785.3 cy=606.0 r=3.83 /><circle class=f cx=767.5 cy=714.5 r=3.83 /><circle class=h cx=533.5 cy=710.2 r=3.83 /><circle class=cm cx=377.3 cy=581.2 r=3.83 /><circle class=ck cx=364.6 cy=571.4 r=3.83 /><circle class=d cx=603.9 cy=786.9 r=3.83 /><circle class=cm cx=791.6 cy=585.6 r=3.83 /><circle class=u cx=776.5 cy=659.7 r=3.83 /><circle class=n cx=520.8 cy=700.2 r=3.83 /><circle class=d cx=575.1 cy=753.0 r=3.83 /><circle class=cj cx=351.8 cy=561.7 r=3.83 /><circle class=ci cx=339.1 cy=551.9 r=3.83 /><circle class=k cx=773.8 cy=693.7 r=3.83 /><circle class=cj cx=797.9 cy=565.2 r=3.83 /><circle class=m cx=508.1 cy=690.3 r=3.83 /><circle class=ch cx=326.3 cy=542.1 r=3.83 /><circle class=d cx=562.4 cy=742.8 r=3.83 /><circle class=au cx=782.8 cy=639.1 r=3.83 /><circle class=ch cx=313.5 cy=532.3 r=3.83 /><circle class=d cx=591.2 cy=776.5 r=3.83 /><circle class=d cx=607.3 cy=800.7 r=3.83 /><circle class=r cx=495.3 cy=680.3 r=3.83 /><circle class=df cx=804.1 cy=544.8 r=3.83 /><circle class=bg cx=300.7 cy=522.5 r=3.83 /><circle class=bg cx=287.9 cy=512.7 r=3.83 /><circle class=x cx=482.6 cy=670.3 r=3.83 /><circle class=d cx=549.7 cy=732.6 r=3.83 /><circle class=f cx=777.4 cy=707.4 r=3.83 /><circle class=v cx=780.2 cy=672.9 r=3.83 /><circle class=an cx=275.1 cy=502.9 r=3.83 /><circle class=bp cx=789.2 cy=618.5 r=3.83 /><circle class=de cx=810.4 cy=524.4 r=3.83 /><circle class=d cx=578.5 cy=766.1 r=3.83 /><circle class=an cx=262.3 cy=493.1 r=3.83 /><circle class=w cx=469.8 cy=660.3 r=3.83 /><circle class=an cx=249.5 cy=483.3 r=3.83 /><circle class=d cx=594.6 cy=790.1 r=3.83 /><circle class=de cx=816.6 cy=504.0 r=3.83 /><circle class=d cx=537.0 cy=722.4 r=3.83 /><circle class=ab cx=236.7 cy=473.5 r=3.83 /><circle class=co cx=795.5 cy=597.8 r=3.83 /><circle class=ah cx=457.0 cy=650.3 r=3.83 /><circle class=af cx=786.5 cy=652.1 r=3.83 /><circle class=ab cx=223.9 cy=463.6 r=3.83 /><circle class=dd cx=822.9 cy=483.5 r=3.83 /><circle class=d cx=565.8 cy=755.7 r=3.83 /><circle class=p cx=783.8 cy=686.4 r=3.83 /><circle class=aa cx=211.1 cy=453.8 r=3.83 /><circle class=av cx=444.3 cy=640.2 r=3.83 /><circle class=h cx=524.2 cy=712.2 r=3.83 /><circle class=aa cx=198.3 cy=444.0 r=3.83 /><circle class=d cx=598.0 cy=803.9 r=3.83 /><circle class=ck cx=801.8 cy=577.2 r=3.83 /><circle class=d cx=582.0 cy=779.5 r=3.83 /><circle class=aa cx=185.5 cy=434.2 r=3.83 /><circle class=br cx=431.5 cy=630.2 r=3.83 /><circle class=aa cx=172.6 cy=424.3 r=3.83 /><circle class=bq cx=792.9 cy=631.2 r=3.83 /><circle class=m cx=511.5 cy=702.0 r=3.83 /><circle class=d cx=553.1 cy=745.3 r=3.83 /><circle class=k cx=787.3 cy=700.1 r=3.83 /><circle class=bq cx=418.7 cy=620.2 r=3.84 /><circle class=ci cx=808.1 cy=556.5 r=3.84 /><circle class=u cx=790.2 cy=665.3 r=3.84 /><circle class=cq cx=405.9 cy=610.1 r=3.84 /><circle class=l cx=498.7 cy=691.8 r=3.84 /><circle class=d cx=569.3 cy=768.9 r=3.84 /><circle class=d cx=585.4 cy=793.1 r=3.84 /><circle class=cq cx=799.3 cy=610.3 r=3.84 /><circle class=d cx=540.4 cy=734.9 r=3.84 /><circle class=df cx=814.5 cy=535.8 r=3.84 /><circle class=co cx=393.1 cy=600.1 r=3.84 /><circle class=q cx=485.9 cy=681.5 r=3.84 /><circle class=o cx=793.8 cy=678.8 r=3.84 /><circle class=au cx=796.6 cy=644.2 r=3.84 /><circle class=cm cx=380.2 cy=590.0 r=3.84 /><circle class=de cx=820.8 cy=515.0 r=3.84 /><circle class=d cx=588.8 cy=806.9 r=3.84 /><circle class=cm cx=805.7 cy=589.4 r=3.84 /><circle class=c cx=527.6 cy=724.4 r=3.84 /><circle class=d cx=556.5 cy=758.3 r=3.84 /><circle class=w cx=473.1 cy=671.3 r=3.84 /><circle class=cl cx=367.4 cy=580.0 r=3.84 /><circle class=d cx=572.7 cy=782.3 r=3.84 /><circle class=cj cx=354.6 cy=569.9 r=3.84 /><circle class=j cx=797.4 cy=692.6 r=3.84 /><circle class=dd cx=827.2 cy=494.3 r=3.84 /><circle class=ah cx=460.3 cy=661.0 r=3.84 /><circle class=bp cx=803.1 cy=623.1 r=3.84 /><circle class=h cx=514.8 cy=714.0 r=3.84 /><circle class=cj cx=812.1 cy=568.4 r=3.84 /><circle class=af cx=800.3 cy=657.5 r=3.84 /><circle class=ci cx=341.7 cy=559.8 r=3.84 /><circle class=d cx=543.8 cy=747.6 r=3.84 /><circle class=d cx=576.1 cy=795.9 r=3.84 /><circle class=ag cx=447.5 cy=650.7 r=3.84 /><circle class=ch cx=328.9 cy=549.7 r=3.84 /><circle class=d cx=560.0 cy=771.5 r=3.84 /><circle class=m cx=502.1 cy=703.5 r=3.84 /><circle class=df cx=818.5 cy=547.4 r=3.84 /><circle class=ch cx=316.0 cy=539.7 r=3.84 /><circle class=co cx=809.5 cy=601.9 r=3.84 /><circle class=au cx=434.6 cy=640.4 r=3.84 /><circle class=u cx=803.9 cy=671.0 r=3.84 /><circle class=c cx=531.0 cy=736.9 r=3.84 /><circle class=bg cx=303.1 cy=529.6 r=3.84 /><circle class=d cx=579.5 cy=809.8 r=3.84 /><circle class=at cx=806.8 cy=636.1 r=3.84 /><circle class=r cx=489.3 cy=693.0 r=3.84 /><circle class=de cx=824.9 cy=526.4 r=3.84 /><circle class=bq cx=421.8 cy=630.1 r=3.84 /><circle class=bg cx=290.2 cy=519.4 r=3.85 /><circle class=d cx=547.2 cy=760.6 r=3.85 /><circle class=d cx=563.4 cy=784.9 r=3.85 /><circle class=o cx=807.5 cy=684.8 r=3.85 /><circle class=ck cx=816.0 cy=580.6 r=3.85 /><circle class=ao cx=277.3 cy=509.3 r=3.85 /><circle class=c cx=518.2 cy=726.3 r=3.85 /><circle class=cq cx=408.9 cy=619.8 r=3.85 /><circle class=q cx=476.4 cy=682.5 r=3.85 /><circle class=an cx=264.4 cy=499.2 r=3.85 /><circle class=dd cx=831.4 cy=505.3 r=3.85 /><circle class=au cx=810.5 cy=649.4 r=3.85 /><circle class=cq cx=813.4 cy=614.7 r=3.85 /><circle class=cp cx=396.1 cy=609.5 r=3.85 /><circle class=d cx=566.8 cy=798.6 r=3.85 /><circle class=an cx=251.5 cy=489.1 r=3.85 /><circle class=d cx=534.4 cy=749.7 r=3.85 /><circle class=ci cx=822.5 cy=559.4 r=3.85 /><circle class=w cx=463.6 cy=672.0 r=3.85 /><circle class=g cx=505.4 cy=715.6 r=3.85 /><circle class=d cx=550.6 cy=773.8 r=3.85 /><circle class=ab cx=238.6 cy=479.0 r=3.85 /><circle class=cn cx=383.2 cy=599.2 r=3.85 /><circle class=ag cx=814.2 cy=662.9 r=3.85 /><circle class=ab cx=225.6 cy=468.8 r=3.85 /><circle class=d cx=570.2 cy=812.5 r=3.85 /><circle class=cm cx=819.9 cy=593.2 r=3.85 /><circle class=ag cx=450.7 cy=661.5 r=3.85 /><circle class=bp cx=817.1 cy=627.7 r=3.85 /><circle class=cl cx=370.3 cy=588.8 r=3.85 /><circle class=df cx=829.0 cy=538.1 r=3.85 /><circle class=aa cx=212.7 cy=458.7 r=3.85 /><circle class=l cx=492.6 cy=704.8 r=3.85 /><circle class=c cx=521.7 cy=738.8 r=3.85 /><circle class=d cx=554.1 cy=787.3 r=3.85 /><circle class=v cx=817.7 cy=676.8 r=3.85 /><circle class=aa cx=199.7 cy=448.5 r=3.85 /><circle class=d cx=537.9 cy=762.7 r=3.85 /><circle class=ck cx=357.3 cy=578.5 r=3.85 /><circle class=au cx=437.8 cy=650.9 r=3.85 /><circle class=aa cx=186.8 cy=438.4 r=3.85 /><circle class=cj cx=826.5 cy=571.6 r=3.85 /><circle class=q cx=479.8 cy=694.1 r=3.85 /><circle class=de cx=835.5 cy=516.7 r=3.85 /><circle class=at cx=820.8 cy=641.0 r=3.85 /><circle class=ci cx=344.4 cy=568.1 r=3.85 /><circle class=aa cx=173.8 cy=428.2 r=3.85 /><circle class=h cx=508.8 cy=727.9 r=3.85 /><circle class=co cx=823.7 cy=606.0 r=3.85 /><circle class=at cx=424.9 cy=640.4 r=3.85 /><circle class=d cx=557.5 cy=801.0 r=3.85 /><circle class=ch cx=331.5 cy=557.7 r=3.86 /><circle class=c cx=525.1 cy=751.6 r=3.86 /><circle class=d cx=541.3 cy=776.0 r=3.86 /><circle class=w cx=466.9 cy=683.3 r=3.86 /><circle class=bq cx=412.0 cy=629.8 r=3.86 /><circle class=au cx=824.5 cy=654.6 r=3.86 /><circle class=df cx=833.0 cy=550.0 r=3.86 /><circle class=d cx=560.9 cy=814.9 r=3.86 /><circle class=ch cx=318.5 cy=547.3 r=3.86 /><circle class=g cx=496.0 cy=716.9 r=3.86 /><circle class=cq cx=827.5 cy=619.0 r=3.86 /><circle class=ck cx=830.4 cy=584.2 r=3.86 /><circle class=bh cx=305.5 cy=536.9 r=3.86 /><circle class=cq cx=399.1 cy=619.2 r=3.86 /><circle class=v cx=454.0 cy=672.5 r=3.86 /><circle class=ag cx=828.1 cy=668.4 r=3.86 /><circle class=d cx=544.7 cy=789.5 r=3.86 /><circle class=c cx=512.2 cy=740.4 r=3.86 /><circle class=de cx=839.6 cy=528.4 r=3.86 /><circle class=d cx=528.5 cy=764.6 r=3.86 /><circle class=bg cx=292.6 cy=526.5 r=3.86 /><circle class=l cx=483.1 cy=705.9 r=3.86 /><circle class=co cx=386.1 cy=608.6 r=3.86 /><circle class=ag cx=441.1 cy=661.7 r=3.86 /><circle class=bp cx=831.2 cy=632.4 r=3.86 /><circle class=ao cx=279.6 cy=516.1 r=3.86 /><circle class=d cx=548.1 cy=803.2 r=3.86 /><circle class=df cx=837.0 cy=562.3 r=3.86 /><circle class=cm cx=834.2 cy=597.0 r=3.86 /><circle class=cm cx=373.2 cy=598.0 r=3.86 /><circle class=g cx=499.4 cy=729.3 r=3.86 /><circle class=an cx=266.5 cy=505.7 r=3.86 /><circle class=q cx=470.2 cy=694.9 r=3.86 /><circle class=d cx=531.9 cy=777.9 r=3.86 /><circle class=au cx=428.1 cy=650.9 r=3.86 /><circle class=d cx=551.5 cy=817.2 r=3.86 /><circle class=at cx=834.9 cy=646.0 r=3.86 /><circle class=c cx=515.6 cy=753.3 r=3.86 /><circle class=ck cx=360.2 cy=587.3 r=3.86 /><circle class=an cx=253.5 cy=495.2 r=3.86 /><circle class=df cx=843.7 cy=540.4 r=3.87 /><circle class=co cx=838.0 cy=610.1 r=3.87 /><circle class=af cx=838.5 cy=659.8 r=3.87 /><circle class=ab cx=240.5 cy=484.8 r=3.87 /><circle class=bq cx=415.2 cy=640.1 r=3.87 /><circle class=w cx=457.3 cy=683.9 r=3.87 /><circle class=l cx=486.5 cy=718.0 r=3.87 /><circle class=cj cx=841.0 cy=574.9 r=3.87 /><circle class=cj cx=347.2 cy=576.7 r=3.87 /><circle class=d cx=535.3 cy=791.5 r=3.87 /><circle class=ab cx=227.4 cy=474.3 r=3.87 /><circle class=b cx=502.8 cy=741.9 r=3.87 /><circle class=c cx=519.0 cy=766.4 r=3.87 /><circle class=ci cx=334.1 cy=566.0 r=3.87 /><circle class=cq cx=402.2 cy=629.2 r=3.87 /><circle class=cq cx=841.8 cy=623.4 r=3.87 /><circle class=aa cx=214.3 cy=463.8 r=3.87 /><circle class=ag cx=444.3 cy=672.8 r=3.87 /><circle class=d cx=538.7 cy=805.3 r=3.87 /><circle class=k cx=473.5 cy=706.8 r=3.87 /><circle class=ck cx=844.8 cy=587.7 r=3.87 /><circle class=df cx=847.7 cy=552.7 r=3.87 /><circle class=ch cx=321.1 cy=555.3 r=3.87 /><circle class=aa cx=201.3 cy=453.4 r=3.87 /><circle class=cp cx=389.1 cy=618.4 r=3.87 /><circle class=d cx=542.1 cy=819.3 r=3.87 /><circle class=bp cx=845.5 cy=637.1 r=3.87 /><circle class=d cx=522.5 cy=779.7 r=3.87 /><circle class=g cx=489.8 cy=730.4 r=3.87 /><circle class=aa cx=188.2 cy=442.9 r=3.87 /><circle class=au cx=431.3 cy=661.8 r=3.87 /><circle class=c cx=506.2 cy=754.7 r=3.87 /><circle class=bh cx=308.0 cy=544.7 r=3.87 /><circle class=p cx=460.6 cy=695.5 r=3.87 /><circle class=cn cx=376.1 cy=607.5 r=3.87 /><circle class=aa cx=175.1 cy=432.4 r=3.87 /><circle class=at cx=849.1 cy=651.0 r=3.87 /><circle class=cm cx=848.7 cy=600.8 r=3.87 /><circle class=bg cx=295.0 cy=533.9 r=3.87 /><circle class=d cx=525.9 cy=793.3 r=3.87 /><circle class=df cx=851.7 cy=565.3 r=3.87 /><circle class=at cx=418.3 cy=650.7 r=3.87 /><circle class=l cx=476.9 cy=719.0 r=3.88 /><circle class=cl cx=363.1 cy=596.5 r=3.88 /><circle class=ao cx=281.9 cy=523.2 r=3.88 /><circle class=c cx=509.6 cy=767.9 r=3.88 /><circle class=v cx=447.6 cy=684.2 r=3.88 /><circle class=b cx=493.2 cy=743.1 r=3.88 /><circle class=co cx=852.4 cy=614.2 r=3.88 /><circle class=d cx=529.3 cy=807.1 r=3.88 /><circle class=bq cx=405.3 cy=639.6 r=3.88 /><circle class=an cx=268.7 cy=512.5 r=3.88 /><circle class=cj cx=350.0 cy=585.6 r=3.88 /><circle class=ci cx=855.6 cy=578.1 r=3.88 /><circle class=d cx=532.7 cy=821.2 r=3.88 /><circle class=cq cx=856.2 cy=627.9 r=3.88 /><circle class=q cx=463.9 cy=707.5 r=3.88 /><circle class=ag cx=434.6 cy=672.9 r=3.88 /><circle class=c cx=513.0 cy=781.3 r=3.88 /><circle class=an cx=255.6 cy=501.7 r=3.88 /><circle class=ci cx=336.9 cy=574.7 r=3.88 /><circle class=cq cx=392.2 cy=628.4 r=3.88 /><circle class=f cx=480.3 cy=731.4 r=3.88 /><circle class=b cx=496.6 cy=756.0 r=3.88 /><circle class=bp cx=859.8 cy=641.8 r=3.88 /><circle class=ab cx=242.4 cy=490.9 r=3.88 /><circle class=ck cx=859.4 cy=591.3 r=3.88 /><circle class=d cx=516.4 cy=794.9 r=3.88 /><circle class=ch cx=323.7 cy=563.7 r=3.88 /><circle class=au cx=421.5 cy=661.6 r=3.88 /><circle class=w cx=450.9 cy=695.9 r=3.88 /><circle class=co cx=379.1 cy=617.3 r=3.88 /><circle class=ab cx=229.3 cy=480.2 r=3.88 /><circle class=c cx=500.0 cy=769.2 r=3.89 /><circle class=cl cx=863.2 cy=604.7 r=3.89 /><circle class=k cx=467.2 cy=719.7 r=3.89 /><circle class=d cx=519.8 cy=808.8 r=3.89 /><circle class=bh cx=310.6 cy=552.7 r=3.89 /><circle class=aa cx=216.1 cy=469.4 r=3.89 /><circle class=b cx=483.6 cy=744.1 r=3.89 /><circle class=cm cx=366.0 cy=606.1 r=3.89 /><circle class=bq cx=408.4 cy=650.2 r=3.89 /><circle class=u cx=437.8 cy=684.4 r=3.89 /><circle class=d cx=523.2 cy=822.8 r=3.89 /><circle class=aa cx=202.9 cy=458.5 r=3.89 /><circle class=bg cx=297.4 cy=541.7 r=3.89 /><circle class=cn cx=867.0 cy=618.4 r=3.89 /><circle class=c cx=503.4 cy=782.6 r=3.89 /><circle class=ck cx=352.8 cy=594.9 r=3.89 /><circle class=p cx=454.2 cy=707.9 r=3.89 /><circle class=aa cx=189.6 cy=447.7 r=3.89 /><circle class=cq cx=395.3 cy=638.8 r=3.89 /><circle class=cq cx=870.7 cy=632.4 r=3.89 /><circle class=ao cx=284.2 cy=530.6 r=3.89 /><circle class=b cx=487.0 cy=757.1 r=3.89 /><circle class=f cx=470.6 cy=732.2 r=3.89 /><circle class=af cx=424.7 cy=672.8 r=3.89 /><circle class=c cx=506.8 cy=796.3 r=3.89 /><circle class=aa cx=176.4 cy=436.8 r=3.89 /><circle class=ci cx=339.6 cy=583.6 r=3.89 /><circle class=an cx=271.0 cy=519.6 r=3.89 /><circle class=cp cx=382.1 cy=627.4 r=3.89 /><circle class=v cx=441.1 cy=696.1 r=3.89 /><circle class=d cx=510.3 cy=810.2 r=3.90 /><circle class=b cx=490.4 cy=770.3 r=3.90 /><circle class=at cx=411.6 cy=661.1 r=3.90 /><circle class=an cx=257.7 cy=508.5 r=3.90 /><circle class=ch cx=326.4 cy=572.4 r=3.90 /><circle class=k cx=457.5 cy=720.2 r=3.90 /><circle class=f cx=474.0 cy=744.9 r=3.90 /><circle class=d cx=513.7 cy=824.3 r=3.90 /><circle class=cn cx=368.9 cy=615.9 r=3.90 /><circle class=ab cx=244.5 cy=497.4 r=3.90 /><circle class=c cx=493.8 cy=783.8 r=3.90 /><circle class=bh cx=313.2 cy=561.1 r=3.90 /><circle class=ag cx=428.0 cy=684.3 r=3.90 /><circle class=bp cx=398.4 cy=649.5 r=3.90 /><circle class=ab cx=231.2 cy=486.3 r=3.90 /><circle class=cl cx=355.7 cy=604.4 r=3.90 /><circle class=b cx=477.4 cy=757.9 r=3.90 /><circle class=p cx=444.4 cy=708.1 r=3.90 /><circle class=c cx=497.2 cy=797.5 r=3.90 /><circle class=bg cx=299.9 cy=549.8 r=3.90 /><circle class=l cx=460.9 cy=732.7 r=3.90 /><circle class=aa cx=217.9 cy=475.2 r=3.90 /><circle class=cq cx=385.2 cy=637.8 r=3.90 /><circle class=au cx=414.8 cy=672.4 r=3.90 /><circle class=cj cx=342.5 cy=592.9 r=3.90 /><circle class=d cx=500.7 cy=811.4 r=3.90 /><circle class=ao cx=286.6 cy=538.4 r=3.91 /><circle class=b cx=480.8 cy=771.2 r=3.91 /><circle class=aa cx=204.5 cy=464.0 r=3.91 /><circle class=v cx=431.2 cy=696.0 r=3.91 /><circle class=d cx=504.1 cy=825.6 r=3.91 /><circle class=f cx=464.2 cy=745.5 r=3.91 /><circle class=p cx=447.7 cy=720.4 r=3.91 /><circle class=cn cx=371.9 cy=626.1 r=3.91 /><circle class=an cx=273.3 cy=527.1 r=3.91 /><circle class=ch cx=329.2 cy=581.3 r=3.91 /><circle class=bq cx=401.6 cy=660.5 r=3.91 /><circle class=aa cx=191.2 cy=452.9 r=3.91 /><circle class=c cx=484.2 cy=784.7 r=3.91 /><circle class=aa cx=177.8 cy=441.7 r=3.91 /><circle class=an cx=260.0 cy=515.7 r=3.91 /><circle class=af cx=418.0 cy=683.9 r=3.91 /><circle class=bh cx=315.9 cy=569.8 r=3.91 /><circle class=cl cx=358.7 cy=614.3 r=3.91 /><circle class=a cx=467.6 cy=758.6 r=3.91 /><circle class=c cx=487.6 cy=798.5 r=3.91 /><circle class=cq cx=388.3 cy=648.5 r=3.91 /><circle class=v cx=434.5 cy=708.1 r=3.91 /><circle class=k cx=451.1 cy=733.0 r=3.91 /><circle class=ab cx=246.6 cy=504.3 r=3.91 /><circle class=c cx=491.0 cy=812.5 r=3.92 /><circle class=bg cx=302.5 cy=558.2 r=3.92 /><circle class=ck cx=345.3 cy=602.5 r=3.92 /><circle class=b cx=471.0 cy=771.9 r=3.92 /><circle class=at cx=404.7 cy=671.8 r=3.92 /><circle class=d cx=494.4 cy=826.7 r=3.92 /><circle class=ab cx=233.2 cy=492.8 r=3.92 /><circle class=cp cx=375.0 cy=636.5 r=3.92 /><circle class=f cx=454.4 cy=745.9 r=3.92 /><circle class=ag cx=421.3 cy=695.8 r=3.92 /><circle class=ao cx=289.1 cy=546.5 r=3.92 /><circle class=p cx=437.8 cy=720.5 r=3.92 /><circle class=b cx=474.4 cy=785.5 r=3.92 /><circle class=ci cx=332.0 cy=590.7 r=3.92 /><circle class=aa cx=219.7 cy=481.4 r=3.92 /><circle class=bp cx=391.4 cy=659.6 r=3.92 /><circle class=cm cx=361.6 cy=624.5 r=3.92 /><circle class=an cx=275.7 cy=534.9 r=3.92 /><circle class=c cx=477.8 cy=799.3 r=3.92 /><circle class=f cx=457.8 cy=759.0 r=3.92 /><circle class=aa cx=206.3 cy=469.9 r=3.92 /><circle class=bh cx=318.6 cy=578.8 r=3.92 /><circle class=au cx=408.0 cy=683.4 r=3.92 /><circle class=k cx=441.2 cy=733.1 r=3.93 /><circle class=v cx=424.6 cy=707.9 r=3.93 /><circle class=c cx=481.3 cy=813.3 r=3.93 /><circle class=an cx=262.2 cy=523.2 r=3.93 /><circle class=aa cx=192.8 cy=458.4 r=3.93 /><circle class=ck cx=348.2 cy=612.4 r=3.93 /><circle class=cq cx=378.1 cy=647.3 r=3.93 /><circle class=b cx=461.2 cy=772.4 r=3.93 /><circle class=d cx=484.7 cy=827.6 r=3.93 /><circle class=bh cx=305.1 cy=566.9 r=3.93 /><circle class=aa cx=179.2 cy=446.9 r=3.93 /><circle class=ab cx=248.7 cy=511.4 r=3.93 /><circle class=bq cx=394.6 cy=670.9 r=3.93 /><circle class=k cx=444.5 cy=746.0 r=3.93 /><circle class=b cx=464.6 cy=786.0 r=3.93 /><circle class=cj cx=334.8 cy=600.3 r=3.93 /><circle class=ag cx=411.2 cy=695.2 r=3.93 /><circle class=o cx=427.9 cy=720.3 r=3.93 /><circle class=cn cx=364.7 cy=635.0 r=3.93 /><circle class=ao cx=291.6 cy=555.0 r=3.93 /><circle class=ab cx=235.2 cy=499.7 r=3.93 /><circle class=b cx=468.0 cy=799.9 r=3.93 /><circle class=f cx=447.9 cy=759.2 r=3.94 /><circle class=bp cx=381.2 cy=658.4 r=3.94 /><circle class=bh cx=321.3 cy=588.2 r=3.94 /><circle class=ao cx=278.1 cy=543.0 r=3.94 /><circle class=aa cx=221.7 cy=487.9 r=3.94 /><circle class=cl cx=351.2 cy=622.7 r=3.94 /><circle class=c cx=471.5 cy=814.0 r=3.94 /><circle class=p cx=431.2 cy=733.0 r=3.94 /><circle class=at cx=397.8 cy=682.5 r=3.94 /><circle class=u cx=414.5 cy=707.4 r=3.94 /><circle class=c cx=474.9 cy=828.3 r=3.94 /><circle class=a cx=451.3 cy=772.6 r=3.94 /><circle class=aa cx=208.1 cy=476.1 r=3.94 /><circle class=an cx=264.6 cy=531.0 r=3.94 /><circle class=bh cx=307.8 cy=576.0 r=3.94 /><circle class=co cx=367.7 cy=645.8 r=3.94 /><circle class=bj cx=337.7 cy=610.3 r=3.94 /><circle class=k cx=434.6 cy=745.9 r=3.94 /><circle class=b cx=454.7 cy=786.3 r=3.94 /><circle class=aa cx=194.4 cy=464.3 r=3.94 /><circle class=bq cx=384.3 cy=669.8 r=3.94 /><circle class=ab cx=251.0 cy=519.0 r=3.95 /><circle class=v cx=417.8 cy=719.9 r=3.95 /><circle class=af cx=401.0 cy=694.5 r=3.95 /><circle class=ao cx=294.2 cy=563.7 r=3.95 /><circle class=b cx=458.1 cy=800.2 r=3.95 /><circle class=cm cx=354.2 cy=633.2 r=3.95 /><circle class=bi cx=324.1 cy=597.9 r=3.95 /><circle class=aa cx=180.8 cy=452.4 r=3.95 /><circle class=f cx=437.9 cy=759.2 r=3.95 /><circle class=ab cx=237.3 cy=506.9 r=3.95 /><circle class=c cx=461.6 cy=814.4 r=3.95 /><circle class=ao cx=280.6 cy=551.5 r=3.95 /><circle class=cq cx=370.8 cy=657.0 r=3.95 /><circle class=p cx=421.1 cy=732.6 r=3.95 /><circle class=c cx=465.0 cy=828.8 r=3.95 /><circle class=at cx=387.5 cy=681.5 r=3.95 /><circle class=a cx=441.3 cy=772.7 r=3.95 /><circle class=ag cx=404.3 cy=706.7 r=3.95 /><circle class=bh cx=310.5 cy=585.4 r=3.95 /><circle class=bk cx=340.6 cy=620.6 r=3.95 /><circle class=aa cx=223.7 cy=494.8 r=3.95 /><circle class=an cx=267.0 cy=539.2 r=3.96 /><circle class=b cx=444.7 cy=786.4 r=3.96 /><circle class=j cx=424.5 cy=745.6 r=3.96 /><circle class=cn cx=357.3 cy=644.1 r=3.96 /><circle class=aa cx=209.9 cy=482.6 r=3.96 /><circle class=ao cx=296.9 cy=572.9 r=3.96 /><circle class=bi cx=327.0 cy=607.9 r=3.96 /><circle class=u cx=407.6 cy=719.2 r=3.96 /><circle class=bp cx=374.0 cy=668.4 r=3.96 /><circle class=b cx=448.2 cy=800.4 r=3.96 /><circle class=ab cx=253.3 cy=526.8 r=3.96 /><circle class=at cx=390.8 cy=693.5 r=3.96 /><circle class=k cx=427.8 cy=758.9 r=3.96 /><circle class=aa cx=196.2 cy=470.5 r=3.96 /><circle class=b cx=451.6 cy=814.7 r=3.96 /><circle class=bl cx=343.6 cy=631.2 r=3.96 /><circle class=ao cx=283.2 cy=560.3 r=3.96 /><circle class=ab cx=239.5 cy=514.4 r=3.96 /><circle class=c cx=455.1 cy=829.1 r=3.96 /><circle class=bh cx=313.3 cy=595.1 r=3.96 /><circle class=o cx=410.9 cy=732.0 r=3.97 /><circle class=f cx=431.2 cy=772.5 r=3.97 /><circle class=aa cx=182.4 cy=458.2 r=3.97 /><circle class=co cx=360.3 cy=655.3 r=3.97 /><circle class=af cx=394.0 cy=705.8 r=3.97 /><circle class=bq cx=377.2 cy=680.2 r=3.97 /><circle class=an cx=269.4 cy=547.7 r=3.97 /><circle class=aa cx=225.7 cy=502.0 r=3.97 /><circle class=a cx=434.7 cy=786.3 r=3.97 /><circle class=bj cx=329.9 cy=618.2 r=3.97 /><circle class=p cx=414.3 cy=745.1 r=3.97 /><circle class=ap cx=299.6 cy=582.3 r=3.97 /><circle class=b cx=438.1 cy=800.4 r=3.97 /><circle class=bm cx=346.6 cy=642.1 r=3.97 /><circle class=ag cx=397.3 cy=718.4 r=3.97 /><circle class=aa cx=211.9 cy=489.5 r=3.97 /><circle class=ac cx=255.6 cy=535.0 r=3.97 /><circle class=cq cx=363.5 cy=666.8 r=3.97 /><circle class=at cx=380.4 cy=692.2 r=3.98 /><circle class=k cx=417.7 cy=758.5 r=3.98 /><circle class=b cx=441.5 cy=814.7 r=3.98 /><circle class=bh cx=316.2 cy=605.2 r=3.98 /><circle class=ao cx=285.8 cy=569.4 r=3.98 /><circle class=c cx=445.0 cy=829.2 r=3.98 /><circle class=aa cx=198.0 cy=477.0 r=3.98 /><circle class=v cx=400.6 cy=731.2 r=3.98 /><circle class=ab cx=241.8 cy=522.3 r=3.98 /><circle class=f cx=421.1 cy=772.1 r=3.98 /><circle class=bk cx=332.9 cy=628.9 r=3.98 /><circle class=au cx=383.6 cy=704.6 r=3.98 /><circle class=bn cx=349.7 cy=653.4 r=3.98 /><circle class=an cx=271.9 cy=556.5 r=3.98 /><circle class=ap cx=302.3 cy=592.1 r=3.98 /><circle class=bp cx=366.6 cy=678.6 r=3.98 /><circle class=f cx=424.5 cy=786.0 r=3.98 /><circle class=aa cx=184.1 cy=464.5 r=3.98 /><circle class=aa cx=227.9 cy=509.6 r=3.99 /><circle class=o cx=404.0 cy=744.4 r=3.99 /><circle class=bi cx=319.1 cy=615.6 r=3.99 /><circle class=a cx=427.9 cy=800.1 r=3.99 /><circle class=ac cx=258.0 cy=543.6 r=3.99 /><circle class=af cx=386.9 cy=717.2 r=3.99 /><circle class=ao cx=288.5 cy=578.9 r=3.99 /><circle class=bl cx=335.9 cy=639.9 r=3.99 /><circle class=b cx=431.4 cy=814.5 r=3.99 /><circle class=p cx=407.4 cy=757.8 r=3.99 /><circle class=aa cx=213.9 cy=496.8 r=3.99 /><circle class=bq cx=369.8 cy=690.7 r=3.99 /><circle class=bo cx=352.8 cy=664.9 r=3.99 /><circle class=c cx=434.8 cy=829.1 r=3.99 /><circle class=ap cx=305.2 cy=602.2 r=3.99 /><circle class=ab cx=244.1 cy=530.6 r=3.99 /><circle class=k cx=410.8 cy=771.5 r=3.99 /><circle class=u cx=390.2 cy=730.2 r=3.99 /><circle class=ao cx=274.5 cy=565.7 r=4.00 /><circle class=aa cx=199.9 cy=483.9 r=4.00 /><circle class=bj cx=322.0 cy=626.3 r=4.00 /><circle class=at cx=373.1 cy=703.2 r=4.00 /><circle class=f cx=414.2 cy=785.4 r=4.00 /><circle class=bm cx=338.9 cy=651.2 r=4.00 /><circle class=bp cx=356.0 cy=676.8 r=4.00 /><circle class=aa cx=230.1 cy=517.5 r=4.00 /><circle class=v cx=393.6 cy=743.4 r=4.00 /><circle class=ao cx=291.2 cy=588.8 r=4.00 /><circle class=aa cx=185.8 cy=471.0 r=4.00 /><circle class=a cx=417.6 cy=799.6 r=4.00 /><circle class=ac cx=260.5 cy=552.5 r=4.00 /><circle class=au cx=376.4 cy=715.9 r=4.00 /><circle class=b cx=421.1 cy=814.1 r=4.00 /><circle class=ap cx=308.0 cy=612.7 r=4.01 /><circle class=p cx=396.9 cy=756.9 r=4.01 /><circle class=aa cx=216.0 cy=504.4 r=4.01 /><circle class=bp cx=359.2 cy=689.0 r=4.01 /><circle class=b cx=424.5 cy=828.8 r=4.01 /><circle class=bj cx=325.0 cy=637.3 r=4.01 /><circle class=bn cx=342.0 cy=662.8 r=4.01 /><circle class=ao cx=277.2 cy=575.3 r=4.01 /><circle class=ab cx=246.5 cy=539.1 r=4.01 /><circle class=j cx=400.3 cy=770.6 r=4.01 /><circle class=af cx=379.7 cy=728.9 r=4.01 /><circle class=aa cx=201.9 cy=491.2 r=4.01 /><circle class=ap cx=294.0 cy=598.9 r=4.01 /><circle class=e cx=403.8 cy=784.6 r=4.01 /><circle class=bq cx=362.4 cy=701.5 r=4.01 /><circle class=ab cx=232.3 cy=525.8 r=4.02 /><circle class=ac cx=263.1 cy=561.7 r=4.02 /><circle class=aq cx=310.9 cy=623.4 r=4.02 /><circle class=u cx=383.0 cy=742.1 r=4.02 /><circle class=bo cx=345.2 cy=674.7 r=4.02 /><circle class=bk cx=328.0 cy=648.7 r=4.02 /><circle class=f cx=407.2 cy=798.9 r=4.02 /><circle class=aa cx=187.7 cy=478.0 r=4.02 /><circle class=a cx=410.7 cy=813.4 r=4.02 /><circle class=ao cx=279.9 cy=585.2 r=4.02 /><circle class=at cx=365.7 cy=714.2 r=4.02 /><circle class=v cx=386.4 cy=755.7 r=4.02 /><circle class=aa cx=218.2 cy=512.3 r=4.02 /><circle class=ab cx=248.9 cy=548.1 r=4.02 /><circle class=b cx=414.2 cy=828.2 r=4.02 /><circle class=ap cx=296.8 cy=609.4 r=4.02 /><circle class=bp cx=348.4 cy=687.0 r=4.02 /><circle class=aq cx=313.9 cy=634.5 r=4.03 /><circle class=bl cx=331.1 cy=660.4 r=4.03 /><circle class=p cx=389.8 cy=769.5 r=4.03 /><circle class=af cx=369.0 cy=727.3 r=4.03 /><circle class=ac cx=265.7 cy=571.3 r=4.03 /><circle class=aa cx=203.9 cy=498.8 r=4.03 /><circle class=ab cx=234.7 cy=534.4 r=4.03 /><circle class=k cx=393.2 cy=783.6 r=4.03 /><circle class=bp cx=351.6 cy=699.5 r=4.03 /><circle class=ao cx=282.6 cy=595.4 r=4.03 /><circle class=ag cx=372.3 cy=740.7 r=4.03 /><circle class=f cx=396.7 cy=798.0 r=4.03 /><circle class=bn cx=334.2 cy=672.4 r=4.03 /><circle class=ap cx=299.7 cy=620.3 r=4.03 /><circle class=aa cx=189.6 cy=485.3 r=4.04 /><circle class=ar cx=316.9 cy=646.0 r=4.04 /><circle class=ac cx=251.4 cy=557.4 r=4.04 /><circle class=a cx=400.1 cy=812.6 r=4.04 /><circle class=aa cx=220.4 cy=520.6 r=4.04 /><circle class=u cx=375.7 cy=754.3 r=4.04 /><circle class=bq cx=354.9 cy=712.4 r=4.04 /><circle class=b cx=403.6 cy=827.4 r=4.04 /><circle class=ad cx=268.4 cy=581.2 r=4.04 /><circle class=bo cx=337.4 cy=684.7 r=4.04 /><circle class=o cx=379.1 cy=768.2 r=4.04 /><circle class=ao cx=285.5 cy=605.9 r=4.04 /><circle class=ab cx=237.1 cy=543.4 r=4.04 /><circle class=aa cx=206.0 cy=506.8 r=4.04 /><circle class=as cx=320.0 cy=657.7 r=4.04 /><circle class=ap cx=302.7 cy=631.4 r=4.04 /><circle class=at cx=358.2 cy=725.5 r=4.04 /><circle class=p cx=382.5 cy=782.4 r=4.05 /><circle class=ac cx=254.0 cy=567.0 r=4.05 /><circle class=bp cx=340.6 cy=697.3 r=4.05 /><circle class=k cx=386.0 cy=796.8 r=4.05 /><circle class=af cx=361.5 cy=738.9 r=4.05 /><circle class=aa cx=191.6 cy=492.9 r=4.05 /><circle class=aa cx=222.7 cy=529.3 r=4.05 /><circle class=ad cx=271.1 cy=591.5 r=4.05 /><circle class=bl cx=323.1 cy=669.8 r=4.05 /><circle class=f cx=389.5 cy=811.5 r=4.05 /><circle class=ap cx=288.3 cy=616.8 r=4.05 /><circle class=aq cx=305.7 cy=642.9 r=4.05 /><circle class=ag cx=364.9 cy=752.6 r=4.06 /><circle class=a cx=393.0 cy=826.4 r=4.06 /><circle class=bp cx=343.9 cy=710.2 r=4.06 /><circle class=ab cx=239.6 cy=552.7 r=4.06 /><circle class=aa cx=208.2 cy=515.1 r=4.06 /><circle class=v cx=368.3 cy=766.6 r=4.06 /><circle class=bn cx=326.3 cy=682.2 r=4.06 /><circle class=ac cx=256.7 cy=577.0 r=4.06 /><circle class=bq cx=347.2 cy=723.5 r=4.06 /><circle class=ar cx=308.7 cy=654.8 r=4.06 /><circle class=ad cx=273.9 cy=602.1 r=4.06 /><circle class=ap cx=291.3 cy=628.1 r=4.06 /><circle class=o cx=371.7 cy=780.9 r=4.06 /><circle class=aa cx=225.1 cy=538.3 r=4.07 /><circle class=aa cx=193.6 cy=500.9 r=4.07 /><circle class=j cx=375.2 cy=795.4 r=4.07 /><circle class=bo cx=329.5 cy=694.9 r=4.07 /><circle class=at cx=350.5 cy=737.0 r=4.07 /><circle class=ab cx=242.1 cy=562.4 r=4.07 /><circle class=e cx=378.7 cy=810.2 r=4.07 /><circle class=as cx=311.9 cy=666.9 r=4.07 /><circle class=ac cx=259.4 cy=587.3 r=4.07 /><circle class=f cx=382.2 cy=825.2 r=4.07 /><circle class=af cx=353.9 cy=750.7 r=4.07 /><circle class=aa cx=210.5 cy=523.8 r=4.07 /><circle class=ap cx=294.3 cy=639.6 r=4.07 /><circle class=ad cx=276.7 cy=613.1 r=4.07 /><circle class=bp cx=332.8 cy=707.8 r=4.08 /><circle class=ag cx=357.3 cy=764.8 r=4.08 /><circle class=ab cx=227.5 cy=547.7 r=4.08 /><circle class=bl cx=315.0 cy=679.3 r=4.08 /><circle class=bp cx=336.1 cy=721.1 r=4.08 /><circle class=aa cx=195.8 cy=509.3 r=4.08 /><circle class=v cx=360.8 cy=779.2 r=4.08 /><circle class=ab cx=244.7 cy=572.4 r=4.08 /><circle class=aq cx=297.3 cy=651.5 r=4.08 /><circle class=ad cx=262.1 cy=598.0 r=4.09 /><circle class=ae cx=279.7 cy=624.4 r=4.09 /><circle class=p cx=364.2 cy=793.8 r=4.09 /><circle class=bq cx=339.4 cy=734.7 r=4.09 /><circle class=bm cx=318.2 cy=692.1 r=4.09 /><circle class=aa cx=212.8 cy=532.9 r=4.09 /><circle class=k cx=367.7 cy=808.6 r=4.09 /><circle class=f cx=371.3 cy=823.7 r=4.09 /><circle class=ar cx=300.4 cy=663.7 r=4.09 /><circle class=ab cx=230.0 cy=557.4 r=4.09 /><circle class=at cx=342.8 cy=748.6 r=4.09 /><circle class=bo cx=321.5 cy=705.2 r=4.10 /><circle class=ae cx=282.6 cy=636.0 r=4.10 /><circle class=ac cx=247.4 cy=582.8 r=4.10 /><circle class=ad cx=265.0 cy=609.0 r=4.10 /><circle class=af cx=346.2 cy=762.7 r=4.10 /><circle class=aa cx=198.0 cy=518.0 r=4.10 /><circle class=as cx=303.5 cy=676.2 r=4.10 /><circle class=cq cx=324.8 cy=718.5 r=4.10 /><circle class=u cx=349.6 cy=777.2 r=4.10 /><circle class=aa cx=215.2 cy=542.3 r=4.10 /><circle class=ap cx=285.7 cy=647.9 r=4.10 /><circle class=v cx=353.1 cy=791.9 r=4.11 /><circle class=ab cx=232.6 cy=567.5 r=4.11 /><circle class=ad cx=267.9 cy=620.4 r=4.11 /><circle class=ac cx=250.2 cy=593.5 r=4.11 /><circle class=bp cx=328.1 cy=732.2 r=4.11 /><circle class=bl cx=306.7 cy=689.1 r=4.11 /><circle class=p cx=356.6 cy=806.8 r=4.11 /><circle class=k cx=360.2 cy=822.0 r=4.11 /><circle class=aa cx=200.3 cy=527.1 r=4.11 /><circle class=bq cx=331.5 cy=746.2 r=4.11 /><circle class=ap cx=288.7 cy=660.2 r=4.11 /><circle class=bm cx=310.0 cy=702.2 r=4.12 /><circle class=aa cx=217.7 cy=552.1 r=4.12 /><circle class=ad cx=270.8 cy=632.1 r=4.12 /><circle class=au cx=334.9 cy=760.4 r=4.12 /><circle class=ab cx=235.2 cy=578.0 r=4.12 /><circle class=ac cx=253.0 cy=604.6 r=4.12 /><circle class=aq cx=291.9 cy=672.8 r=4.12 /><circle class=af cx=338.4 cy=774.9 r=4.12 /><circle class=co cx=313.3 cy=715.7 r=4.12 /><circle class=u cx=341.8 cy=789.7 r=4.13 /><circle class=ae cx=273.8 cy=644.1 r=4.13 /><circle class=aa cx=202.6 cy=536.6 r=4.13 /><circle class=cq cx=316.6 cy=729.4 r=4.13 /><circle class=o cx=345.4 cy=804.8 r=4.13 /><circle class=ad cx=255.8 cy=616.0 r=4.13 /><circle class=aa cx=220.2 cy=562.3 r=4.13 /><circle class=bj cx=295.1 cy=685.8 r=4.13 /><circle class=ab cx=238.0 cy=588.7 r=4.13 /><circle class=j cx=348.9 cy=820.1 r=4.13 /><circle class=bp cx=320.0 cy=743.5 r=4.13 /><circle class=ap cx=276.9 cy=656.4 r=4.14 /><circle class=bl cx=298.3 cy=699.0 r=4.14 /><circle class=bq cx=323.4 cy=757.8 r=4.14 /><circle class=ad cx=258.8 cy=627.8 r=4.14 /><circle class=aa cx=205.1 cy=546.4 r=4.14 /><circle class=ac cx=240.7 cy=599.9 r=4.14 /><circle class=ab cx=222.8 cy=572.8 r=4.14 /><circle class=au cx=326.9 cy=772.4 r=4.14 /><circle class=cm cx=301.6 cy=712.5 r=4.14 /><circle class=ap cx=280.0 cy=669.1 r=4.14 /><circle class=af cx=330.4 cy=787.3 r=4.15 /><circle class=ad cx=261.8 cy=639.9 r=4.15 /><circle class=co cx=304.9 cy=726.4 r=4.15 /><circle class=u cx=333.9 cy=802.5 r=4.15 /><circle class=bi cx=283.2 cy=682.1 r=4.15 /><circle class=o cx=337.5 cy=817.9 r=4.15 /><circle class=ac cx=243.6 cy=611.4 r=4.15 /><circle class=aa cx=207.6 cy=556.6 r=4.15 /><circle class=ab cx=225.5 cy=583.6 r=4.15 /><circle class=cq cx=308.3 cy=740.5 r=4.16 /><circle class=ap cx=264.8 cy=652.3 r=4.16 /><circle class=bj cx=286.4 cy=695.5 r=4.16 /><circle class=bp cx=311.7 cy=754.9 r=4.16 /><circle class=ac cx=246.5 cy=623.2 r=4.16 /><circle class=at cx=315.2 cy=769.7 r=4.16 /><circle class=ab cx=228.3 cy=594.8 r=4.17 /><circle class=ck cx=289.7 cy=709.1 r=4.17 /><circle class=aa cx=210.2 cy=567.2 r=4.17 /><circle class=ap cx=267.9 cy=665.1 r=4.17 /><circle class=au cx=318.7 cy=784.6 r=4.17 /><circle class=ag cx=322.3 cy=799.9 r=4.17 /><circle class=cm cx=293.1 cy=723.0 r=4.17 /><circle class=ad cx=249.5 cy=635.4 r=4.17 /><circle class=v cx=325.9 cy=815.4 r=4.17 /><circle class=bh cx=271.1 cy=678.2 r=4.18 /><circle class=ab cx=231.1 cy=606.4 r=4.18 /><circle class=co cx=296.4 cy=737.3 r=4.18 /><circle class=aa cx=212.8 cy=578.1 r=4.18 /><circle class=ao cx=252.5 cy=647.9 r=4.18 /><circle class=bi cx=274.3 cy=691.6 r=4.18 /><circle class=cq cx=299.9 cy=751.8 r=4.18 /><circle class=ac cx=234.0 cy=618.3 r=4.19 /><circle class=bp cx=303.4 cy=766.6 r=4.19 /><circle class=cj cx=277.6 cy=705.3 r=4.19 /><circle class=ao cx=255.6 cy=660.8 r=4.19 /><circle class=ab cx=215.6 cy=589.4 r=4.19 /><circle class=at cx=306.9 cy=781.7 r=4.19 /><circle class=au cx=310.5 cy=797.1 r=4.19 /><circle class=ck cx=281.0 cy=719.4 r=4.20 /><circle class=ag cx=314.1 cy=812.7 r=4.20 /><circle class=ac cx=237.0 cy=630.6 r=4.20 /><circle class=bh cx=258.8 cy=674.0 r=4.20 /><circle class=cm cx=284.4 cy=733.7 r=4.20 /><circle class=ab cx=218.4 cy=601.1 r=4.20 /><circle class=co cx=287.8 cy=748.4 r=4.21 /><circle class=bh cx=262.0 cy=687.5 r=4.21 /><circle class=ao cx=240.0 cy=643.2 r=4.21 /><circle class=cq cx=291.3 cy=763.3 r=4.21 /><circle class=ab cx=221.3 cy=613.1 r=4.21 /><circle class=ci cx=265.3 cy=701.3 r=4.21 /><circle class=bp cx=294.8 cy=778.5 r=4.22 /><circle class=ao cx=243.1 cy=656.1 r=4.22 /><circle class=at cx=298.4 cy=794.0 r=4.22 /><circle class=cj cx=268.7 cy=715.4 r=4.22 /><circle class=af cx=302.0 cy=809.7 r=4.22 /><circle class=ac cx=224.2 cy=625.4 r=4.22 /><circle class=bg cx=246.3 cy=669.4 r=4.22 /><circle class=ck cx=272.0 cy=729.9 r=4.23 /><circle class=cm cx=275.5 cy=744.6 r=4.23 /><circle class=bh cx=249.5 cy=683.0 r=4.23 /><circle class=an cx=227.2 cy=638.1 r=4.23 /><circle class=co cx=279.0 cy=759.6 r=4.24 /><circle class=ch cx=252.8 cy=696.9 r=4.24 /><circle class=cq cx=282.5 cy=775.0 r=4.24 /><circle class=an cx=230.3 cy=651.1 r=4.24 /><circle class=bp cx=286.1 cy=790.6 r=4.24 /><circle class=ch cx=256.1 cy=711.2 r=4.25 /><circle class=at cx=289.8 cy=806.4 r=4.25 /><circle class=bg cx=233.5 cy=664.5 r=4.25 /><circle class=cj cx=259.5 cy=725.7 r=4.25 /><circle class=ck cx=263.0 cy=740.6 r=4.26 /><circle class=cg cx=236.7 cy=678.2 r=4.26 /><circle class=cm cx=266.5 cy=755.7 r=4.26 /><circle class=ch cx=240.0 cy=692.2 r=4.27 /><circle class=co cx=270.0 cy=771.2 r=4.27 /><circle class=cq cx=273.6 cy=786.9 r=4.27 /><circle class=bp cx=277.3 cy=802.9 r=4.27 /><circle class=ch cx=243.3 cy=706.6 r=4.27 /><circle class=df cx=246.7 cy=721.2 r=4.28 /><circle class=ci cx=250.2 cy=736.2 r=4.28 /><circle class=ck cx=253.7 cy=751.5 r=4.29 /><circle class=cl cx=257.3 cy=767.0 r=4.29 /><circle class=cn cx=260.9 cy=782.9 r=4.30 /><circle class=cq cx=264.6 cy=799.0 r=4.30 /></g>
<filter id="fB" filterUnits="userSpaceOnUse" x="-300" y="-300" width="1560" height="1824" color-interpolation-filters="sRGB"><feGaussianBlur stdDeviation="35"/></filter>
<filter id="fG" filterUnits="userSpaceOnUse" x="-200" y="-200" width="1360" height="1424" color-interpolation-filters="sRGB">
<feColorMatrix in="SourceGraphic" type="matrix" values="1 0 0 0 0  0 1 0 0 0  0 0 0.15 0 0  0 0 0 1 0" result="src"/>
<feGaussianBlur in="src" stdDeviation="56" result="b56"/>
<feGaussianBlur in="src" stdDeviation="28" result="b28"/>
<feGaussianBlur in="src" stdDeviation="14" result="b14"/>
<feGaussianBlur in="src" stdDeviation="7" result="b7"/>
<feGaussianBlur in="src" stdDeviation="3.5" result="b3"/>
<feComposite in="b56" in2="b28" operator="arithmetic" k1="0" k2="1.35" k3="1.05" k4="0" result="t1"/>
<feComposite in="t1" in2="b14" operator="arithmetic" k1="0" k2="1" k3="0.95" k4="0" result="t2"/>
<feComposite in="t2" in2="b7" operator="arithmetic" k1="0" k2="1" k3="1.3" k4="0" result="t2b"/>
<feComposite in="t2b" in2="b3" operator="arithmetic" k1="0" k2="1" k3="0.6" k4="0" result="t3"/>
</filter>
<filter id="fD" filterUnits="userSpaceOnUse" x="-200" y="-200" width="1360" height="1424" color-interpolation-filters="sRGB">
<feColorMatrix in="SourceGraphic" type="matrix" values="1 0 0 0 0  0 1 0 0 0  0 0 0.15 0 0  0 0 0 1 0" result="src"/>
<feGaussianBlur in="src" stdDeviation="56" result="b56"/>
<feGaussianBlur in="src" stdDeviation="28" result="b28"/>
<feGaussianBlur in="src" stdDeviation="14" result="b14"/>
<feGaussianBlur in="src" stdDeviation="7" result="b7"/>
<feGaussianBlur in="src" stdDeviation="3.5" result="b3"/>
<feComposite in="b56" in2="b28" operator="arithmetic" k1="0" k2="1.35" k3="1.05" k4="0" result="t1"/>
<feComposite in="t1" in2="b14" operator="arithmetic" k1="0" k2="1" k3="0.95" k4="0" result="t2"/>
<feComposite in="t2" in2="b7" operator="arithmetic" k1="0" k2="1" k3="1.3" k4="0" result="t2b"/>
<feComposite in="t2b" in2="b3" operator="arithmetic" k1="0" k2="1" k3="0.6" k4="0" result="t3"/>
<feColorMatrix in="t3" type="matrix" values="0 0 0 0 0  0 0 0 0 0  0 0 0 0 0.11  0 1 0 0 0"/>
</filter>
<filter id="fAmp" filterUnits="userSpaceOnUse" x="0" y="0" width="960" height="1024" color-interpolation-filters="sRGB"><feComponentTransfer><feFuncR type="linear" slope="5"/><feFuncG type="linear" slope="5"/><feFuncB type="linear" slope="5"/></feComponentTransfer></filter>

</defs>
<rect x="0" y="0" width="960" height="1024" fill="#262626"/>
<path d="M170 425 L140 460 L111 498 L83 528 L56 562 L28 598 L0 640 L-20 705 L-27 785 L-20 875 L0 945 L40 1024 L120 1115 L290 1215 L690 1215 L840 1115 L910 1024 L955 955 L980 875 L991 771 L985 675 L960 602 L927 575 L893 542 L870 515 L830 475 L690 435 L290 435Z" fill="#3c6410" filter="url(#fB)"/>
<g filter="url(#fD)"><rect x="-200" y="-200" width="1360" height="1424" fill="#000"/><polygon points="264.6,799.0 260.9,782.9 257.3,767.0 253.7,751.5 250.2,736.2 246.7,721.2 243.3,706.6 240.0,692.2 236.7,678.2 233.5,664.5 230.3,651.1 227.2,638.1 224.2,625.4 221.3,613.1 218.4,601.1 215.6,589.4 212.8,578.1 210.2,567.2 207.6,556.6 205.1,546.4 202.6,536.6 200.3,527.1 198.0,518.0 195.8,509.3 193.6,500.9 191.6,492.9 189.6,485.3 187.7,478.0 185.8,471.0 184.1,464.5 182.4,458.2 180.8,452.4 179.2,446.9 177.8,441.7 176.4,436.8 175.1,432.4 173.8,428.2 172.6,424.3 171.5,420.8 170.5,417.6 169.5,414.7 168.6,412.1 167.7,409.9 167.0,407.9 166.3,406.2 165.6,404.8 165.0,403.6 164.5,402.8 164.0,402.2 163.6,401.8 163.2,401.8 162.9,401.9 162.7,402.3 162.5,403.0 162.3,403.8 162.2,404.9 162.2,406.2 162.2,407.7 162.2,409.5 160.4,409.5 160.3,407.7 159.7,406.2 159.1,404.9 158.6,403.8 158.1,403.0 157.7,402.3 157.3,401.9 157.0,401.8 156.7,401.8 156.5,402.2 157.0,402.8 157.5,403.6 158.1,404.8 158.8,406.2 159.5,407.9 160.2,409.9 161.1,412.1 162.0,414.7 163.0,417.6 164.0,420.8 165.1,424.3 166.3,428.2 167.6,432.4 168.9,436.8 170.3,441.7 171.7,446.9 173.3,452.4 174.9,458.2 176.6,464.5 178.3,471.0 180.2,478.0 182.1,485.3 184.1,492.9 186.1,500.9 188.3,509.3 190.5,518.0 192.8,527.1 195.1,536.6 197.6,546.4 200.1,556.6 203.2,567.2 206.3,578.1 209.5,589.4 212.8,601.1 216.1,613.1 219.5,625.4 223.0,638.1 226.6,651.1 230.2,664.5 233.9,678.2 237.6,692.2 241.4,706.6 245.3,721.2 249.2,736.2 253.2,751.5 257.3,767.0 260.9,782.9 264.6,799.0" fill="rgb(180,255,6)"/><use href="#d"/></g>
<g filter="url(#fG)" style="mix-blend-mode:plus-lighter"><rect x="-200" y="-200" width="1360" height="1424" fill="#000"/><polygon points="264.6,799.0 260.9,782.9 257.3,767.0 253.7,751.5 250.2,736.2 246.7,721.2 243.3,706.6 240.0,692.2 236.7,678.2 233.5,664.5 230.3,651.1 227.2,638.1 224.2,625.4 221.3,613.1 218.4,601.1 215.6,589.4 212.8,578.1 210.2,567.2 207.6,556.6 205.1,546.4 202.6,536.6 200.3,527.1 198.0,518.0 195.8,509.3 193.6,500.9 191.6,492.9 189.6,485.3 187.7,478.0 185.8,471.0 184.1,464.5 182.4,458.2 180.8,452.4 179.2,446.9 177.8,441.7 176.4,436.8 175.1,432.4 173.8,428.2 172.6,424.3 171.5,420.8 170.5,417.6 169.5,414.7 168.6,412.1 167.7,409.9 167.0,407.9 166.3,406.2 165.6,404.8 165.0,403.6 164.5,402.8 164.0,402.2 163.6,401.8 163.2,401.8 162.9,401.9 162.7,402.3 162.5,403.0 162.3,403.8 162.2,404.9 162.2,406.2 162.2,407.7 162.2,409.5 160.4,409.5 160.3,407.7 159.7,406.2 159.1,404.9 158.6,403.8 158.1,403.0 157.7,402.3 157.3,401.9 157.0,401.8 156.7,401.8 156.5,402.2 157.0,402.8 157.5,403.6 158.1,404.8 158.8,406.2 159.5,407.9 160.2,409.9 161.1,412.1 162.0,414.7 163.0,417.6 164.0,420.8 165.1,424.3 166.3,428.2 167.6,432.4 168.9,436.8 170.3,441.7 171.7,446.9 173.3,452.4 174.9,458.2 176.6,464.5 178.3,471.0 180.2,478.0 182.1,485.3 184.1,492.9 186.1,500.9 188.3,509.3 190.5,518.0 192.8,527.1 195.1,536.6 197.6,546.4 200.1,556.6 203.2,567.2 206.3,578.1 209.5,589.4 212.8,601.1 216.1,613.1 219.5,625.4 223.0,638.1 226.6,651.1 230.2,664.5 233.9,678.2 237.6,692.2 241.4,706.6 245.3,721.2 249.2,736.2 253.2,751.5 257.3,767.0 260.9,782.9 264.6,799.0" fill="rgb(180,255,6)"/><use href="#d"/></g>
<use href="#d" filter="url(#fAmp)" shape-rendering="crispEdges"/>

</svg></div>
<div id="panel">
 <div id="combo"><div class="t">Scatter</div><div class="sep"></div>
  <svg width="10" height="6" style="position:absolute;left:104px;top:11px" viewBox="0 0 10 6"><path d="M1 0.8 L9 0.8 L5 5.2 Z" fill="#333"/></svg>
 </div>
 <div class="lbl" style="left:0;width:320px;text-align:center;top:58.5px">Equation</div>
 <div id="eq">x^2 - y^2</div>
 <div class="lbl" style="left:0;width:320px;text-align:center;top:131px">Dimensions</div>

 <div class="lbl it" style="left:-17px;width:100px;text-align:center;top:152.5px">Columns</div>
 <div class="num" style="left:70px;top:154px">-10.0</div>
 <div class="trk" style="top:158px"></div><div class="fill" style="top:158px"></div>
 <div class="hd" style="left:152px;top:154px"></div><div class="hd" style="left:225px;top:154px"></div>
 <div class="num" style="left:280.5px;top:154px">10.0</div>

 <div class="lbl it" style="left:-17px;width:100px;text-align:center;top:174.5px">Rows</div>
 <div class="num" style="left:70px;top:176px">-10.0</div>
 <div class="trk" style="top:180px"></div><div class="fill" style="top:180px"></div>
 <div class="hd" style="left:152px;top:176px"></div><div class="hd" style="left:225px;top:176px"></div>
 <div class="num" style="left:280.5px;top:176px">10.0</div>
</div>
<div id="tb">
 <div id="title">Equation</div>
 <div class="wb" style="left:1183px"><svg width="22" height="22" viewBox="0 0 22 22"><path d="M7 13.5 H15" stroke="#333" stroke-width="1" fill="none"/></svg></div>
 <div class="wb" style="left:1217px"><svg width="22" height="22" viewBox="0 0 22 22"><rect x="7.5" y="7.5" width="7" height="7" stroke="#333" stroke-width="1" fill="none"/></svg></div>
 <div class="wb" style="left:1251px"><svg width="22" height="22" viewBox="0 0 22 22"><path d="M7 7 L15 15 M15 7 L7 15" stroke="#333" stroke-width="1.1" fill="none"/></svg></div>
</div>
</div>
</body>
</html>
